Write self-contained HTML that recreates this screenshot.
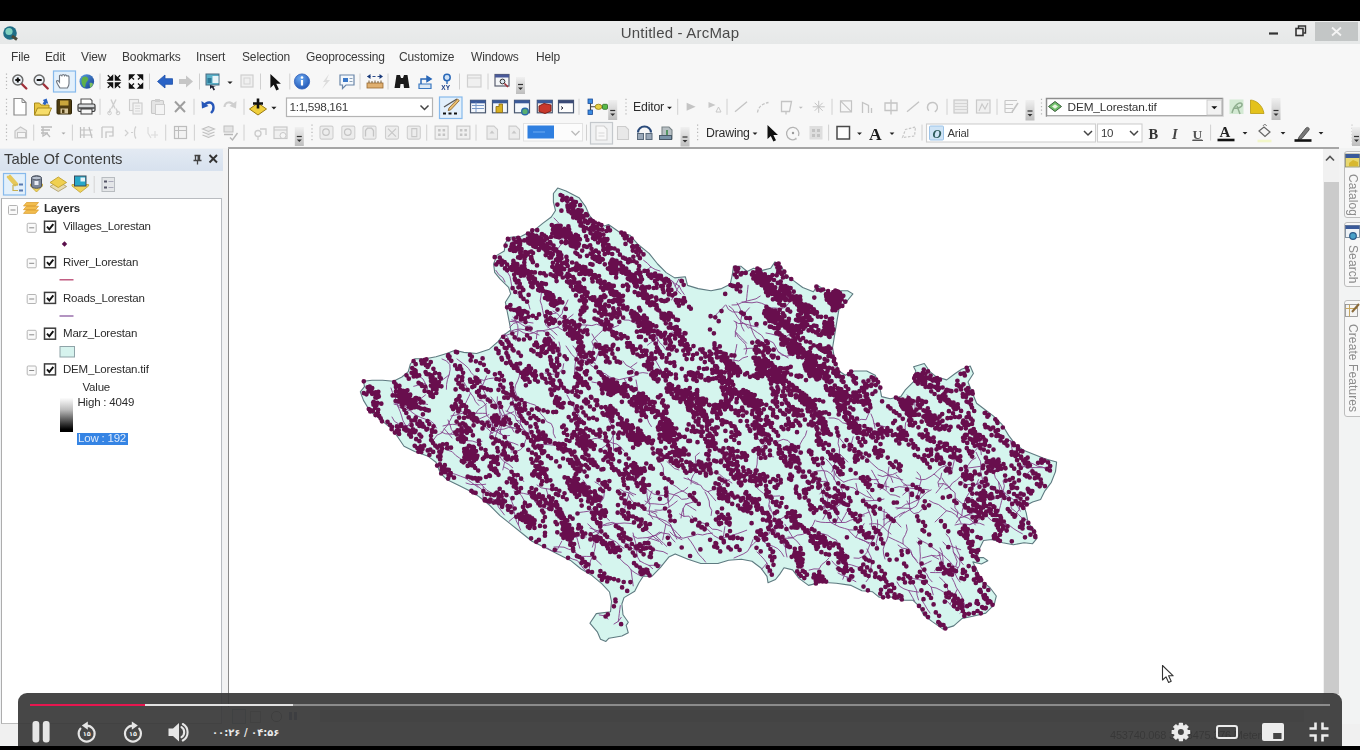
<!DOCTYPE html>
<html lang="en">
<head>
<meta charset="utf-8">
<title>Untitled - ArcMap</title>
<style>
html,body{margin:0;padding:0;}
body{width:1360px;height:750px;overflow:hidden;background:#000;position:relative;font-family:"Liberation Sans",sans-serif;color:#333;}
#frame{position:absolute;left:0;top:21px;width:1360px;height:725px;background:#f3f3f3;overflow:hidden;filter:blur(0.6px);}
.abs{position:absolute;}
#titlebar{left:0;top:0;width:1360px;height:23px;background:linear-gradient(#eceded,#e6e8e8);}
#title{left:0;width:1360px;top:3px;text-align:center;font-size:15px;color:#4a4a4a;letter-spacing:0.2px;}
#menubar{left:0;top:23px;width:1360px;height:25px;background:#f7f7f7;}
#menubar span{position:absolute;top:6px;font-size:12px;letter-spacing:-0.15px;color:#3a3a3a;white-space:nowrap;}
#toolbars{left:0;top:48px;width:1360px;height:79px;background:#f7f7f7;}
#toc{left:0;top:127px;width:223px;height:600px;background:#f0f2f4;}
#tochead{left:0;top:1px;width:223px;height:22px;background:linear-gradient(#e3eaf3,#d7e1ee);}
#toctitle{left:4px;top:3px;font-size:14.8px;color:#3c3c3c;}
#toctree{left:0.500px;top:50px;width:219px;height:524px;background:#fff;border:1px solid #b9bcc0;border-left:1.500px solid #adadad;border-bottom:1.500px solid #bdbdbd;}
.lyr{position:absolute;line-height:13px;font-size:11.5px;color:#2c2c2c;white-space:nowrap;letter-spacing:-0.2px;}
#map{left:228px;top:126px;width:1094px;height:558px;background:#fff;border-left:1px solid #8a8a8a;border-top:2px solid #a6a6a6;}
#maptop{left:228px;top:126px;width:1111px;height:2px;background:#a6a6a6;}
#vscroll{left:1323px;top:128px;width:16px;height:560px;background:#f1f1f1;}
#vthumb{left:0.500px;top:32.500px;width:15px;height:512px;background:#cbcbcb;}
#rdock{left:1341px;top:127px;width:19px;height:600px;background:#f2f3f3;}
.vtab{position:absolute;left:2.500px;width:18px;border:1px solid #bdbdbd;border-radius:3px;background:#f7f7f7;}
.vtab span{position:absolute;left:1.500px;top:18px;writing-mode:vertical-rl;font-size:12px;line-height:14px;color:#8c8c8c;letter-spacing:0.1px;white-space:nowrap;}
#ctrl{position:absolute;left:18px;top:693px;width:1324px;height:53px;background:rgba(56,56,56,0.925);border-radius:9px 9px 0 0;}
#time{position:absolute;left:194px;top:33.500px;font-family:"DejaVu Sans","Liberation Sans",sans-serif;font-weight:bold;font-size:10px;color:#e8e8e8;white-space:nowrap;direction:ltr;}
</style>
</head>
<body>
<div id="frame">
  <div id="titlebar" class="abs"></div>
  <div id="title" class="abs"><span id="titlespan">Untitled - ArcMap</span></div>
  <div id="menubar" class="abs">
    <span style="left:11px">File</span>
    <span style="left:45px">Edit</span>
    <span style="left:81px">View</span>
    <span style="left:122px">Bookmarks</span>
    <span style="left:196px">Insert</span>
    <span style="left:242px">Selection</span>
    <span style="left:306px">Geoprocessing</span>
    <span style="left:399px">Customize</span>
    <span style="left:471px">Windows</span>
    <span style="left:536px">Help</span>
  </div>
  <div id="toolbars" class="abs"></div>
  
  <div id="toc" class="abs">
    <div id="tochead" class="abs"></div>
    <div id="toctitle" class="abs">Table Of Contents</div>
    <div id="toctree" class="abs"></div>
    <div class="lyr" style="left:44px;top:53.8px;font-weight:bold" id="t_layers">Layers</div>
    <div class="lyr" style="left:63px;top:72.2px" id="t_vil">Villages_Lorestan</div>
    <div class="lyr" style="left:63px;top:107.8px" id="t_riv">River_Lorestan</div>
    <div class="lyr" style="left:63px;top:143.5px" id="t_road">Roads_Lorestan</div>
    <div class="lyr" style="left:63px;top:179.2px" id="t_marz">Marz_Lorestan</div>
    <div class="lyr" style="left:63px;top:214.9px" id="t_dem">DEM_Lorestan.tif</div>
    <div class="lyr" style="left:82.500px;top:233.2px" id="t_val">Value</div>
    <div class="lyr" style="left:77.500px;top:247.5px" id="t_high">High : 4049</div>
    <div class="abs" style="left:77px;top:284.500px;width:50.500px;height:12.500px;background:#3584e4"></div>
    <div class="lyr" style="left:78px;top:284.1px;color:#dce9fb" id="t_low">Low : 192</div>
    <div class="abs" style="left:59.500px;top:249.500px;width:13px;height:34.500px;background:linear-gradient(#fdfdfd,#bbb 35%,#000 92%)"></div>
  </div>
  <div id="map" class="abs"></div><div id="maptop" class="abs"></div>
<!--MAP-START-->
<svg id="mapsvg" class="abs" style="left:0;top:-21px" width="1360" height="750" viewBox="0 0 1360 750"><path d="M557.7 188.1 566 191 579 197.7 585.4 206.3 589.7 215.9 596 223 604.6 226 608.5 224.5 619.2 232 629.9 235.2 638.4 244.8 649.1 253.4 657.6 264 666.2 272.6 674.7 277.9 685.4 276.8 687.5 285.4 698.2 288.6 711 290.7 721.6 288.6 730.2 284.3 732.3 274.7 733.4 266.2 740.8 266.2 747.2 271.5 753.6 268.3 762.2 270.4 770.7 268.3 775 261.9 781.4 266.2 785.7 274.7 794.2 281.1 802.7 287.5 813.4 291.8 817.7 285.4 824.1 289.6 830.5 292.8 839 290.7 847.6 290.7 852.9 293.9 847.5 300.5 839 309 836.8 321.9 834.7 334.7 832.6 347.5 834.7 360.3 839 371 845.4 375.2 853.9 371 866.7 371 875.2 375.2 879.5 385.9 881.6 396.6 890.2 398.7 900.8 396.6 905.1 390.2 913.6 381.6 915.8 371 913.6 366.7 924.3 363.5 929.6 371.3 936 376.7 946.7 379.9 955.2 373.5 961.6 369.2 970.2 366 973.4 373.5 968 382 972.3 392.7 976.6 403.3 985.1 409.7 993.6 416.1 1002.2 424.7 1008.6 435.4 1015 443.9 1023.5 450.3 1034.2 454.6 1044.9 458.8 1056.6 462 1055.5 471.6 1051.3 482.3 1044.9 490.8 1040.6 499.4 1032.6 502.1 1024.1 506.4 1026.2 512.8 1028.3 523.5 1034.7 529.9 1036.9 538.4 1032.6 543.7 1024.1 542.7 1013.4 544.8 1002.7 542.7 992.1 539.5 983.5 540.5 979.3 549.1 977.1 557.6 983.5 557.6 987.8 560.8 981.4 564 972.9 561.9 977.1 570.4 981.4 581.1 989.9 587.5 996.3 596 994.2 604.6 985.7 613.1 972.9 616.3 962.2 618.4 953.7 625.9 943 629.1 932.3 621.6 923.8 615.2 919.5 606.7 913.1 600.3 902.4 600.3 891.8 597.1 879 597.1 872.6 591.8 861.9 590.7 851.2 585.4 836.3 583.2 821.3 582.2 808.5 585.4 799 578.4 792.6 569.9 784 567.7 779.8 574.1 775.5 579.5 768 582.7 767 576.3 760.6 567.7 752 561.3 741.4 559.2 728.6 560.3 717.9 563.5 700.8 563.5 688 559.2 675.2 553.9 668.8 557.1 660.3 567.7 651.8 576.3 643.2 576.3 639 582.7 634.7 591.2 624 597.6 621.9 604 623 614.7 628.3 622.2 626.2 625.4 628.3 632.8 621.9 636 609 638.2 605.9 641.4 600.5 639.2 597.3 631.8 589.9 623.2 596.3 613.6 610.5 611.8 611.5 601.5 609.5 592 602 583.9 591.8 575.4 581.1 569 570.5 560.4 557.7 554 544.9 547.6 532 541.2 521.4 532.7 510.7 524.1 500 515.6 489.4 505 478.7 496.4 468 490 459.5 485.8 446.7 479.4 440.3 473 436 462.3 427.5 455.9 414.7 451.6 404 446.3 397.6 436.7 391.2 428.2 380.5 419.6 369.9 411 363.5 400.4 360.3 391.9 364.5 386.6 363.5 381.2 372 380.2 382.7 380.2 393.4 381.2 401.9 377 408.3 371.6 410.4 364 414.7 358.8 425.4 358.8 436 356.7 446.7 353.5 455 350.3 463.8 352.4 476.6 353.5 489.4 349.2 498 341.7 502 336.4 510.7 330 509.6 323.6 507.5 313 505.4 302.3 510.7 293.8 508.6 287.4 500 278.8 494.7 272.4 493.6 263.9 496.8 255.4 504.3 251 505.4 242.6 510.7 237.2 521.4 236.2 527.8 233 536.3 228.7 542.7 223.4 551.3 217 555.5 210.5 553.4 202 553.4 193.5Z" fill="#d5f5ee" stroke="#5e7a80" stroke-width="1.1" stroke-linejoin="round"/><path d="M844 482 848.7 480.3 853.5 479.1 858.5 479 863.5 478.1 868.3 479.4 873.3 479.6 878.3 479.7M988 460 990.8 464.2 993.9 468 994.1 473 995.4 477.8 998.5 481.8 1000.8 486.2 1002.5 490.9 1005.1 495.2 1008.9 498.4M998.5 481.8 999.1 485.7 999.6 489.7M559 342 560.2 346.9 560.1 351.9 558.5 356.6 555.8 360.8 554.4 365.6 555.5 370.5M595 368 590.8 365.3 587.8 361.3 585.6 356.8 583.3 352.4M587.8 361.3 584 360.2 580.1 359.1 576.3 358M790 516 785 516.4 780.7 518.9 777.8 523 774.2 526.5 771.2 530.5 768.5 534.7 764.1 537.2 759.8 539.7 754.9 538.9M771.2 530.5 768.3 533.2 765.4 535.9 762.4 538.7M749 327 753.3 329.5 757.4 332.5 761.5 335.2 764.4 339.3 767.3 343.4M929 490 924.1 489.3 919.1 489.3 914.1 488.5 909.1 488.1 904.2 487.2 899.3 486.6 894.4 487.8 890.3 490.7M845 500 843.2 495.3 842.2 490.4 839.9 486 836.2 482.7 834 478.2 831.2 474 827.1 471.2 822.1 470.6 817.1 471 812.3 472.3M648 514 652.4 516.3 657.3 517.5 661.9 519.4 666.5 521.3 670.4 524.4 672.4 529 674.6 533.5 677.3 537.7 681.9 539.6M670.4 524.4 672 528.1 673.6 531.8 675.2 535.4 676.8 539.1M557 335 553.4 331.6 549.5 328.4 545.7 325.1 545.4 320.1 543.8 315.4 542.7 310.5 541.8 305.6 540.2 300.9 541 295.9 541.6 291M543.8 315.4 547.7 314.7 551.7 313.9 555.6 313.2M829 558 825.5 561.6 821.6 564.7 819 569 814 568.9 809.1 570.1M659 354 658.5 349 657.6 344.1 657.5 339.1 656.3 334.3 655.4 329.3 652.5 325.3 648.3 322.5 643.4 321.3 639.9 317.8 636.1 314.5M961 523 958.8 518.5 955.6 514.7 951.3 512 946.5 510.7 942.6 507.6 938.6 504.6 933.8 503 929.4 500.6M946.5 510.7 943.7 513.5 940.8 516.3 938 519.1 935.1 521.9M917 542 919.9 546.1 920 551.1 920.4 556.1 919.9 561.1 920.4 566 922.7 570.4 926.6 573.6 928.7 578.1 932.1 581.8M920.4 566 924 564.4 927.6 562.7 931.2 561M811 474 814.1 477.9 816.7 482.2 819.7 486.2 822.1 490.6 825.2 494.5 827.9 498.8 827 503.7 823.1 506.9M822.1 490.6 822.7 494.6 823.2 498.5M568 300 565.9 304.5 563.2 308.7 562.1 313.6 558.8 317.4 555.5 321.2 551.4 324 547.8 327.5M391 388 392.6 392.7 395.2 397 396.3 401.9 398 406.6 400 411.2 401.6 415.9 403 420.7 405.5 425.1M398 406.6 401.8 407.9 405.6 409.2 409.3 410.5M896 475 899.8 478.2 902.4 482.5 906.5 485.3 908.9 489.7 909.4 494.7 909.5 499.7 909.4 504.7M908.9 489.7 905.9 492.3 902.8 494.9M530 326 525 326.4 520.7 323.8 516.6 321.1 511.7 319.9M960 582 957.1 578 955 573.4 950.5 571.2 945.5 571.5 940.6 572.6 935.6 572.6 930.6 572.5M945.5 571.5 942.9 568.4 940.3 565.4M441 432 445.7 433.8 450.7 434.1 454.1 430.5M450.7 434.1 454.6 434.5 458.6 434.9 462.6 435.3M943 542 946.3 545.7 951.3 546.3 956 548 960.7 549.7M451 416 455.9 415 460.7 413.7 465.7 412.8 470.6 413.2 475.6 413.4 478.6 409.4 482.8 406.7 486.7 403.5M470.6 413.2 474.6 413.2 478.6 413.3 482.6 413.3 486.6 413.4M838 573 842.4 575.4 847.1 577 851.5 579.4 855.9 581.7M847.1 577 847.4 581M448 420 450 424.6 451.3 429.4 454.3 433.4 459 435.3 463.1 438.1 467.4 440.7 472.4 441 477.1 442.6 482 441.3M463.1 438.1 463.4 434.1 463.7 430.1 464 426.1 464.4 422.1M459 377 462.7 380.4 465.4 384.6 467.6 389 470.5 393.1 473.5 397.1 475.5 401.7 478.9 405.4M470.5 393.1 468.8 396.7 467 400.3 465.3 403.9M646 488 649.8 491.2 653.9 494.1 658.8 495.1 663.8 495.5 668.3 493.4 673.2 494.5 678 496.1 681.7 499.3 686.7 498.9 691.3 496.8M640 561 644.4 563.4 648.9 565.4 652.7 568.7M648.9 565.4 652.9 565.3 656.9 565.2 660.9 565.1M854 558 859 558.3 863.5 556.2 866.9 552.5 868.6 547.8 870.5 543.2 873.4 539.1 875.1 534.4 876.9 529.7 877.7 524.8 877.4 519.8M870.5 543.2 866.8 541.8 863.1 540.4 859.3 538.9M599 534 595.2 530.8 591.5 527.4 587.8 524M605 412 608 416 609.2 420.9 611.5 425.3 613.5 429.9 613.2 434.9 611.4 439.5 608.2 443.4 604.4 446.5 600.2 449.3M613.2 434.9 613.3 438.9 613.4 442.9 613.5 446.9 613.6 450.9M756 436 758.9 440.1 763.6 441.8 768.6 442 773.5 441 778.5 441.1 783.2 439.3 788 440.5 791.3 444.3 795 447.6M829 418 834 418 838.8 419.5 842.6 422.8 847.4 423.9 852.4 424.2 856.6 421.5 861.1 419.3 866.1 419.7 868 415.1 870.2 410.6M852.4 424.2 849.6 421.4 846.7 418.6M536 438 531.7 435.5 527.5 432.7 523.4 429.9 518.5 429 513.6 428 508.6 427.5 503.9 429.1 498.9 429.6 494.3 431.5 490.1 434.2M513.6 428 509.8 426.7 506 425.4M554 547 559 546.9 564 547.2 568.5 549.2 573.4 550.4 576.7 554.2 581.2 556.4 586.2 556.4 591.2 556.5M573.4 550.4 576.3 553.1 579.3 555.8M547 548 551.4 550.5 556.2 551.7 561.2 552.2M556.2 551.7 558.1 548.1 560 544.6 561.8 541.1M877 480 879.4 484.4 882.5 488.3 886.7 491.1 890.3 494.6 895.2 495.2 899.8 497.2M620 489 624.2 491.7 629.1 492.9 633.2 495.8M629.1 492.9 628 496.7 626.9 500.6 625.8 504.4 624.7 508.3M918 563 915 559 912 555 910.7 550.2 906.7 547.1 903 543.9 903 538.9 905.5 534.5 907.2 529.8 906.4 524.9M903 543.9 899.4 542.1 895.7 540.4 892.1 538.7 888.5 537M514 432 511.6 427.6 508.5 423.7 505.7 419.6 502.3 415.9 500.1 411.4 498.7 406.6 497.2 401.8 497.4 396.8M502.3 415.9 506.1 414.5 509.9 413.2 513.6 411.8M726 305 728.4 309.4 732.7 311.9 737.7 312.1 742.1 314.4 745.5 318 750.5 318.4M816 521 820.8 522.2 825.8 522.5 830.8 522.5 835.8 522.4 840.8 522.5 845.8 522.4 850.3 520.3 855.1 518.7 859.3 516.1 864.3 515.9M840.8 522.5 842.8 519 844.8 515.5 846.7 512M1051 472 1046.6 469.7 1042.4 466.9 1037.5 466.2 1033.1 463.8 1028.4 462 1023.8 460 1020.2 456.5 1017.1 452.6 1012.7 450.2M1028.4 462 1025.6 464.9 1022.8 467.7M940 548 942.2 552.5 942.8 557.4 943.1 562.4 944.4 567.2 944.2 572.2M943.1 562.4 940.2 565.2 937.3 568 934.5 570.8M917 472 920.2 475.8 921.1 480.7 919.7 485.5 919.1 490.5 917.2 495.1M919.7 485.5 915.7 485.4 911.7 485.3 907.7 485.2 903.7 485.1M610 331 605.5 328.8 601.4 325.9 596.7 324.2 591.9 325.6 586.9 325.1 581.9 324.9 577.1 323.6 572.2 322.5 567.3 323.2M586.9 325.1 584.7 328.4 582.4 331.7M510 497 511.8 501.7 513.7 506.3 514 511.3 515.3 516.1 516.3 521 518.7 525.4 520.6 530.1M515.3 516.1 512.2 518.7 509.1 521.3M634 524 629 523.3 624.1 523 619.1 523.4 614.1 523.4 609.3 524.9 604.3 525.6 599.7 523.8 595.6 520.9M756 487 759.7 490.4 763.6 493.5 767.7 496.4 769.5 501 768.7 506 770.3 510.7M767.7 496.4 771.7 496.2 775.7 496.1 779.7 495.9M590 528 594.7 529.7 599.3 531.6 602.8 535.2 607.2 537.4 611.7 539.8 616.2 541.9 619.7 545.5 623.9 548.2M675 542 671.6 538.3 669.1 534 664.1 533.3 659.2 532.2 655.2 535.2 650.8 537.4 647.4 541.2 644.6 545.3 642.2 549.7M655.2 535.2 658.1 538 661 540.8 663.8 543.6 666.7 546.4M491 397 494 401 497 405 499.2 409.5 500.1 414.4 501.3 419.3 500.7 424.2 498.5 428.7 496.5 433.3 495 438 496.1 442.9M501.3 419.3 504.7 421.4 508 423.6M466 483 470.8 484.5 475.8 484.5 480.7 484.8 485.7 484.2M475.8 484.5 478.8 487 481.9 489.6 484.9 492.2M715 355 720 355.4 724.1 358.2 728.9 359.7 733.9 360.2 738.8 361 742.8 358 747.6 356.5M733.9 360.2 734.6 356.3 735.3 352.4 736.1 348.4 736.8 344.5M744 331 741.7 326.6 740.5 321.7 741.5 316.8 741.3 311.8 739.5 307.1 737 302.8M741.5 316.8 744.1 313.8 746.7 310.8 749.4 307.8M419 376 423 379 425.3 383.4 427.6 387.9 426.9 392.8M425.3 383.4 421.5 384.4 417.6 385.3 413.7 386.3M759 534 762.2 537.9 764.3 542.4 768.6 544.8 773.4 546.4 777.8 548.7 781.3 552.3 783.9 556.5M567 537 571.9 538.2 576.6 536.7 581.5 535.5 586.2 537.1M576.6 536.7 577.7 540.6 578.7 544.5 579.8 548.3M950 594 947.8 589.5 946.4 584.7 943.3 580.8 939.6 577.4M843 494 842.7 499 841 503.7 836.9 506.6 832.5 508.9 827.8 510.5 825.3 514.9 822.9 519.3M832.5 508.9 834.8 512.1 837.1 515.4 839.4 518.7 841.8 521.9M473 476 475.8 480.1 480.1 482.8 483.3 486.6 486.8 490.1 491.1 492.7M483.3 486.6 483.2 490.6 483.1 494.6 483 498.6M1003 491 1006.7 494.3 1010.6 497.5 1014.6 500.5 1019 502.9 1023.8 504.1M1014.6 500.5 1016.5 504 1018.4 507.6 1020.3 511.1M891 534 887.1 530.9 883.7 527.2 879.5 524.5 874.6 523.6 869.6 524M922 558 926.8 556.7 931.7 555.4 936.6 556 941.5 554.9M931.7 555.4 935.2 557.3 938.7 559.1M595 482 599.3 484.6 602.3 488.5 604.3 493.1 603.6 498.1 600.7 502.2 597 505.5 593.1 508.6 588.8 511.2 583.8 511.9 578.9 512.5M600.7 502.2 598.9 498.6 597.1 495M651 512 655.7 513.8 657.7 518.3 661.9 521.1 665.9 524.1 670.4 526.2 674 529.7 677.4 533.3 680.9 536.9M665.9 524.1 665.1 528 664.3 531.9 663.5 535.8 662.7 539.8M633 533 634.2 537.9 635.6 542.7 637.1 547.4 636.6 552.4 637.7 557.3 640.2 561.6M637.1 547.4 641.1 547.4 645.1 547.3 649.1 547.3 653.1 547.2M568 557 572.6 559.1 577.3 560.5 580.5 564.4 583.3 568.5 586.9 572M889 467 888.2 471.9 888 476.9 885.7 481.4 883.5 485.9 880.2 489.6M885.7 481.4 886 485.4 886.3 489.4M636 380 636.9 384.9 637.6 389.9 638.9 394.7 642 398.6 644.3 403 645.3 407.9 645.5 412.9 647.1 417.7 648.7 422.4 651.4 426.6M689 495 684.8 492.3 680.4 490 676.5 486.8 672.2 484.2 668.1 481.3 664.7 477.7 663.4 472.8 663.3 467.8 661 463.4M538 444 543 444.6 548 444.6 552.9 445.1M885 559 883.6 554.2 883.2 549.2 884.6 544.4 886.9 540 888.2 535.2 888.5 530.2 890.1 525.4 892.1 520.9 895 516.8M530 309 528.6 304.2 525 300.7 521.7 297 517.5 294.3 514.6 290.2 511.7 286.1 510.9 281.2 509.9 276.3 507.4 272 504.3 268.1M826 459 829.5 462.6 832.5 466.6 834.2 471.3 836.1 475.9 839.8 479.3 843.8 482.2M834.2 471.3 834.1 475.3 834 479.3M505 334 508.1 337.9 509.7 342.6 510.1 347.6M930 613 927.1 608.9 924.7 604.6 921.9 600.4M864 456 867.7 459.4 871.3 462.8 875 466.2 878.8 469.4 883.4 471.3 887.7 474 891.1 477.7 892.8 482.4M538 331 543 330.6 547.9 329.7 552.8 328.6 557.5 327.1 561.2 323.7 565.1 320.5 569.1 317.6 573.1 314.5M557.5 327.1 561 329.1 564.4 331.1M945 489 949.6 487 952.5 482.9 956.6 480.2 960.1 476.6 963.7 473.1 965.5 468.4 968.6 464.5 971.5 460.4 975.8 457.9M518 445 513.4 443.1 508.6 441.7 504.9 438.3 501.7 434.4 498.8 430.4 494.9 427.3 491.1 424 488.6 419.7M884 499 879.2 500.3 874.2 500.4 869.2 500.8 864.2 500.6M874.2 500.4 871.8 497.2 869.4 494 867 490.8M392 417 394.5 421.4 398.7 423.9 403.4 425.7 408.4 425.7 413.2 424.4M403.4 425.7 405.7 429 407.9 432.3 410.2 435.6M483 500 488 499.9 492.9 499 496.8 502.1 498.3 506.9 501.4 510.9 504.4 514.9M702 527 706.8 528.5 710.3 532.1 713.8 535.6 718.2 538.1 723.1 538.4 727.6 536.2 732.5 535.1 737.3 533.7 742 532 746.7 530.2M723.1 538.4 723.7 534.5 724.3 530.5 724.9 526.6M583 480 586 484 589 488 592.6 491.5 596.9 494 599.5 498.3 600.2 503.2 601.8 508 604 512.5 605.9 517.1 609.4 520.6M907 501 909.4 505.4 910.2 510.3 914 513.6 918.8 512.4 922.5 509 926.3 505.8 931.1 504.5M442 359 446.6 361 449.9 364.7 450.1 369.7 449.2 374.7 447.5 379.4 446.6 384.3 446.4 389.3M449.2 374.7 446.1 377.2 442.9 379.6 439.8 382.1M691 484 691.4 479 693.6 474.5 697.1 470.9 696.3 466 695.6 461.1 695.4 456.1 699.3 452.9M545 373 549.8 374.5 554.7 374 559.4 372.4 562.8 368.6 563.7 363.7M684 478 688.7 479.6 693.4 481.3 698 483.5M787 557 785.9 552.1 785.4 547.1 786.3 542.2M514 491 518.7 492.7 523.6 493.4 528.5 494.5 532.4 497.6 535.1 501.8 539.4 504.5 543.2 507.7 548.1 508.8 553.1 508.6M535.1 501.8 538.1 504.5 541 507.2M457 359 461 362 465 365 468.6 368.5 471.2 372.7 474.7 376.3 478.9 379 483.7 380.4 488.5 378.7 493.4 378.1M474.7 376.3 476.6 379.8 478.5 383.3M591 356 592.7 351.3 593.6 346.4 591.9 341.7 594.9 337.7 598.5 334.3 602.1 330.8 606.9 329.3 611.3 331.6 616.3 331.3 620.6 334M871 498 866.3 496.3 862 493.7 857.7 491.2 853.9 488 849 486.9 844.2 485.4M857.7 491.2 856.8 487.3 856 483.4M956 523 959.2 519.1 961.9 514.9 962.4 510 964.1 505.2 964.9 500.3 967.2 495.9 970 491.7 973 487.8 976.5 484.2 978.5 479.6M964.9 500.3 968.7 499 972.4 497.8M972 433 976.2 435.7 978.9 439.9 980.2 444.7 980.8 449.7 981.3 454.7M980.2 444.7 977.6 447.8 975 450.8 972.4 453.9 969.8 456.9M916 478 920.6 479.8 925.6 479.3 930 476.9 934.1 474.1 937.7 470.6 941.5 467.3 946.2 465.5M934.1 474.1 937.2 476.7 940.2 479.3M692 516 694.7 520.2 699.3 522 704.1 523.4 708.6 525.6 712.2 529.1 717.2 529.5 721.8 531.3M666 350 663.1 345.9 659.6 342.4 657.2 338 653 335.3 648.7 332.7 643.7 332.1M657.2 338 654 340.4 650.7 342.7 647.5 345.1M863 456 858.3 454.2 854.1 451.6 850.3 448.3 845.9 446 842.8 442 839.6 438.2M850.3 448.3 851.3 444.4 852.2 440.6 853.2 436.7M621 527 616.9 524.1 612.2 522.3 607.4 523.4 602.7 525.3 600.1 529.5 597.9 534 594.1 537.3 593.9 542.3 592.4 547.1M600.1 529.5 596.4 531.2 592.8 532.8M1016 495 1017.4 499.8 1019.7 504.2 1019.5 509.2 1016.4 513.2M671 280 674.7 283.4 679.1 285.8 681.3 290.3 684.2 294.4M679.1 285.8 677.2 289.4 675.3 292.9 673.5 296.4 671.6 300M660 271 655.2 269.5 650.9 267 647.5 263.3 643.6 260.3M650.9 267 647.6 269.4 644.4 271.7 641.2 274.1M506 411 510.6 413 514.8 415.7 516.4 420.4 520.1 423.8 522.7 428.1M516.4 420.4 520.3 421.1 524.3 421.7 528.2 422.3M530 441 528.3 436.3 526.1 431.8 522.9 427.9 520.5 423.6 520.6 418.6 518.6 414 517.5 409.1 518.4 404.2 519.2 399.2M837 434 838.6 438.7 838.1 443.7 839.5 448.5 839.3 453.5 837.3 458.1 835.1 462.6 833.6 467.3 831.9 472M839.3 453.5 842.1 456.3 845 459.2 847.8 462M533 323 528 322.3 523 322.2 518.1 321.9 513.3 323.6 509.9 327.2M518.1 321.9 514.1 321.7 510.1 321.4M624 451 620.8 447.1 616.9 444.1 612 442.9 607.6 440.6 602.7 439.7 597.9 438.1 593 438.9 589 441.9 585.4 445.3 580.4 444.6M633 536 637.4 538.3 642.4 537.9 647.4 537.6 652.2 536.3 657.1 535 661.3 532.3M647.4 537.6 651.2 538.8 655 540 658.8 541.3M986 512 987.4 516.8 991.1 520.2 995.7 522 1000.7 521.6 1005.4 523.4 1009.8 525.7 1013.8 528.8 1018 531.4 1022.4 533.8M1005.4 523.4 1005.9 527.4 1006.4 531.4M451 473 455.8 474.4 460.5 476.2 465.2 477.9 470.2 477.9 475.1 477.5M465.2 477.9 468.4 480.3 471.6 482.6 474.9 485 478.1 487.3M959 518 963.9 516.8 968.4 514.8 971.7 511M968.4 514.8 972.4 515.3 976.4 515.7M983 481 981.7 476.2 980.7 471.3 980.9 466.3 980.5 461.3 978.2 456.8 976.1 452.3M980.9 466.3 976.9 466.8 973 467.4 969 467.9 965 468.5M764 340 769 340.5 773.4 342.8 775.8 347.1 778.1 351.6 781.8 355 786.6 356.2 791.5 355.2 795.5 352.2M778.1 351.6 781.5 353.7 784.8 355.8 788.2 358M583 357 587.8 358.5 592.4 360.4 595.6 364.3M907 395 911 398 914.7 401.4 915 406.4 915.1 411.4 912.7 415.8 909.1 419.3 905.6 422.8 905.1 427.8 906 432.7M499 387 503.3 389.5 507.4 392.5 511.2 395.7 513.1 400.3 513.2 405.3 515 409.9 516.1 414.8 519.6 418.4M513.1 400.3 511.2 403.8 509.3 407.3 507.4 410.8M554 218 557.5 221.6 560.6 225.5 561.2 230.4 563 235.1 561.8 240 560.7 244.8 557.8 248.9 553.6 251.6 548.7 252.5M519 330 523.2 332.7 528 334.2 532.8 333.1 537.3 330.8 542.3 330.8 547 332.6 551.2 335.2 554.5 338.9M537.3 330.8 536.8 334.7 536.4 338.7M921 492 919.3 496.7 918.6 501.7 916.3 506.1 911.9 508.5 907.6 511 903.2 513.5 899.5 516.8M911.9 508.5 907.9 508.3 903.9 508.2 899.9 508 895.9 507.8M492 428 495.7 431.3 500.1 433.8 504.5 436.1 509.5 435.5M500.1 433.8 500.7 429.9 501.4 425.9 502.1 422 502.8 418.1M908 578 911.3 581.8 914.4 585.7 916.5 590.2 917.1 595.2 918.6 600M553 311 557.3 313.5 560.5 317.4 564.9 319.8 568.3 323.4 571.7 327.1 574.6 331.2M564.9 319.8 563.8 323.6 562.6 327.5M567 395 569.4 399.4 572.3 403.4 574.2 408.1 577 412.2 579.4 416.6 583 420M574.2 408.1 574 412 573.7 416 573.5 420M394 404 398.8 405.4 403.5 403.9 408.4 402.9 413 405 417.7 403.2 422.7 403.3 427.6 404.5M413 405 416.1 402.4 419.2 399.9 422.4 397.4 425.5 394.9M871 414 872.9 418.6 874 423.5 875.1 428.4M874 423.5 877.8 424.7 881.6 425.8 885.4 427M705 492 707.3 496.4 709.2 501.1 709.5 506.1 711.8 510.5 711.1 515.5M710 318 714.7 316.3 718 312.6 721.7 309.1 725 305.4M641 552 636.2 550.5 631.8 548.1 628.6 544.3 623.7 543.2M681 294 677.3 290.6 675.2 286.1 672.7 281.8M675.2 286.1 677 282.6 678.8 279M956 546 957.4 550.8 959.6 555.3 960 560.3 959.6 565.3 957.1 569.6M878 548 876.1 543.4 877.3 538.5 878.4 533.6 880.5 529.1 884 525.5 887.7 522.1 892.3 520.2 896.1 517.1 900.1 514 904.7 511.9M884 525.5 884 521.5 884.1 517.5 884.1 513.5 884.2 509.5M744 349 749 348.3 753.9 348.2 758.9 348.2M732 305 737 304.8 741.6 302.7 746.3 301.2 751.2 300 756 298.8 760.2 296.1M746.3 301.2 746.8 297.3 747.2 293.3 747.7 289.3 748.1 285.3M600 319 604.5 321.1 607.8 324.8 611.4 328.4 614.7 332.1 618.6 335.3 622.1 338.8M611.4 328.4 615 326.8 618.7 325.2M515 488 517.9 492.1 521.4 495.6 523.9 500 524.8 504.9 524.3 509.9M523.9 500 526.6 503 529.2 505.9M832 561 835.2 564.8 839.5 567.5 844 569.7 844.6 574.6 842.8 579.3M844 569.7 840 569.1 836 568.4M670 532 673.6 535.5 678.3 537.2 683.2 538.2 688 536.9 692.9 535.9 697.6 534.2 702.6 535 707.4 533.7 712.4 533.1M455 412 452.3 416.2 450 420.6 447.6 425 444.3 428.8 441.7 433.1 437.1 435 434.1 439 431.7 443.4M444.3 428.8 446.9 431.8 449.5 434.9 452 438M901 527 897.6 523.4 894.1 519.8 890.5 516.3 886.9 512.8 882.3 511 877.8 508.7M890.5 516.3 886.8 517.8 883.1 519.4M594 537 595.1 541.9 595.3 546.9 594.2 551.7 592.6 556.5 590.4 561 589.8 565.9 588.8 570.8M592.6 556.5 595.5 559.2 598.4 562 601.3 564.7M749 500 744.5 502.2 741.9 506.5 741.8 511.5M951 490 948 486 943.6 483.6 938.7 483.9M943.6 483.6 941.1 486.7 938.6 489.8 936.1 492.9M1006 439 1010.6 440.9 1015.3 442.6M1010.6 440.9 1011.3 444.9 1012 448.8 1012.8 452.8 1013.5 456.7M897 509 901.7 507.3 905.7 504.3 910.6 503.3 915.1 501.1 919.8 499.3 923 495.5 926.8 492.3 931.2 489.9M624 320 629 320.1 633.5 322.4 638.2 324 642.3 326.9 646.2 330 649.8 333.5 652 338 654.1 342.5 657.8 345.8 660.8 349.8M646.2 330 650.1 330.9 654 331.9 657.9 332.8 661.8 333.8M505 282 502.7 277.6 498.7 274.5 495.9 270.4M889 487 884.1 485.9 879.4 484.2 874.5 483.5M879.4 484.2 877.5 480.7 875.5 477.2 873.6 473.7 871.6 470.2M657 512 652.1 511.1 647.1 511 642.5 508.9 638.5 505.9 634.4 503.1 630.8 499.6 628.6 495.1M952 452 954.5 456.3 954.1 461.3 953 466.2 951.8 471 948.6 474.9M824 504 824.9 508.9 827.1 513.4 828.2 518.3 830.8 522.6 835.2 524.8 839.7 527 844.5 528.4 849.3 529.8 854.3 530.1 859.3 529.4M835.2 524.8 836.7 521.1 838.1 517.4M614 624 618.3 621.4 621.2 617.4M618.3 621.4 618.8 617.5 619.3 613.5 619.8 609.5 620.3 605.6M456 408 460.3 410.6 464.5 413.3 468.9 415.7 473.1 418.3 478 419.5 481.4 423.2 485 426.6 488.9 429.8 492.4 433.4M478 419.5 481.6 417.9 485.3 416.3 488.9 414.6M869 544 865 541.1 860.3 539.1 855.7 537.3 852 533.9 848.7 530.2M855.7 537.3 857.8 533.9 859.9 530.5 862 527.1 864.1 523.7M443 426 447.9 424.8 452.8 424.3 457.8 424.9 462.5 426.5 467.5 427 471.1 430.5 474.3 434.3M462.5 426.5 460.3 429.9 458 433.2M504 467 508.5 469.3 512 472.8 516.6 474.9 520.7 477.6 523.8 481.6M516.6 474.9 516.1 478.8 515.6 482.8 515.1 486.8M566 346 568.8 350.1 571.6 354.3 575.2 357.7 579.6 360M592 382 596.9 382.9 601.8 383.9 606.5 385.6 611.5 385.5 616.5 384.8 621.2 386.4 625.6 388.7 628.1 393.1 629.5 397.9M616.5 384.8 613.4 387.4 610.4 390 607.4 392.6M617 556 620.7 559.4 624.1 563 628.2 565.9 631.1 570 635.2 572.9 639.6 575.3 644.6 575.2M631.1 570 631.6 574 632.1 577.9 632.7 581.9 633.2 585.9M623 361 626 365 630.4 367.4 634.6 370.1M630.4 367.4 633.6 365 636.9 362.7M688 478 691.4 481.7 695.9 483.9 700.7 485.2 703.5 489.4 707.9 491.7 712.5 489.9 717 487.6 721.5 485.5 724.7 481.7 729.3 479.7M707.9 491.7 710.5 494.7 713.1 497.7 715.7 500.8M692 520 688.9 516.1 683.9 516.4 679.6 513.9M683.9 516.4 683.5 512.4 683.2 508.4M528 422 529.1 426.9 529.3 431.9 527.3 436.5 525.3 441.1 523.9 445.9 520.6 449.6 516 451.6 511.1 452M788 537 793 537.6 797.3 535.1 802.2 534.5 806.8 532.4 810.3 528.8 813.1 524.7 815 520.1M806.8 532.4 803.7 529.7 800.7 527.1 797.7 524.5M592 334 594.5 338.4 597.6 342.3 601 345.9 604 349.9 607.6 353.3M601 345.9 599.6 349.6 598.1 353.4 596.7 357.1 595.3 360.8M526 402 530.7 403.7 535.5 405.2 538.4 409.3 540.7 413.7 544.1 417.4 546.7 421.6 551.3 423.7 553.3 428.3 553.3 433.3 555.4 437.8M865 571 860.9 568.1 856.2 566.5 851.4 564.9 846.5 564.1M909 577 913.7 578.7 918.6 579.6 923.5 580.8 927.6 583.6 931.2 587.1 936.1 588 940.6 590.2 944.8 592.8 949.1 595.5M931.2 587.1 932.2 591 933.2 594.8M756 469 757.1 464.1 757.3 459.1 757.9 454.2 759.8 449.5 762.9 445.6 766.7 442.4M757.9 454.2 761.9 454.8 765.8 455.5 769.8 456.2 773.7 456.9M643 529 647.6 531 651.4 534.3 654.8 537.9 659 540.5 662.1 544.4M729 306 732.8 309.2 735.3 313.6 737.9 317.8 741 321.7 745.4 324.3 748.4 328.2M1048 467 1043 467.7 1038 467.6 1033 467.6 1028.1 467.7 1023.2 466.3 1018.6 464.6M1033 467.6 1030.3 470.5 1027.5 473.4M537 485 541.2 487.8 546.1 488.7 551 489.4 556 490M546.1 488.7 547.3 492.5 548.5 496.3 549.7 500.1 550.9 504M573 346 576.1 350 577.6 354.7 575.9 359.4 575.2 364.3 574.7 369.3 574.8 374.3M962 482 966.2 484.7 971.2 484.3 976.2 484.4 981.2 484 986 485.3M976.2 484.4 979.7 482.4 983.1 480.4 986.6 478.5M499 454 501 458.6 504.6 462.1 508.9 464.5 512.7 467.8M504.6 462.1 503.7 466 502.8 469.9M734 558 738.6 556 743.2 554 747.5 551.4 750.1 547.2 753.6 543.6 757.3 540.3 760.6 536.5 765.4 535.3M750.1 547.2 751.5 543.4 752.9 539.7M679 470 674.3 468.4 670.7 464.9 667 461.6M918 538 922 541 926.5 543.3 930.5 546.2 934.6 549.1 938.7 551.9 942.9 554.6 946.3 558.3 950 561.6 952.9 565.7 957.6 567.5M938.7 551.9 939.8 555.7 940.8 559.6 941.9 563.5M952 578 954.3 582.4 956.1 587.1 958.8 591.3 961.3 595.6 963.2 600.3 964.7 605 963.7 609.9 959.9 613.2M958 610 953.4 607.9 950.1 604.2 946.5 600.8M950.1 604.2 951.9 600.6 953.6 596.9 955.3 593.3 957 589.7M478 400 482.9 401.2 485.9 405.2 486.1 410.2 486.5 415.2 490 418.7 492.4 423.1 492.6 428.1 490.5 432.6 489.5 437.5M672 332 676.9 332.8 681.9 333 686.5 334.9M681.9 333 683.1 336.8 684.4 340.6M519 366 519.3 371 519.4 376 517.7 380.7 515.5 385.2 514.7 390.1 516.5 394.8 518.5 399.3M479 473 476.6 468.6 472.8 465.3 468.2 463.5 463.8 461.2 459.7 458.2 455.6 455.3 452.2 451.7 447.5 450.1 443.1 447.7 438.1 447.5M734 321 738.3 323.5 743.3 323.5 748.2 324.8 753 326.1 757.9 326.9M736 322 736.8 326.9 735.4 331.7 735.3 336.7M735.4 331.7 738.2 334.6 741 337.5 743.8 340.3 746.6 343.2M395 404 400 403.4 404.4 405.8 408.3 408.9 412 412.3 416 415.2 420.5 417.4 425.2 419.1 430 420.6 433.9 423.7 436.5 428M416 415.2 413.5 418.3 411 421.4 408.5 424.5 406 427.6M898 545 902 548.1 906.9 548.9 910.8 552 913 556.5 916.5 560.1M799 454 799.2 449 800.1 444.1 802.5 439.7 805.4 435.6 806.8 430.8M608 619 604.2 615.8 599.2 614.9M502 409 504.1 413.5 505.2 418.4 505.2 423.4M505.2 418.4 501.8 420.5 498.4 422.5 494.9 424.6M518 515 518.6 520 518.5 525M653 353 653.9 357.9 656.6 362.2 659.1 366.5 661.5 370.8 662.5 375.7 664.5 380.3M601 372 605.6 374 609.6 377 614.3 378.6 619.2 379.7 624 378.5 628.9 377.4 633.8 376.3 637.9 373.4 642.8 372.6 647.8 373.3M624 378.5 626 381.9 628.1 385.4 630.1 388.9M641 509 644.4 505.3 647.9 501.7 651 497.8M647.9 501.7 647.4 497.8 646.9 493.8 646.5 489.8M513 317 515.9 321.1 517.8 325.7 518.1 330.7 517.4 335.7 515.6 340.3M518.1 330.7 514.3 332.2 510.6 333.6 506.9 335.1 503.2 336.5M1003 481 1004.4 485.8 1003.3 490.7 1002.7 495.6 1001.7 500.5 1000.5 505.4 999.2 510.2M1002.7 495.6 999 497.1 995.3 498.5 991.5 500M757 552 760.6 555.5 764 559.2 767 563.2 768 568.1 768.1 573.1M767 563.2 764.3 566.2 761.7 569.2M749 320 750.5 324.8 751.7 329.6 753.6 334.3 756 338.6 760.5 340.9 764.8 343.5M625 485 627.4 489.4 631 492.8 635.7 494.6M645 501 649.2 503.7 654.2 503.8 659.2 504.3 664.2 504.5 668.6 502.1 671.8 498.3 674.7 494.2 679.2 492.1 684 490.6 687.8 487.4M668.6 502.1 668.3 498.1 668 494.1 667.8 490.2 667.5 486.2M539 335 534.4 333.1 529.7 331.4 524.9 329.8 520 329 515 329.7 510.3 331.4M942 478 944.5 482.3 948.2 485.7 951.4 489.6 955.1 492.9 955.2 497.9 954.9 502.9 954.9 507.9 958 511.9 956.9 516.7M955.2 497.9 958.3 500.4 961.4 502.9 964.6 505.4M649 547 653.3 549.6 658.1 550.8 663.1 551.6 667.5 553.9M681 518 681.8 513.1 683.3 508.3 685.8 504 690.7 502.8 695.4 501.3M685.8 504 689.2 506.1 692.5 508.3 695.9 510.4M742 302 747 302.5 752 302.8 756.9 302 761.7 303.3 766.3 305.4 770.6 307.9 775.6 308 780.6 308.7 785.4 307.3 788.5 303.4M655 510 660 510.3 664.9 509.5 669.2 506.9 673.3 504.1 677.2 501M669.2 506.9 668.3 503 667.4 499.1 666.5 495.2 665.6 491.3M951 508 955 511 959.3 513.5 963.4 516.5 968.1 518.1 972.1 521 975.3 524.9M963.4 516.5 967.1 515 970.8 513.6 974.6 512.2 978.3 510.7M897 582 899.6 586.2 903.9 588.8 908.6 590.5 913.6 591.4 918.5 592.1M908.6 590.5 910.6 594 912.6 597.5 914.5 601M820 463 821.8 467.7 824.4 471.9 825.5 476.8 827.5 481.4 825.5 485.9 823.1 490.3 819.8 494M827.5 481.4 823.5 481.4 819.5 481.5 815.5 481.5 811.5 481.6M688 538 691.1 541.9 693.8 546.1 696.3 550.5 698.9 554.7 702.5 558.2 705.6 562.1M652 491 650.1 495.6 648.6 500.4 650.1 505.2 649 510 650 514.9 652.9 519M939 487 937.9 482.1 940.7 477.9 941.7 473.1M710 473 715 472.8 719.7 474.4 723.5 477.7 727.8 480.2 731.9 483M818 533 822.9 533.8 827.7 535.3 831.9 538.1 836.4 540.1 838.3 544.7 841.3 548.8 844.4 552.7M766 333 770.9 333.9 775.7 335.2 780.7 336 785.5 337.4 789.4 334.2 792.1 330 795.9 326.8M864 498 866.3 502.4 867.2 507.3 869.1 512 870.9 516.6 871.8 521.6 871.4 526.6M869.1 512 865.4 513.5 861.7 515M946 534 949.3 537.7 950.9 542.5 952.7 547.1 953.4 552.1 955.4 556.7 957.1 561.4 955.9 566.2M953.4 552.1 955.9 555.2 958.4 558.4 960.8 561.5 963.3 564.6M1027 520 1022.3 518.2 1018.7 514.8 1015.2 511.2 1011.2 508.2 1011.1 503.2 1010.1 498.3M488 399 485.6 394.6 483.4 390.1 482.7 385.2 484.6 380.5 486.6 375.9M482.7 385.2 480.1 382.1 477.6 379M736 333 738.4 337.4 742.1 340.7 745.5 344.4 746.8 349.2 745.7 354.1M789 549 784.6 546.6 783 541.8 779.4 538.4 776.5 534.3 775.1 529.5 776 524.6 774.4 519.9 773.3 515 771.3 510.4 769.7 505.7M775.1 529.5 776.9 526 778.8 522.4 780.7 518.9M955 525 959.9 523.9 964.9 524 969.8 524.6 974.5 522.9 979.5 523.2 984.1 525M969.8 524.6 973.3 522.7 976.8 520.8 980.3 518.8M867 549 869.2 553.5 871.4 558 871.6 563 870.9 567.9 870.4 572.9 869.2 577.7 866.1 581.7M870.9 567.9 872.6 571.5 874.3 575.2M800 545 796.9 541.1 793 537.9 788 538.3 783 538M793 537.9 790.9 534.5 788.9 531.1 786.9 527.6 784.8 524.2M878 475 882.8 476.6 887.5 475.1 892.5 474.6 897 472.5M887.5 475.1 891.4 476.4 895.2 477.6 899 478.8 902.8 480" fill="none" stroke="#84408a" stroke-width="0.9" stroke-linecap="round" stroke-linejoin="round"/><path d="M560.6 195h0M562.4 196h0M564.2 198.6h0M566.8 197.8h0M571.3 198.9h0M557.4 204.6h0M562.2 200.1h0M566.5 200.2h0M567.4 201h0M567.5 205.3h0M567.6 206.8h0M567.7 207.2h0M570.1 206.9h0M571 205.8h0M571.1 204.4h0M573.2 203.1h0M573.4 201.6h0M574.6 205.6h0M575.9 202.1h0M580.1 205.2h0M561.4 210.7h0M568.3 210.1h0M568.6 211.2h0M569.9 211.7h0M571.6 213.3h0M572.3 212.9h0M573.1 208.5h0M573.3 209.8h0M573.5 213.4h0M573.5 210.1h0M574.3 213.4h0M574.5 213.8h0M574.6 214.4h0M575.7 213.2h0M575.8 212.7h0M576.1 211.6h0M576.7 215h0M576.7 212.3h0M576.8 215.8h0M577.5 213.9h0M577.5 213.6h0M578.2 210.1h0M578.7 212.6h0M579.4 215.1h0M579.6 212.7h0M579.8 210.7h0M580 215.9h0M580.5 214.6h0M580.7 211.7h0M581.6 210.7h0M586 214.1h0M587.1 215.3h0M573.3 217.5h0M573.4 216.6h0M576.9 218.2h0M578 216.7h0M578.5 217.8h0M579.3 221.5h0M579.5 216.1h0M580.2 217.1h0M580.2 219.5h0M581.1 223.3h0M583.4 217.2h0M583.4 216.1h0M584.6 221.7h0M585.1 220.5h0M586.5 221.5h0M587.7 223.2h0M588.6 222h0M588.8 221.8h0M590.2 219.6h0M591.2 221h0M592.8 221.2h0M593 221.7h0M594.9 222.7h0M598.6 223.8h0M532.3 230.3h0M537.2 230.2h0M551.8 225h0M553 229.7h0M553.2 226.7h0M555.5 226.3h0M556.1 230.6h0M556.1 231.1h0M556.4 230.6h0M556.7 226.7h0M556.9 230.2h0M557 228.4h0M557.1 229h0M557.5 225.8h0M559.5 227.8h0M559.7 227.4h0M560.3 230.6h0M560.6 225.8h0M563.3 229.9h0M564.4 228.9h0M567.6 230.1h0M568.1 230.3h0M568.4 226.4h0M568.9 230.8h0M569.1 229.3h0M580.5 225.5h0M583.2 226.5h0M583.9 229.9h0M584.2 230.9h0M586.1 228.1h0M589.3 229.4h0M590.9 228.1h0M592.7 225.5h0M593.2 229.4h0M593.4 229.7h0M595.6 227.1h0M597.3 228.1h0M598.9 229.5h0M601.4 225.1h0M602.3 229.7h0M606.6 231h0M608.1 227.6h0M610 230.3h0M507.9 238.9h0M508.5 239.4h0M513.7 238.8h0M518.2 237.9h0M519.2 239.3h0M527.8 238.7h0M528 233.7h0M529 239.1h0M529.8 236.3h0M530.7 236.4h0M531.7 234h0M532.6 234.5h0M532.7 234.9h0M532.8 238.1h0M534.9 238.6h0M536 238.9h0M536.3 235.8h0M536.8 239.1h0M537 237.8h0M537.5 238.5h0M539.2 237.7h0M540.3 238.6h0M541.5 238.6h0M541.9 234h0M544.3 235.5h0M546.1 237h0M547.2 238.3h0M551 237h0M552.3 233.7h0M554 233.3h0M554.7 232.9h0M555 234.1h0M555.4 236.5h0M556 232.3h0M556.2 236.6h0M556.6 232.9h0M557 235.7h0M557.8 237h0M557.9 234.1h0M559.2 237.5h0M559.5 237.2h0M559.6 232.4h0M560.8 234.1h0M561.2 235.9h0M561.4 232.7h0M562.6 234.1h0M562.7 235.5h0M564 233.8h0M564.1 232.6h0M564.5 234.4h0M565.3 237h0M565.5 237.3h0M565.9 233.6h0M566 232.9h0M567.3 234.5h0M568.2 234.6h0M568.4 236.9h0M569.8 238.3h0M569.8 236.9h0M570.1 238.7h0M570.5 233.3h0M570.9 235.7h0M571 235.3h0M571.1 237.6h0M572.7 237.5h0M572.8 239.4h0M573.3 236.9h0M574.5 237.6h0M575.8 234.8h0M576.4 236.8h0M576.8 238.3h0M576.9 238h0M577.6 239.6h0M577.8 237.4h0M577.9 239.1h0M577.9 237.5h0M578 236h0M579.1 238.8h0M579.9 239.4h0M586 236.4h0M587.4 239.9h0M590.5 233.1h0M593 238h0M593.4 235.3h0M594 234.7h0M594.9 239.2h0M595.9 237.7h0M596.1 234.9h0M596.5 232.7h0M598.6 236.1h0M599 236.2h0M599.2 237.3h0M599.6 238.6h0M599.6 233.8h0M600.2 235.4h0M602.9 239.7h0M603.4 234.5h0M604.2 238.9h0M605.1 239.8h0M605.2 239h0M607.4 239.2h0M621.3 232.7h0M623.2 235.2h0M624 235.1h0M624.5 233.6h0M624.8 238.3h0M625.8 236.1h0M626.7 236.4h0M631.6 238.7h0M505.6 245.7h0M511.4 246.8h0M512 244.3h0M513.3 243.5h0M513.4 245.9h0M513.4 244.4h0M515.7 247.9h0M516 242.1h0M517.2 242h0M517.6 241.6h0M519.1 246.2h0M520 245.1h0M520.1 243h0M520.4 241h0M524.4 240.4h0M526.8 240.2h0M528.4 242.7h0M530.1 243.7h0M530.8 242.9h0M531.2 241.8h0M531.4 243h0M532.3 240.9h0M533.3 246.1h0M533.7 243h0M534.2 246.5h0M534.2 244.5h0M535 240.3h0M535.4 246.9h0M536 245.9h0M537.3 241.1h0M537.7 243.9h0M538.8 241.5h0M539.4 244.2h0M540.8 245.6h0M541.3 242h0M541.7 245.4h0M542.9 242.2h0M543.2 245.2h0M544.4 240.4h0M544.4 245.9h0M546.8 247.2h0M547.1 244.6h0M547.8 243.9h0M550.1 242.1h0M550.6 243.4h0M553.5 245.6h0M561.4 242.1h0M565.6 243.1h0M566.1 241.3h0M568.9 242.3h0M570.8 245.5h0M571.4 245.8h0M572.4 240.8h0M572.5 242.4h0M573.2 246.3h0M573.2 243.4h0M574.1 244.5h0M575 242.2h0M576.3 247.9h0M576.9 241h0M577 241.7h0M578 244.6h0M578.3 245.7h0M578.9 244h0M584.1 246.2h0M586.9 246.9h0M590.2 245.4h0M598.1 242.5h0M600.8 240.5h0M602.6 240.9h0M602.8 241.8h0M603.1 245.2h0M603.6 246.9h0M603.8 244.1h0M603.8 242h0M604.4 241.5h0M605.5 243.5h0M607 240.1h0M608.1 247.2h0M608.5 245h0M611 248h0M625.5 243.9h0M628.9 240.2h0M631.1 241.7h0M632.2 246.8h0M632.9 246h0M633.5 246.9h0M636.9 246.1h0M510.1 249.8h0M513.5 248.1h0M513.6 251h0M514.1 248.4h0M515.5 248.5h0M515.5 250.8h0M516.9 248.6h0M519.3 249.6h0M520.3 252.2h0M520.4 253.5h0M520.9 251.7h0M521.5 249h0M523.5 255.4h0M525.3 252.2h0M527.5 254.5h0M528.5 252.7h0M531.4 251.5h0M533 253h0M538.8 250h0M538.9 249.2h0M543.3 248.4h0M544.1 248h0M545.6 250.6h0M545.7 255.1h0M545.9 250.6h0M546.3 251.2h0M547.4 250.4h0M549.2 248.2h0M549.5 253.2h0M550.6 253h0M551.4 255.2h0M552.1 254.9h0M552.4 248.7h0M552.8 254.3h0M554.8 249.8h0M554.8 250.4h0M556 249.4h0M557.6 251.9h0M558.3 255.2h0M558.9 255.8h0M560 252.6h0M561.3 255h0M575.4 252.6h0M577.3 254h0M582.2 250.6h0M587 255.8h0M590.6 253.7h0M591.5 248.8h0M593.2 252.1h0M595.9 250.7h0M598.7 252.6h0M603.3 250.1h0M604.7 254.2h0M605.2 248.7h0M607.8 250.7h0M608.4 252.8h0M610.6 248.5h0M612.2 254h0M614.4 248.5h0M617.8 250.7h0M619.9 254.7h0M632.8 250.6h0M636.3 251.9h0M637.4 249.6h0M638.2 249.3h0M638.3 255.3h0M638.8 248.9h0M640.5 251.5h0M643.5 254.4h0M494.7 257.2h0M498.3 262.1h0M499.7 257.6h0M501.8 260.5h0M504.6 262h0M513.4 260.9h0M515 263.7h0M518.1 257.4h0M520 257.9h0M524 256h0M524.3 262.5h0M524.5 259h0M525.5 256.1h0M531 258.7h0M531.3 257.9h0M531.3 257.1h0M532 260h0M532.9 262.2h0M549.5 257.6h0M551.2 257.5h0M552.9 262.8h0M556.1 259.8h0M557.5 258.6h0M557.7 258.5h0M558 261.1h0M560.1 260.1h0M561.4 258.2h0M562.1 263.8h0M563.4 263.1h0M564.2 262.9h0M566.4 256.9h0M567.1 260.5h0M572.1 262.5h0M576.5 263.7h0M580 256.5h0M592.6 257.7h0M594.2 256.4h0M594.7 259.1h0M595.7 257.2h0M597.5 258h0M597.5 261h0M597.9 259.6h0M599.1 256.7h0M599.7 261.9h0M602.1 259h0M602.8 259.6h0M610.1 263.3h0M611.4 261.1h0M611.7 263.6h0M612.1 263h0M612.3 259.6h0M612.9 263.8h0M614 261.9h0M614.3 260.6h0M615.1 260.8h0M616.5 260.8h0M617.7 263.4h0M620.3 262.8h0M623 257.7h0M625.3 258.7h0M628.1 262.3h0M629.5 259.4h0M630.6 261.2h0M633.4 256.8h0M633.7 261h0M636.6 262.6h0M639.9 258.2h0M778.6 263.6h0M496.2 264.4h0M501.7 264.7h0M505 268.4h0M507.1 264.5h0M507.2 270.3h0M509.6 268.4h0M511.2 267.2h0M512 269.9h0M512.6 268.4h0M513.2 264.1h0M513.3 268.2h0M514.5 264.7h0M515.6 265.5h0M516 271.2h0M516.8 265.8h0M516.8 269.6h0M517.3 264.2h0M518.8 270.8h0M520 268.8h0M520.9 271.5h0M521.2 268.6h0M521.5 266.6h0M522.1 270.1h0M523.2 270.4h0M523.5 270h0M524.3 265.8h0M524.9 269.2h0M527.1 271.9h0M527.8 271h0M537 265.4h0M552.3 266.8h0M554.8 270.2h0M555.1 267.7h0M557.3 264.7h0M557.4 270.3h0M557.5 270.6h0M557.6 268.9h0M557.8 267h0M559.3 266.2h0M559.6 267.5h0M560.2 270.8h0M562.7 268.4h0M564.2 269.2h0M566.7 264.1h0M567.7 266h0M569.8 270h0M572.6 269.3h0M575.8 267.4h0M576.1 270.2h0M578.5 268.8h0M579 265.9h0M579.2 267.2h0M581 267.8h0M582.6 268.9h0M583.1 266.8h0M585.4 267.4h0M586.2 270.8h0M587.3 270.7h0M590.4 264h0M590.4 270.8h0M591.1 271.4h0M592.5 264.7h0M604.8 264.3h0M607.9 268.6h0M610.2 269.8h0M610.4 266.9h0M610.5 266.3h0M610.5 265.9h0M611 266.6h0M612.1 271.2h0M612.4 267.9h0M613.4 269.9h0M613.7 265.2h0M613.9 264.9h0M614.1 267.9h0M614.8 266.5h0M614.8 264.7h0M615.1 268.4h0M615.7 266.2h0M616.1 268.2h0M616.4 265.1h0M616.8 270.3h0M620 269.5h0M621.4 271.9h0M621.5 265.5h0M622.2 267.4h0M622.8 268.5h0M623.1 266.7h0M623.6 270.2h0M624.8 270.5h0M626.1 271.6h0M626.2 268.5h0M628.9 271.9h0M638.6 269.6h0M639.2 266.1h0M644.5 270.9h0M647.7 271h0M735.3 267.5h0M735.6 269.7h0M737 271.1h0M737.6 271.4h0M737.7 268.8h0M738.2 268.3h0M757.4 268.5h0M759.7 269.8h0M776.3 264.4h0M777.4 267.5h0M778.4 270.5h0M779.5 268.1h0M779.7 271.3h0M780.2 267.5h0M784.3 271.7h0M784.3 271.8h0M514.2 274.6h0M514.8 278.5h0M517.7 272.8h0M520.8 275.8h0M521.2 272.6h0M522.4 272.4h0M523.9 275.4h0M523.9 272.1h0M524 272.6h0M526.9 273h0M527.2 273.3h0M528.5 277.6h0M529.1 279.1h0M529.1 275h0M529.5 277.3h0M531.4 272.1h0M532.3 276.6h0M532.5 277.9h0M534.9 272.4h0M534.9 278.9h0M540.2 273.2h0M543.9 273.4h0M545.9 275.5h0M550.6 274.3h0M553.3 275.7h0M555.9 277.5h0M556 276.7h0M556.4 272.3h0M558.8 273.7h0M559.3 272.3h0M560.2 274.3h0M561.3 273.4h0M562.8 277.5h0M566.5 276.2h0M567.7 277.3h0M567.7 273.8h0M569.3 275.3h0M569.9 276h0M573.1 277.1h0M574.3 279h0M579.4 273.9h0M581.5 273.6h0M581.8 272.1h0M583.8 279.3h0M584.7 272h0M585.2 273.9h0M589.2 274.3h0M592.1 278.7h0M593 275.1h0M594.9 275h0M596 277.6h0M599 276h0M611.2 273h0M613.7 272.7h0M616.1 273.7h0M616.1 277.4h0M616.5 272.6h0M622.8 272.7h0M625.9 273.8h0M627.6 272.5h0M627.8 278.5h0M627.8 274.4h0M628.6 279.1h0M630.1 274.1h0M631.1 276.6h0M632 276.4h0M632.3 274.8h0M633.2 276h0M633.7 279.7h0M633.7 276.9h0M634.3 279.6h0M634.9 277.3h0M636.3 273.3h0M639.8 274.4h0M640.2 272.5h0M640.9 276.5h0M642 279.3h0M648 274.2h0M649.3 276.1h0M651.2 274.6h0M651.4 277.8h0M654.6 276.1h0M655.1 273.6h0M657.5 279.3h0M658.4 276.4h0M659 275.5h0M660.9 275.9h0M661.5 278.5h0M662.1 279.3h0M665.6 279.6h0M666 278.8h0M734.8 274.6h0M736.7 277.1h0M740.8 274.5h0M742 273h0M745.7 272.9h0M751.9 274.6h0M753.1 272.4h0M753.4 278.4h0M754.5 276.2h0M754.8 276h0M755.5 278.3h0M755.6 276.4h0M756 279.5h0M756.8 272h0M756.9 278.9h0M757.6 277.1h0M757.6 275.1h0M759.2 273.1h0M759.7 275.3h0M759.9 276.6h0M760.3 279.6h0M760.8 273h0M761.1 275.7h0M761.3 276.3h0M762.6 277.1h0M764 279h0M764.8 274.3h0M765.2 279.4h0M765.2 276.6h0M765.7 277.7h0M766.5 280h0M768.6 278.8h0M768.7 277.2h0M769.2 277.9h0M769.5 279.8h0M769.6 278.8h0M770.9 278h0M772.5 275.1h0M776.7 275.3h0M778.1 272.7h0M781.7 273.9h0M782.5 273.4h0M783 277.4h0M786.5 276.7h0M791.2 279h0M515.2 280h0M516.7 282.4h0M518.4 287.3h0M518.5 280.8h0M519.8 283.9h0M521.5 287.5h0M530.4 282.3h0M531.2 286.3h0M532.6 287.2h0M532.8 284.1h0M533.9 281.8h0M534 280.1h0M535.2 282.3h0M537 282.9h0M538 285.1h0M539.3 285.3h0M539.7 286.3h0M541.5 285.1h0M541.6 283.2h0M543.2 283.6h0M545.9 284.1h0M556.6 281.1h0M567 281.6h0M569.1 282.7h0M570.3 281.3h0M570.9 286.3h0M571.9 282.5h0M573.6 282.6h0M574.2 280.7h0M574.3 281.2h0M574.6 282.1h0M576 286.5h0M577.4 285.9h0M577.4 283h0M577.8 285.1h0M578.2 286.1h0M579.3 282.5h0M579.8 286.2h0M580.9 286.9h0M592.6 281.5h0M597.9 281.4h0M600.3 280.4h0M600.7 283.3h0M600.9 287.5h0M602.3 283h0M604.1 282.7h0M604.3 287.7h0M604.7 281.8h0M605.1 285h0M606.7 287.1h0M608.8 284.1h0M610.8 285.3h0M612.1 286.6h0M613.8 285.9h0M622.9 285.9h0M626.8 284.6h0M628.3 286.7h0M630.9 280.4h0M632.2 280.5h0M634 282.5h0M634.6 283.2h0M635.1 285.8h0M635.7 283.8h0M636.1 280.1h0M636.5 286.6h0M636.7 282.3h0M637.1 286h0M638.9 280.6h0M640.5 281.9h0M642.2 287h0M642.2 286.5h0M642.5 286.5h0M646.4 287.4h0M649 287.6h0M649.1 286.9h0M653.7 288h0M655 281.2h0M656.5 287.7h0M656.8 284.2h0M661.1 286.2h0M662.9 286.2h0M664 280.4h0M664.5 282.7h0M668.1 280.1h0M668.3 286.1h0M668.5 286h0M668.9 281.5h0M669.6 285.1h0M669.8 283.4h0M681.4 280.8h0M681.9 281.2h0M683.7 284.8h0M730.5 285h0M732.5 285.9h0M733.9 286h0M736.9 287h0M738 284.3h0M740.4 286.4h0M756.2 281.1h0M757.4 282.7h0M759.1 281.3h0M759.4 280.7h0M759.5 282.2h0M761.6 285.1h0M762.3 284.9h0M762.4 282h0M763.5 285.6h0M765.4 281.5h0M765.6 281.8h0M765.8 286h0M766.5 285.4h0M766.7 285.5h0M767.7 282.6h0M770.1 285.4h0M771.5 284.9h0M772 287.9h0M772 285.2h0M774 280h0M775.2 287.4h0M777.8 282.9h0M779.2 282.8h0M779.4 282.7h0M780.7 281.5h0M780.8 287.6h0M781.6 285.7h0M781.7 285.6h0M785.6 286.2h0M787.5 287.3h0M816.4 286.7h0M512.6 288.2h0M515.3 292h0M520.2 292.8h0M523.3 289.9h0M528.6 294.9h0M538.2 289.9h0M539.1 288.6h0M539.7 290.6h0M539.8 289.5h0M542 288.4h0M542.8 290.8h0M545.7 291.9h0M546.4 294.4h0M547.1 295.3h0M547.8 292.4h0M549 295.5h0M549.9 293h0M552.6 295.1h0M573.3 289.8h0M576 295.4h0M577.1 289.8h0M578.6 289.4h0M579.3 291.5h0M579.6 288.7h0M580.4 291.3h0M582 290.3h0M582.7 290.2h0M584.2 291.4h0M584.4 288h0M584.9 293.7h0M585.2 291.3h0M586.8 293h0M587.6 292.7h0M603.3 290.1h0M604.2 295.3h0M607.4 288.5h0M610.3 292.1h0M610.7 289.1h0M611.2 293.9h0M611.9 289.8h0M613.7 294.9h0M613.9 291.6h0M615.6 293.5h0M616.5 292h0M617.1 295.3h0M618.9 294.4h0M623 295.8h0M627.8 290.1h0M634.7 292.1h0M638.2 295.1h0M638.3 293.4h0M641 288.5h0M641.7 295.1h0M642.6 293.9h0M642.6 292.5h0M643.5 294.8h0M643.9 291.4h0M644.2 289.5h0M644.8 291h0M645.8 294h0M645.9 294.9h0M646.4 294.9h0M646.7 294.6h0M662.8 289.3h0M663.6 292.2h0M668 290.3h0M668.6 288.6h0M669 293.3h0M669 294.5h0M671.4 289.9h0M672.4 295.4h0M675.2 293.6h0M725.2 293.9h0M736.7 289.2h0M740.1 291.5h0M765.3 288.7h0M766.1 292.3h0M766.3 290.1h0M766.7 288.9h0M768 295.5h0M768.2 293.6h0M768.2 295.2h0M769.5 289h0M769.8 289.4h0M771.2 289.1h0M771.9 293.8h0M772.2 291.9h0M774.2 289.4h0M774.8 290.8h0M775.4 295.7h0M775.5 291.9h0M775.6 291.5h0M777.4 294.9h0M777.7 293.4h0M778.2 294.4h0M778.9 292.1h0M779.3 295h0M779.4 295.5h0M780.2 290.2h0M781.4 289.4h0M781.7 289.1h0M782.3 294.5h0M782.4 295.1h0M783.3 295.3h0M783.8 293.2h0M784.4 288h0M784.8 288.9h0M784.9 289.7h0M785.1 289.9h0M785.8 292.6h0M786.3 293.5h0M786.6 290.5h0M786.9 288.7h0M787 290.3h0M787.2 293.2h0M787.8 291.2h0M788.7 291.4h0M789.1 295.3h0M789.5 293.6h0M790.6 288.1h0M793.7 291.7h0M817.7 289.7h0M820.9 290.3h0M823.1 289.5h0M826 294.4h0M826.1 294h0M828 293.6h0M828.1 296h0M828.1 291.1h0M828.1 292.4h0M829.8 295.3h0M830.5 295.4h0M830.6 294.9h0M830.9 295.7h0M831.4 295.4h0M833.3 292.1h0M834.7 294.8h0M835.3 290.5h0M835.4 293.1h0M836.4 292.3h0M837 294.7h0M837.2 291.4h0M838 291.5h0M838.8 295.8h0M839.9 293h0M840.6 294.9h0M843.3 295.8h0M520.8 296.2h0M523.5 298.9h0M527 301.7h0M545 298h0M546.3 297.6h0M547.8 299.5h0M548 297.4h0M549.9 299h0M550.3 297.6h0M550.8 296.9h0M550.9 297.3h0M551 299.8h0M551.2 297.2h0M551.5 301.1h0M551.7 299h0M552.5 301.7h0M552.8 298.2h0M553.5 297.2h0M555.4 301.7h0M555.4 301.1h0M556.9 303.6h0M559.4 302.5h0M559.6 299.2h0M560.1 301.7h0M562.3 302.4h0M579.7 300.5h0M582 296.6h0M582.1 299.9h0M584 302.2h0M584.2 298.9h0M584.6 304h0M585.9 300.9h0M586.8 296.1h0M590.3 298.4h0M592.6 297.3h0M592.8 299.9h0M594.3 297.3h0M596.1 301.1h0M596.4 302.4h0M596.5 301.1h0M597 300.7h0M597.9 301.9h0M599.4 299.4h0M600 303.9h0M600.7 297h0M601.3 300.6h0M602.3 296.9h0M604.2 297.2h0M605.4 296.6h0M609.1 301.2h0M612.2 301.2h0M612.9 302.1h0M614.6 299.7h0M616 300.4h0M617.1 301.2h0M618.6 298.2h0M618.7 301h0M619.8 297.4h0M619.9 302.1h0M622.6 300.6h0M643.3 297.8h0M644.8 297.2h0M645.3 298.1h0M647.3 302.6h0M647.9 300.6h0M648.3 296.9h0M649.6 297.4h0M650.9 303.9h0M651.6 296.4h0M652 302.3h0M654.2 302.8h0M656.1 297.7h0M656.6 299.6h0M661.1 300.1h0M661.8 300.7h0M664.3 301.2h0M666.7 300.6h0M667.9 299.5h0M675.8 300.2h0M676.8 300.2h0M676.9 302.6h0M677.8 302.9h0M679.2 300.4h0M681.8 300.7h0M682.9 303.4h0M684 298.2h0M685 301.4h0M772.9 299.3h0M776.7 299.3h0M777.7 297.8h0M777.9 300h0M778.8 298.8h0M779 296.6h0M779.3 303.3h0M779.8 296.7h0M780.1 300.6h0M781.6 298.3h0M782.4 298.2h0M784.5 296.4h0M785.3 300.1h0M785.8 298.6h0M789.3 300.3h0M790 296.3h0M791.3 299.5h0M792.8 296.3h0M792.9 298h0M794 299.8h0M794.8 302.5h0M796 299.2h0M796.5 296.4h0M796.9 300.1h0M798 301.6h0M798.8 302.8h0M800.1 296.6h0M800.3 303h0M800.4 299.9h0M801.6 303.9h0M814.3 297.6h0M826.3 296.7h0M826.8 299.7h0M828.3 298.8h0M828.5 296.2h0M829.4 302.6h0M829.7 298.6h0M830.2 299.8h0M830.5 296.1h0M830.7 302.3h0M831 296.4h0M831 299.9h0M831.5 300.7h0M831.9 296.8h0M832.4 296.8h0M833.2 298.3h0M833.4 299.7h0M833.4 297.9h0M833.6 298.5h0M833.7 296.8h0M834 303h0M834.4 297.6h0M834.7 299.9h0M835 296.1h0M836 298.8h0M836.5 297h0M836.5 300.2h0M836.8 296.9h0M836.8 302.5h0M836.8 303.5h0M836.9 300.7h0M837 300h0M837 300.7h0M837.3 299.9h0M838.3 297.3h0M838.9 296.4h0M839.2 302.6h0M839.7 301.8h0M841.5 299.3h0M841.6 299.1h0M845.3 301.7h0M507.1 307.3h0M510.4 305h0M510.9 309.3h0M514.1 310h0M517.3 309.5h0M517.4 311.2h0M519.4 308.3h0M521.4 311.1h0M523.5 311.6h0M524.2 311.2h0M525.1 311.5h0M547.1 311.8h0M550.9 304.1h0M551.9 304.9h0M554.1 305.8h0M557.5 309.6h0M565.8 308.9h0M580.9 310.6h0M582.6 307.5h0M582.6 311.8h0M584.3 310.5h0M586.5 307.7h0M594.8 310.7h0M596.2 305.1h0M599.2 305.7h0M599.8 306.7h0M600.5 306.7h0M600.6 309.2h0M602.3 308.5h0M603.3 307.1h0M604.1 311h0M604.6 308.6h0M605.3 304.7h0M605.4 311h0M608.9 306.1h0M613.2 308.3h0M613.8 310.8h0M618.5 309.1h0M619.3 304.5h0M619.8 304.4h0M623.1 305.5h0M623.1 308.3h0M624.5 308.2h0M626.9 309.4h0M627.4 307.4h0M631.6 311.1h0M639.1 307.9h0M640.3 310.4h0M650.2 305.2h0M652.6 304.4h0M653.9 304.7h0M654 304.3h0M656.4 308.7h0M656.5 305.1h0M656.8 307.1h0M656.8 307.9h0M657.6 309.7h0M659.1 310.5h0M678.9 305.7h0M689.1 306.9h0M690.8 308.7h0M721.5 311.1h0M764.8 311.1h0M766.4 306.9h0M766.6 309.6h0M767.9 310.7h0M769.1 309.3h0M771.9 310.4h0M773.5 311.6h0M775.2 310.6h0M779.7 309.8h0M782.1 305.3h0M784.3 305.1h0M787.5 310h0M787.9 309.3h0M790.2 311.6h0M797 304.5h0M798.3 305.2h0M798.8 306.2h0M798.9 310h0M800.5 306.2h0M802 305h0M802.1 308.5h0M802.6 311.6h0M803.8 311h0M805.4 307.5h0M805.4 309.7h0M805.5 304.7h0M805.6 307.4h0M805.7 307.5h0M807.1 306.7h0M807.2 308.8h0M808 309.6h0M808.6 305.6h0M810.4 311.3h0M810.9 306.8h0M812.1 311.2h0M813.8 309.4h0M831.5 304.1h0M832.5 310.2h0M832.8 306.7h0M835.1 307.8h0M835.4 310h0M835.5 310.2h0M835.8 305.8h0M836 304.9h0M837 308.2h0M839.5 306.4h0M839.8 304.8h0M842.3 305.9h0M516.3 317.5h0M518.3 313.9h0M520.9 315.1h0M521 319.5h0M521.1 316.5h0M522 314.1h0M524.6 319h0M525.2 318.3h0M527.5 312.5h0M528.5 316.6h0M532.8 315.8h0M536.5 318h0M539 314.4h0M545.8 316.1h0M547.7 319.4h0M550.3 318.1h0M550.3 313.3h0M551.2 318.8h0M554.4 319.8h0M564.7 317.1h0M580.3 314.6h0M580.6 319.4h0M594.5 318.5h0M596.3 319.5h0M597.7 319.5h0M598.2 319.9h0M598.8 312.6h0M601.6 315.7h0M603 313.8h0M606 314.3h0M606.3 319.6h0M609.6 314.6h0M611.3 318.4h0M613.3 313.2h0M613.6 316.3h0M616.1 313h0M617.2 317.3h0M619.5 312.1h0M619.9 314.4h0M623.2 317.7h0M631 313.3h0M631.1 313.6h0M632.5 316.8h0M632.8 316.3h0M634.4 312.7h0M636.1 319.2h0M636.5 317.7h0M636.9 314.4h0M637.3 318.7h0M638 315.8h0M639 318h0M639 319.8h0M639.2 318.7h0M640.5 317.8h0M643.6 319.2h0M644.1 315.6h0M646.8 318.4h0M661.5 313.7h0M661.6 317.8h0M661.6 315.8h0M662.3 313.9h0M663.8 316h0M664.2 317.4h0M664.4 319.7h0M664.5 313.9h0M665.2 315.1h0M667.6 316.7h0M668.2 316.1h0M668.6 319.6h0M668.8 318h0M669 313.1h0M670.6 313.7h0M672.8 316.6h0M675.9 319.7h0M710.6 316.2h0M715.3 317.3h0M741.3 312.6h0M743.8 313.9h0M746.3 318h0M749.9 318.2h0M764.2 313.3h0M766.1 316.3h0M767.1 313.1h0M767.9 317.5h0M768.3 318h0M768.5 318.2h0M768.6 316h0M769 318.9h0M769.4 314.2h0M770.2 315.7h0M770.4 315.9h0M770.4 317.5h0M770.6 317.4h0M771.2 317.4h0M771.3 313.1h0M771.3 316h0M772.6 316.5h0M773 313.7h0M773.5 314.4h0M773.9 319.3h0M774.4 318.6h0M774.5 316.6h0M774.8 313.3h0M774.9 319.5h0M774.9 312.8h0M775 317.2h0M775.3 315.2h0M775.4 313.8h0M776.1 313.9h0M776.1 312.9h0M776.1 314.6h0M776.4 317.8h0M776.9 314.4h0M777.4 317.6h0M777.7 314.3h0M777.9 319.6h0M778.2 313.5h0M779.1 316.8h0M780 319.4h0M781.4 317.5h0M782 319.3h0M782.9 313.3h0M783.9 315.3h0M784.5 316.2h0M788.9 318.9h0M796 319.8h0M797.9 315.2h0M798.5 317h0M800.5 313.7h0M801.1 318.4h0M801.2 313.6h0M803.9 318.5h0M803.9 318.1h0M805.4 317h0M806.1 314.1h0M806.9 315.6h0M808 312.9h0M808.5 312.2h0M809 319.3h0M809.1 320h0M809.5 317.4h0M811.5 319.8h0M811.9 312.1h0M814.5 313.6h0M816.5 312.2h0M816.9 312.4h0M817.9 316.6h0M821.1 316.8h0M825.9 316.8h0M829.9 319.2h0M832 318.6h0M525.5 322.1h0M546.3 321.3h0M549.2 324h0M552.1 321h0M553.1 322.9h0M555 321.1h0M559.6 322.9h0M564.3 321.7h0M564.6 325.3h0M565.9 322.9h0M566 323.1h0M566.9 321.1h0M567.7 327.1h0M568.7 322h0M569.1 322.2h0M569.9 322.8h0M570.4 327.3h0M572 321h0M573.9 322.4h0M574.1 324.4h0M577.7 325.6h0M578.3 326.5h0M578.6 326.5h0M579.5 324.8h0M584 321.3h0M600.4 322.5h0M601.4 321.9h0M601.7 323.8h0M604.9 325.9h0M605.8 323.6h0M606.5 320.9h0M607.1 324.2h0M608.1 322.2h0M609.5 325.1h0M611.5 325.6h0M619.3 321.8h0M633.5 320.4h0M637.7 322.7h0M638.3 321.1h0M638.8 325.9h0M639.8 324h0M641 324.1h0M641.3 324.6h0M642.3 322.4h0M642.4 322.4h0M643.2 323.9h0M643.3 322.2h0M643.3 323.6h0M643.5 322.6h0M643.5 325.8h0M643.6 323h0M645.2 324.3h0M645.6 321.2h0M645.7 323.2h0M645.9 325.4h0M646.1 325.2h0M646.7 326.5h0M646.8 326h0M647.1 325.4h0M647.1 327.9h0M647.8 322.3h0M648 328h0M650 323.3h0M651.5 326h0M652.7 325.1h0M656.3 326.3h0M665.8 323.3h0M668.8 327.6h0M670.4 324h0M671.4 327.8h0M675.2 327.4h0M675.4 327.9h0M676 327.1h0M676.8 327.1h0M678 320.1h0M718.7 321.2h0M756.5 324.2h0M765.2 323.3h0M769.4 320.9h0M769.8 326.7h0M771.2 326.8h0M771.5 321h0M772.6 321.4h0M774 320.5h0M775.2 322.8h0M777.7 327.6h0M778.1 324.3h0M781 321.8h0M781.5 325.5h0M784.3 325.6h0M784.6 323.5h0M785.2 321.6h0M785.3 327.5h0M786.8 325.9h0M787.7 327h0M788.3 324.5h0M788.5 321.1h0M792 325.4h0M795.5 326.5h0M796.3 326.2h0M798.1 320.7h0M799.4 327.5h0M800.2 325.5h0M800.7 320.2h0M801.6 321h0M802.5 323.9h0M803.9 325.7h0M804.7 321.5h0M805.3 326.6h0M805.6 323.2h0M807.3 324.9h0M808.3 320.2h0M811.3 327h0M814 325.6h0M816.5 326.1h0M824.3 323.5h0M824.4 327.3h0M824.7 322.1h0M825.7 327.2h0M825.8 325.2h0M825.8 323.9h0M826 323.2h0M827.4 326h0M827.4 327.6h0M827.5 326.4h0M828.1 324h0M828.3 323.5h0M828.7 327.4h0M829.1 327.5h0M829.2 322.2h0M829.7 325.8h0M830.6 326.3h0M830.8 324.3h0M831.9 324h0M832 322.7h0M832 325.2h0M832.3 325.7h0M512.3 333.5h0M527.1 335.4h0M527.2 328.7h0M530.6 328.6h0M547.3 333.9h0M565 329.3h0M567.8 333.8h0M570 335.4h0M570 330.4h0M570.3 334.4h0M570.9 328.8h0M571 329h0M572.1 332.8h0M572.2 334.9h0M572.4 333.6h0M572.5 330h0M572.6 335.3h0M573.5 332.6h0M573.9 334.6h0M574.1 331.1h0M574.3 331.5h0M574.5 333h0M575.2 333.6h0M575.5 328.1h0M576.5 334.1h0M577.5 334.2h0M577.7 333.4h0M578.4 333.9h0M580 330.5h0M583.2 332.1h0M584.4 330.5h0M587.1 330.3h0M587.5 334.2h0M604.9 329.3h0M605.1 328.3h0M609.1 329.2h0M609.9 328.5h0M612.2 332.3h0M612.6 335h0M613 332.1h0M616.3 333h0M620.8 334.3h0M636.9 331.7h0M640.9 331h0M643.8 328.5h0M644.2 331.3h0M647.4 329.7h0M647.9 333.5h0M650.5 329h0M650.9 331.1h0M653.7 335.8h0M653.7 330.9h0M657.6 331.4h0M657.9 333.1h0M658.7 334.1h0M659.4 332.5h0M660.2 332.9h0M664.2 335.1h0M664.4 334.8h0M665.2 332.9h0M670.8 334.8h0M674.8 329h0M674.9 335.3h0M676.1 332.3h0M676.3 331.4h0M677.5 330.8h0M678.8 333.1h0M679.4 330.3h0M679.4 335.8h0M679.4 334.1h0M684.7 333.1h0M685.5 333.3h0M710 329.5h0M713.9 333.3h0M774.1 328.1h0M776.3 333.2h0M776.7 328.5h0M777.4 332.7h0M778.6 328.4h0M779.5 334.4h0M779.6 333.4h0M781.7 335.3h0M787.3 328.6h0M788 328.2h0M788.6 330.8h0M788.9 330.1h0M790.5 328.1h0M791.5 334.7h0M791.6 334.2h0M791.7 332.2h0M791.9 332.7h0M792.8 335.5h0M793 335.9h0M793.5 328.1h0M793.9 333.6h0M794.8 330.2h0M797.9 334.3h0M798.6 330.7h0M798.6 329.9h0M801 332.2h0M803.5 328.7h0M808.6 330.4h0M811.6 329.5h0M812.8 331.2h0M815.9 332.4h0M818.5 330h0M818.6 334.7h0M818.9 334.7h0M820.8 335.1h0M821.8 333.4h0M823.2 331.2h0M824.7 330h0M825.3 333.7h0M826.6 331.1h0M826.9 333.2h0M828.5 334.1h0M829.2 331.6h0M829.3 329.6h0M829.9 330.6h0M831.4 331.9h0M832 331.2h0M832.2 333.3h0M832.3 329.1h0M833.1 329.2h0M833.2 329.9h0M833.3 329.1h0M500.6 342h0M501.8 343.6h0M502.4 343.9h0M503.2 336.8h0M506.6 340.3h0M508.4 342.4h0M508.9 343.8h0M514.7 337.4h0M518.8 339.5h0M523.9 339.5h0M529.9 338.3h0M536.1 342.6h0M544.5 341.2h0M545.3 339.4h0M548 339.6h0M548.5 341.9h0M548.9 338.7h0M550.3 340.5h0M552.9 343.5h0M572.8 338.7h0M574.9 337.3h0M576.2 337.7h0M577.1 337.5h0M578.3 342.3h0M578.4 338.6h0M579.9 338h0M580 338.8h0M580.9 336.6h0M581.3 342.4h0M581.7 337h0M615.2 336.3h0M617.1 338.4h0M621.3 338.3h0M622.8 336.7h0M624.4 336.1h0M627.1 343h0M627.6 337.9h0M629.8 343.1h0M638.9 336.9h0M641 336.9h0M645.8 340.2h0M650.7 336.9h0M653.4 339.2h0M655.6 343.5h0M661.3 336.7h0M665.2 339.4h0M665.5 343.2h0M669 337.1h0M669.7 340h0M670.8 342.4h0M675.1 338.5h0M680 341.8h0M682.1 343.4h0M682.3 338.7h0M682.6 337h0M684.7 340h0M714.5 343.3h0M752.3 342.6h0M757.3 342.1h0M757.8 341.7h0M760.6 343.7h0M766.3 341.3h0M767.8 343.1h0M781.2 338.9h0M781.5 343.7h0M783.2 341h0M783.9 340.3h0M784.2 342h0M784.4 337h0M785.5 341.2h0M785.6 342.5h0M785.9 341.5h0M787.9 339.7h0M788.1 343.8h0M791.6 340.5h0M792.6 342.5h0M793.7 340.1h0M795 339.4h0M795.2 340.3h0M797.4 337h0M798.1 337.5h0M800.3 339.8h0M803.1 338.1h0M806.1 341.5h0M810.2 342.3h0M828.8 336h0M829.6 337h0M455.9 351.9h0M496.1 348.7h0M498.6 351.2h0M504.7 347.8h0M506.5 348.4h0M509.2 345.5h0M511.1 345.6h0M512.6 349.2h0M513.6 350.5h0M531.3 349.9h0M533.6 351.4h0M534.4 345.1h0M537.1 344.6h0M537.6 347h0M541.8 349.6h0M541.9 346.8h0M542.8 349h0M543.6 346.1h0M545.4 344.7h0M546.7 351.9h0M548.3 344.3h0M549.4 348.8h0M550.6 347.7h0M551.5 349.6h0M552.8 346.2h0M553.3 352h0M554.2 347.6h0M554.8 345.5h0M557.6 348.8h0M557.8 350.5h0M577.6 349.1h0M578.1 350.1h0M579 347.1h0M580.8 349h0M581 351.5h0M581 349h0M581.1 344h0M582.2 349.3h0M583.1 346.4h0M595.6 344.5h0M596.4 346.6h0M599.3 345h0M599.9 347.9h0M602.7 348h0M603.5 350.1h0M604.6 350.4h0M604.7 348.2h0M605.3 350.8h0M605.4 346.6h0M606.3 351.3h0M606.5 346.5h0M609.5 349.4h0M611.6 349.6h0M612.7 345.9h0M613.4 344.8h0M617.9 349.2h0M627.5 346.7h0M630.6 346.8h0M630.9 345.6h0M631 346h0M631.7 347.7h0M632.5 350.4h0M632.8 346.2h0M635.9 349.3h0M640.1 347.8h0M640.4 346.7h0M642.1 351.3h0M644.3 350.5h0M646.6 350.9h0M656 351.9h0M657 347.7h0M657.7 349.1h0M659.9 351.8h0M668.1 348.5h0M669.8 345.4h0M670.3 345.3h0M671.7 349.5h0M673.8 346.8h0M676.7 350.6h0M680.4 344.3h0M682.9 344.5h0M683.3 350.6h0M685 345.5h0M685.9 348.1h0M687 344.1h0M687.7 345.5h0M688.1 350.3h0M688.2 351.2h0M689.9 349.3h0M693.5 346.1h0M700.3 349.5h0M702.5 351.8h0M702.6 349.3h0M709.6 351.5h0M714.5 344.9h0M714.6 348.2h0M716.3 349.2h0M718.1 351.8h0M719.8 346.4h0M754.7 349.8h0M755.8 346.9h0M758.3 350.3h0M759.1 351.2h0M759.2 351.6h0M759.6 344.7h0M762.2 344.1h0M764.6 346.2h0M764.8 349.7h0M765.3 349.4h0M765.5 348.4h0M766 348.8h0M767.9 347.8h0M769.3 350.2h0M773.7 349.7h0M781.5 344.4h0M783.7 344.7h0M788.1 346.8h0M788.4 347h0M788.6 345.2h0M789.1 348.3h0M789.2 349.8h0M789.3 345.3h0M789.8 345.8h0M790.2 344.7h0M790.3 345.8h0M790.6 346.3h0M790.6 346.5h0M792 346.8h0M792.7 349.9h0M793 349.9h0M793 349.4h0M793 347.1h0M793.1 345.5h0M794.9 347.9h0M794.9 349.4h0M795 347.8h0M795.1 350.2h0M795.4 345.8h0M796 350.5h0M796.6 344.2h0M797.6 347.4h0M797.7 351.6h0M798 351.7h0M798.2 349.6h0M798.7 349.5h0M798.7 345.6h0M798.8 350.9h0M798.8 350.9h0M799 347.9h0M799 345.5h0M799.1 345h0M799.6 346.9h0M799.6 344.9h0M799.6 349.7h0M800.4 348.3h0M800.6 348.9h0M801.3 348.2h0M802.3 349h0M803.1 349.5h0M803.6 351h0M803.8 351.4h0M810.6 348.1h0M813.6 345.3h0M817.6 346.4h0M819.3 348.1h0M819.7 348.7h0M820 345.2h0M821.6 350h0M822.8 349.4h0M822.8 350.4h0M822.9 348.7h0M822.9 349.6h0M823.3 350.9h0M824.9 351.8h0M825.8 348.4h0M827 351.9h0M828 351.5h0M828.4 350.2h0M828.6 346.5h0M830.6 348.5h0M424.9 359.9h0M426.4 359.4h0M448 356.1h0M448.3 355.1h0M449.2 358.3h0M449.5 356.6h0M457.1 352.3h0M470 354.9h0M471.8 356.7h0M482.6 358.4h0M498.5 353.2h0M501.5 357.9h0M502 359.6h0M506.4 353.1h0M507.7 355.7h0M508.3 357.4h0M518.4 352.7h0M520.9 355.8h0M537.6 354.2h0M540.5 356h0M541.5 352.2h0M545.2 353h0M550.1 357h0M551.2 360h0M557 358.6h0M559.4 354.7h0M564.6 356.3h0M566.8 359.1h0M576.5 359.3h0M579.7 353.9h0M581.2 356.6h0M583.4 352.2h0M584.4 356.9h0M586.3 356.2h0M586.4 354.9h0M589.6 352.9h0M591.2 355.9h0M593.1 353h0M593.3 359h0M600.3 354h0M600.5 353.2h0M601.5 352.6h0M602.2 352.6h0M603.5 353.7h0M605.8 356.3h0M607.4 358h0M612.4 353.7h0M614.5 357.9h0M633.2 352.8h0M637.4 354.5h0M640.3 356.3h0M642.8 355.8h0M646 354.7h0M648.9 358.2h0M649.5 359.5h0M651.2 356.8h0M651.5 353.6h0M652.4 359.5h0M655.3 358.3h0M660.3 353.8h0M662 357.3h0M662.4 355.1h0M666.6 358.2h0M669.1 354.4h0M684.7 355h0M686.6 359.1h0M688.4 353.6h0M692.2 358.9h0M693.1 355.2h0M696.9 353.7h0M701 358.6h0M705 353.8h0M705.4 356.6h0M708.8 356.3h0M709.8 355.5h0M710 359.9h0M711.5 353.8h0M711.6 359h0M716.2 353.4h0M716.4 353.7h0M717.1 357.4h0M720.6 352.1h0M721.1 357.4h0M721.9 358.3h0M723.5 353.7h0M724.8 356.9h0M725.3 357.5h0M725.7 354.1h0M726 359.3h0M727.4 357.5h0M731.5 355.3h0M734.4 355.6h0M753.5 357.8h0M755.4 357.6h0M756.3 352.8h0M758.9 358.3h0M762.5 352.6h0M763.6 355.7h0M765 358.8h0M765.3 359h0M766.1 359.9h0M767.9 352.3h0M771.6 355.7h0M772.9 357.3h0M773.7 355.9h0M778 357.9h0M789.8 352.7h0M791.4 353.4h0M792.7 353.8h0M795.6 352.2h0M797.9 353.9h0M798.2 356.9h0M798.3 354.4h0M800.3 352.4h0M800.7 352.3h0M801.5 352h0M802.1 357.3h0M803.2 353.7h0M803.3 355.9h0M805.6 353.2h0M805.9 355.6h0M806.5 359.6h0M806.7 354.4h0M807.5 355.2h0M808.1 352.5h0M808.1 354.7h0M809.2 355.9h0M809.9 352h0M809.9 357.3h0M810.6 356.8h0M810.8 359.9h0M811.1 357.4h0M812.5 355.6h0M813 359.9h0M815.4 359.1h0M815.9 356.9h0M816.4 356.1h0M819.7 357.6h0M824.6 359.1h0M828.5 356h0M829.3 354.8h0M830.1 353.2h0M831.2 356.3h0M832.6 356.7h0M834.2 358.8h0M412.2 368h0M413.6 361.2h0M415.7 364.2h0M421.2 360.7h0M421.9 363.4h0M424.4 362.5h0M424.6 362.2h0M425.9 365.2h0M427.6 366.9h0M428.9 364.8h0M430.8 362.1h0M451.3 360.8h0M455.1 365.4h0M460 366.2h0M470.7 360.4h0M475.9 361.3h0M480.2 363.1h0M483.8 364.8h0M506.1 363.1h0M509.9 361.7h0M510.6 363.2h0M512 365.3h0M513.6 365.9h0M513.9 367.9h0M516.6 364.1h0M520.1 363.5h0M528.9 366.1h0M550.6 360.1h0M551.2 363.3h0M551.2 364h0M552 366.1h0M553.7 365.2h0M557.2 361.7h0M557.2 367.3h0M559.2 364.9h0M579.4 362.5h0M581.5 364.4h0M581.9 361.7h0M586.8 363.1h0M589 360.9h0M591.5 361.6h0M596 367.3h0M606 361.6h0M606.6 361h0M608.1 361.3h0M609.6 362.4h0M616.7 361.7h0M617.9 361.5h0M620.1 362.6h0M644 365.1h0M646.7 366.4h0M646.8 364.6h0M647.6 366h0M647.8 361.3h0M650.3 364h0M650.4 367.3h0M651.3 367.8h0M652 363.8h0M666.5 361.7h0M670.3 362.9h0M674.1 362.3h0M674.5 365.6h0M674.5 366h0M704.8 362.1h0M712.6 362.2h0M715.1 366.2h0M716.4 366.3h0M717.2 367.8h0M721.6 360.3h0M724.9 361.6h0M725.7 360.6h0M726.1 361.4h0M726.2 363.5h0M727 364.9h0M728.5 366.6h0M728.9 363.4h0M729.2 365.1h0M729.3 361.6h0M729.6 367.4h0M730.1 361.4h0M731.1 364.4h0M731.2 365.9h0M733 365.8h0M733.2 363.5h0M733.8 366.3h0M734.1 365.1h0M734.6 367h0M734.9 367.4h0M735 367.5h0M735.1 367.5h0M735.6 366.9h0M736.9 367.2h0M737.4 367h0M755.6 361.2h0M755.9 360.3h0M756.4 364.2h0M758.5 366h0M758.8 362.8h0M758.8 362.9h0M759.1 366h0M759.4 364.2h0M759.5 360.6h0M760.4 366.6h0M761.1 366.2h0M761.4 367.8h0M761.4 367.4h0M762 364.1h0M762.1 363.8h0M762.5 364.7h0M762.8 360.7h0M763.1 361.1h0M763.4 360.9h0M763.7 364.2h0M763.7 367.9h0M764.8 365.5h0M765.4 367.4h0M766.9 361.9h0M768 361.1h0M768.3 362.4h0M768.6 366.1h0M768.6 363.3h0M768.9 364.4h0M769.9 363.1h0M771.2 363.8h0M771.4 363.2h0M772.5 365.1h0M772.6 365.9h0M772.7 366.2h0M775 367.1h0M790.7 366.8h0M804.4 364.6h0M804.9 366.4h0M805.8 362.8h0M807.5 366.2h0M807.8 360.8h0M808.2 366h0M808.4 361.8h0M808.6 360.3h0M809.6 360.7h0M809.8 367.2h0M810.7 365.6h0M810.8 362.9h0M811.1 363.6h0M811.3 365.9h0M812.7 367.9h0M813.1 362h0M813.3 360.4h0M813.4 367.5h0M813.5 364.3h0M815.3 365.2h0M815.8 362.7h0M818.6 366.2h0M821.6 365.9h0M824.2 363.8h0M825 367.1h0M827.3 360.6h0M829 367.8h0M833.9 361.2h0M835.6 364.1h0M966.7 367.8h0M406.5 375.3h0M411.6 372.8h0M414.7 370.2h0M415.6 370.9h0M415.8 373.3h0M419.2 375.4h0M425.6 372.1h0M426.5 374h0M427 374.1h0M429 374.4h0M431.7 375.4h0M433.4 368.8h0M435.2 372.8h0M439.2 374.1h0M457.2 368.9h0M457.3 369h0M461.2 369.3h0M463.1 372.8h0M477.5 370h0M486.1 370.1h0M488.2 371.8h0M494.9 374.3h0M499.7 373.1h0M502 375.8h0M517 368h0M517.6 370.6h0M518.3 370.7h0M521.3 372.9h0M522.7 373.1h0M524.6 370.8h0M526.4 369h0M526.7 374.4h0M527.1 372.1h0M528.2 370.9h0M528.7 372.7h0M529.5 368h0M529.8 371h0M531 368.7h0M532.1 373.9h0M533.1 375.4h0M535.2 371.4h0M536 375.5h0M541.5 374.9h0M547.2 370.6h0M549.3 374.5h0M554.6 368.5h0M554.9 370.6h0M556.9 375.8h0M557.4 373.8h0M563.4 372.1h0M576.4 373.5h0M577.4 368.6h0M578.2 375.8h0M578.8 375.6h0M580 369.2h0M580.9 368.4h0M584.8 372.4h0M586.1 374.4h0M586.9 371.2h0M598.5 372.1h0M600.3 372.6h0M601.3 374.3h0M601.8 374.9h0M629.1 372.6h0M631.4 372.1h0M636.6 373.4h0M648.9 369.2h0M651.2 374.7h0M652.4 372.8h0M653.4 371.8h0M654.8 372.2h0M655.1 374.5h0M655.9 374.9h0M657.1 372.2h0M657.1 370.5h0M659.8 371.6h0M659.8 372.6h0M663.1 375.8h0M663.9 373.1h0M666.3 369.8h0M667.2 375.1h0M668.9 372.7h0M670.9 374.1h0M675.8 374.6h0M681.8 368.8h0M688.9 372.9h0M689.5 374.3h0M690.7 372.3h0M690.8 375h0M691.9 374.3h0M692.7 373.2h0M692.8 375.5h0M693.9 373.5h0M693.9 374.8h0M697.4 373.4h0M697.7 372.7h0M699.1 368.1h0M699.9 375.2h0M701.3 375.3h0M703.9 369h0M706.9 368.6h0M712.1 369.8h0M712.5 373h0M713.8 370.5h0M716.5 372.2h0M716.6 371.6h0M716.8 372h0M717 370.1h0M718.4 371.6h0M719.5 375.4h0M719.7 372.8h0M720.9 373.3h0M721 375.3h0M721.2 371.7h0M724.7 372.3h0M726.9 368.2h0M728.8 371h0M729.2 368.2h0M729.3 373.3h0M730 369.7h0M730.7 369.6h0M731.1 375.4h0M732.3 369.7h0M733.4 368.6h0M733.8 371.9h0M734.2 372.8h0M735.2 368.3h0M735.4 368.4h0M736.6 371.7h0M737 371.1h0M737.3 370.4h0M738 375.5h0M738.9 369.3h0M738.9 371.3h0M740.1 371.4h0M740.1 372.2h0M745.1 374.4h0M747.1 373.2h0M753.4 375.7h0M756.4 374h0M757.1 369.5h0M757.7 368.6h0M758.8 370h0M759.3 371.3h0M760.4 373.4h0M760.8 371h0M761 371.3h0M761.5 369.8h0M761.8 369.6h0M762.6 370.4h0M762.7 375h0M763 372h0M763.7 368.2h0M763.7 372.7h0M763.8 368.4h0M763.9 369.4h0M764 371.1h0M764.1 368.1h0M764.2 371.9h0M764.5 370.6h0M765.1 370.5h0M765.4 373.2h0M765.5 373.6h0M768 371.9h0M768.1 373.3h0M768.1 375.8h0M768.3 373.1h0M770 370.6h0M770.9 374.2h0M772.4 369.3h0M772.7 370.1h0M772.7 373.2h0M772.9 375h0M773 375.4h0M773 372.7h0M773.1 370h0M774.2 371.7h0M774.3 374.4h0M774.6 374.4h0M774.6 371.3h0M774.8 375.2h0M775.1 368h0M775.6 371.1h0M775.9 373.9h0M777.2 372.1h0M777.3 369.6h0M777.6 375.6h0M777.7 371h0M778.1 375.2h0M778.4 371.6h0M778.5 371.2h0M779.3 373.4h0M779.6 370h0M780 371h0M780.1 368.1h0M780.2 375.9h0M781.6 368.4h0M783.9 373.1h0M784.4 373.4h0M784.7 375.1h0M785 368.5h0M787.3 372.3h0M787.7 368.1h0M791 374.5h0M796.5 375.9h0M799.3 375.5h0M805.5 368.5h0M806.4 370.4h0M807.6 368.4h0M808.1 369.2h0M808.7 368.6h0M809.2 374.1h0M809.4 372.4h0M809.4 370.4h0M810 370.6h0M810.1 374h0M810.7 374.2h0M811.3 374.9h0M811.7 371.1h0M812 372.9h0M812 371.4h0M812.7 373.4h0M813 375.3h0M813.1 369.3h0M813.9 368.3h0M814.1 375.4h0M814.1 374.5h0M814.7 372.7h0M815 370.9h0M815.2 370.3h0M815.5 375.9h0M817.2 374.1h0M817.3 373.7h0M817.4 372.9h0M817.8 369.8h0M818.4 375.6h0M818.4 369.9h0M819.4 373.6h0M819.7 372.1h0M820.7 368.1h0M821.1 368.2h0M822.1 371.3h0M823.2 373.7h0M824.4 373.4h0M824.6 375.9h0M826.6 372.9h0M827.6 370.7h0M832.4 368.5h0M833.3 372.7h0M834.2 371.1h0M835.9 374.6h0M836.5 375.2h0M837.3 369.3h0M838.3 372.1h0M849 374.2h0M851.1 371.6h0M852.4 375.9h0M915.2 375.9h0M916.2 374.5h0M917.8 374.1h0M920.6 374.8h0M922.1 375.8h0M922.7 373.1h0M923.8 369.5h0M925.5 373.5h0M928 371.4h0M930.6 375.5h0M960.6 373.8h0M964 373.3h0M964.8 375.4h0M967.7 370.6h0M363.8 381.3h0M394.2 382.2h0M408.8 378.7h0M413.7 376.5h0M416.8 376.3h0M418.6 382.8h0M430.7 377.8h0M431 381h0M431.1 377.9h0M432.5 376.6h0M433 383.1h0M435.2 379.6h0M436.1 382.7h0M437 382.4h0M438.9 382.3h0M439.6 377h0M440.8 378.4h0M456.4 379.6h0M458.4 376.5h0M458.4 383.6h0M459 383h0M462 380.2h0M462.3 377.2h0M470 379.5h0M470.4 381.7h0M472.7 382.1h0M475.5 377.8h0M475.8 380.6h0M475.9 377.9h0M477.2 382.9h0M477.3 379.1h0M479.3 381.5h0M496.4 379h0M499.3 379.6h0M503.8 380.4h0M511.2 383.8h0M522.9 377.2h0M523.9 378.1h0M524.2 376.5h0M524.9 379.7h0M527.7 379h0M529.6 381.9h0M535 379.7h0M535.1 376.9h0M537.9 381.6h0M542.3 377.6h0M545.2 379.1h0M546.6 382.6h0M550.3 378.1h0M550.7 382.7h0M553.4 380.3h0M559.6 380.8h0M561 383.6h0M575.2 376.8h0M577.8 383.3h0M578.3 378.9h0M579.5 380.6h0M580 382.1h0M580.2 382.3h0M580.4 380.3h0M581 378.4h0M581.6 381.3h0M583.3 382.3h0M585.4 382h0M590.2 378.5h0M599.3 383.4h0M603.8 378h0M603.9 377.2h0M604.7 381.9h0M604.8 380.3h0M606.1 382.4h0M606.8 378.5h0M607 382.2h0M607.1 383.8h0M607.2 382.2h0M607.5 382.8h0M608.2 382h0M609.4 381h0M609.6 382.3h0M610 382.2h0M610.3 380.3h0M610.5 383.4h0M610.8 383.2h0M610.9 383.6h0M611.6 383h0M612.2 382.5h0M613.2 379.5h0M613.7 383h0M616.9 382.5h0M630.3 379.3h0M652.7 376h0M653.5 376.9h0M653.8 378.4h0M654.4 377.8h0M655.6 379.1h0M657.7 381.3h0M658.6 379.4h0M664.9 376.5h0M665.8 380.4h0M666.8 376.7h0M676 378.2h0M685.6 376.4h0M686.4 380h0M693.3 379.3h0M695.3 377.4h0M696.7 380.9h0M699.7 376.7h0M701.1 377.4h0M705.4 379.8h0M708.3 378.1h0M708.7 380.4h0M711.1 379h0M713.6 378.6h0M716.5 378.2h0M719.1 376.3h0M719.9 381h0M721.6 378.7h0M721.9 381.2h0M722.2 383h0M723.8 377.5h0M723.9 378.9h0M725.6 382.1h0M726.3 381.4h0M727.2 383.6h0M728.9 383.4h0M729 379.3h0M729.7 376.1h0M731.8 381.7h0M750 376.8h0M756.2 376.9h0M757.8 377.9h0M758.3 376.7h0M758.5 376.3h0M762.2 376.2h0M769.6 378.9h0M770.7 380.2h0M771 383.7h0M772.4 381.2h0M773.1 378.5h0M773.8 377h0M774.6 380.8h0M775 377.2h0M775.6 380.9h0M776 377.1h0M777.3 382.6h0M777.8 378.6h0M777.9 378.7h0M777.9 379.5h0M778.9 377.3h0M779.1 379.2h0M779.4 377h0M779.5 377.7h0M780.7 376.5h0M780.8 381.7h0M781.6 380.2h0M781.8 380.6h0M782.1 377.8h0M782.5 378h0M782.9 383.2h0M784.3 377h0M784.7 380.4h0M784.8 381h0M785.9 380.6h0M788.9 382.8h0M798.4 376.8h0M801.3 376.3h0M806 380.1h0M809.9 376.1h0M815.5 377.1h0M816.4 379h0M817 379.4h0M817 378.1h0M819.3 378.3h0M820 376.7h0M824.3 378.3h0M824.9 376.8h0M826.8 381.3h0M827 379.8h0M827.6 380.3h0M828.2 376.9h0M828.8 376.7h0M829.7 382.3h0M831.5 381.2h0M836.5 376.1h0M839.5 376.3h0M841.7 380.4h0M842.8 377.2h0M843.1 382h0M843.5 381.9h0M853.1 376.6h0M853.5 380.4h0M854.3 381.8h0M856 383.4h0M856 378h0M863.5 381.6h0M868.4 380.7h0M871.6 377.3h0M873.1 378.1h0M873.6 380.3h0M876.1 379.5h0M878.1 382.1h0M914.2 378.2h0M915.4 381.1h0M917.8 383.6h0M918.6 380.6h0M918.7 377.6h0M919.9 380.4h0M920.1 377.2h0M921.6 380h0M922.3 383.8h0M922.8 377.1h0M924.3 381.3h0M925.1 383.5h0M925.2 381.2h0M926 378.5h0M926.8 377.6h0M929.8 378.7h0M932.1 379.7h0M932.8 380.6h0M934.6 378.9h0M936.4 380.9h0M937.1 378.2h0M938 383.2h0M939.9 379.7h0M957.4 380.8h0M367.6 387.3h0M368.4 391.4h0M368.6 388h0M369.6 388.2h0M369.7 386.6h0M370.1 388.5h0M370.7 388.5h0M372.2 388.1h0M378.3 391.8h0M395.7 384.3h0M395.9 387.1h0M396 391.4h0M399.4 385.9h0M399.9 389.8h0M403 390.8h0M405.4 391.7h0M405.7 391.2h0M406.2 391h0M407.4 390.3h0M421.2 384.3h0M421.5 384.8h0M422 386h0M424.6 390.9h0M425.2 386.7h0M430.9 385.7h0M432.9 388.8h0M433.9 388.6h0M433.9 385.8h0M436.5 389.7h0M437.6 386.5h0M438.2 385.1h0M441.4 386.3h0M455.6 389.4h0M460.9 387.3h0M462.5 385.7h0M463.4 389.1h0M467.6 389.8h0M472.3 387.1h0M474.4 386.1h0M478.8 390.9h0M481.1 387.3h0M484 388h0M487.6 389.4h0M490.8 390.2h0M498.5 389.8h0M500.3 384.9h0M503.3 387.5h0M503.3 391.7h0M511.9 387.6h0M512 390.8h0M525.9 385.3h0M550.4 389.5h0M552.9 384.1h0M553.3 385.4h0M554.2 390.1h0M555.7 387.4h0M558.3 388.3h0M561.1 385.2h0M563.8 387.9h0M566.4 390.9h0M567.8 391.7h0M572.2 391.7h0M574.2 387.7h0M577.1 391.3h0M577.1 386.1h0M583 384.9h0M586 384.8h0M586.3 384.3h0M586.9 384.1h0M587.7 386.6h0M588.7 388.1h0M601.3 385.8h0M601.3 384.8h0M601.9 389.5h0M602 386.1h0M603.4 387h0M603.6 386.5h0M604.2 387.8h0M604.7 385.8h0M605.4 388.7h0M605.8 386.6h0M606.3 385.9h0M606.3 385.3h0M607 389.5h0M608.5 386.3h0M608.5 386.3h0M608.6 389.3h0M608.7 390.2h0M608.7 384.4h0M609.1 387.1h0M609.3 384.3h0M609.7 387.6h0M609.8 386.9h0M609.8 387.9h0M610 386h0M610 389.5h0M610.2 389.4h0M610.3 387h0M610.7 391h0M610.9 386.7h0M611.5 389h0M611.5 391.5h0M611.6 386.9h0M611.8 386.6h0M612 386.4h0M612.1 388.2h0M612.2 390.2h0M613.1 385.6h0M613.4 388h0M613.6 385.4h0M613.8 385.4h0M613.9 389.8h0M614.9 391.1h0M615.3 385.7h0M615.8 387.2h0M615.9 391.6h0M616.2 388.1h0M616.8 390.4h0M616.9 387.1h0M617.2 386.6h0M617.4 391h0M617.6 389.6h0M617.9 390h0M618 385.9h0M618.4 389.3h0M620.2 391.3h0M620.9 387.9h0M621.8 390.2h0M622.6 386.9h0M623 391.1h0M624.4 384.1h0M625.3 390.7h0M625.4 387.6h0M627.7 386.1h0M631.3 387.5h0M631.4 388.8h0M633.5 390.3h0M635.4 389.2h0M666.6 388.4h0M667.3 391.7h0M668.5 384.7h0M669 387h0M669.3 391.4h0M669.7 384.2h0M670 389.2h0M672 385.5h0M672.6 389h0M675.7 391.5h0M676 389.1h0M676.2 389.5h0M676.7 390.8h0M677.2 391h0M678.4 386.9h0M678.6 390.9h0M681.3 390.9h0M682.3 391.9h0M685.3 390.2h0M687.7 390.3h0M689.8 388h0M696.8 390.8h0M697.2 390.2h0M721.6 387.3h0M722.2 387.7h0M723 390.6h0M724.9 387.3h0M726.9 389.2h0M728.6 390h0M729.6 387.6h0M730.2 388.5h0M730.6 389.8h0M732.6 391.6h0M733.2 384.8h0M734.2 389.3h0M735.4 390h0M735.9 391.3h0M742.1 391.6h0M743.3 390.1h0M746.2 391.4h0M771.5 388.3h0M773.4 390.9h0M777.4 387h0M778.3 389.4h0M783.1 391.4h0M783.6 384.3h0M784.5 388.1h0M788.2 390.5h0M788.7 386.8h0M789 390.1h0M791.8 384.8h0M792.6 385.5h0M792.8 390.5h0M793.4 386.6h0M793.6 387.7h0M796.4 389.1h0M796.4 390.5h0M796.7 388h0M799.3 391.2h0M825.7 386.1h0M826.1 388.3h0M826.4 388h0M827.1 390h0M829.3 390.6h0M830.8 388.1h0M832.2 390h0M832.7 391.4h0M833.4 388.8h0M834.8 385.5h0M837.9 388.4h0M838.4 391h0M838.9 390.2h0M840.4 389.2h0M841.3 389.3h0M845.8 386.3h0M848.3 389.1h0M859.5 391.1h0M861.9 387.8h0M864.1 391h0M864.3 387.6h0M865.2 384.7h0M865.9 384.3h0M866.5 387.5h0M869.9 385.5h0M871 385.9h0M871.7 384.6h0M875.4 391.4h0M875.8 385.1h0M880.3 387.7h0M925.1 384.2h0M925.5 386.8h0M928.8 386.9h0M930 385h0M931.2 391.3h0M931.2 386.8h0M931.5 385.5h0M935 386.9h0M936.7 388.2h0M938.1 389.9h0M938.4 387h0M939 388.5h0M942.6 387.5h0M945.8 391.6h0M946.8 389.8h0M949.1 390.6h0M951.4 391.2h0M956.3 390.6h0M956.9 385h0M958.1 385h0M959.4 386.6h0M961.1 389.5h0M961.3 386.5h0M963.5 384.3h0M966.2 389.6h0M967 390.9h0M968 388h0M968.2 391.5h0M972.2 391.3h0M363.8 393.1h0M366.4 394.3h0M371.9 392.1h0M372.1 393.8h0M373.7 393.2h0M375.4 397.4h0M375.5 394.2h0M375.7 392.3h0M376.3 397.7h0M378.2 395.1h0M378.8 396.6h0M392.7 395.4h0M395.7 395.5h0M398.1 395.9h0M399.3 394.3h0M399.4 399.8h0M399.8 392.3h0M399.9 395.9h0M400.2 397.5h0M400.2 395.1h0M400.3 394.8h0M400.8 399.7h0M401.5 399.2h0M402.2 393.1h0M402.3 398h0M402.7 397.5h0M402.7 397.4h0M403.1 399.4h0M403.5 394.1h0M403.6 400h0M404.5 395.7h0M405 392.3h0M406.3 393.9h0M406.9 396.1h0M406.9 398.3h0M407.5 399.4h0M407.5 395.2h0M408.2 398.3h0M408.4 399.9h0M409.3 396.4h0M409.8 395.7h0M410 395.8h0M410.2 394.5h0M413.3 399.9h0M415.6 398.1h0M416.3 398.2h0M419 398.8h0M428.8 392h0M430.4 394.4h0M430.6 395.7h0M431.2 392.5h0M432.6 395.2h0M433 396.9h0M436.3 393h0M456.3 400h0M458.5 398.7h0M459.5 396.2h0M477 392.1h0M479.3 395.4h0M481 397.1h0M484.2 396.6h0M487.8 399.7h0M504.3 397.7h0M506 393h0M506.8 393.6h0M507.9 397.8h0M510.5 394.6h0M510.8 395.1h0M512.8 393.5h0M512.9 394.6h0M514.4 396.6h0M516.4 399.3h0M517.4 398.7h0M521.4 400h0M551.5 393.5h0M551.7 394.8h0M555.8 399.5h0M556.4 397.2h0M556.5 399.1h0M559.4 398.7h0M575.7 395.1h0M578.2 396.6h0M580.9 392.2h0M585.8 399.5h0M590.9 396.9h0M591.4 397.7h0M602.5 393.2h0M608.3 393.9h0M610.8 394.9h0M611.6 392.3h0M613.3 393.3h0M621.6 393.5h0M622.9 392.4h0M624.1 396.2h0M624.4 394h0M624.8 394.5h0M627.2 395.1h0M627.6 395.7h0M627.8 396.6h0M632.2 399h0M634.3 397.1h0M637.8 396.1h0M639.1 393.8h0M639.3 399h0M639.9 397.3h0M640.9 394.4h0M642.3 397.4h0M642.6 399.7h0M643 393.5h0M644 398h0M645.9 397.2h0M647.6 399h0M648.1 399.4h0M657.9 397h0M658.7 397.5h0M660.6 395.3h0M671.6 393.6h0M671.7 394.1h0M673.8 397.6h0M676 398.1h0M676.9 395h0M678 398.2h0M680.2 393.7h0M680.9 398.4h0M681.9 392.7h0M683 397.4h0M683.2 393.3h0M683.6 393.5h0M683.8 399.2h0M684.4 396.3h0M685.5 395.3h0M686.6 396.5h0M687.2 393.2h0M687.7 394.1h0M688.3 392.4h0M689 398.9h0M689 399.6h0M689.2 392.5h0M690.2 392.6h0M690.8 397.4h0M691 398.1h0M691.6 395.6h0M692.2 395h0M692.3 394.5h0M693.2 398.6h0M694.9 394h0M696.3 394.4h0M697.1 395h0M697.1 397.1h0M697.2 392h0M697.4 397.5h0M701.5 398.9h0M703 398.5h0M706.1 399.6h0M723.7 394.3h0M725.5 395.6h0M725.9 397.3h0M727.6 393.2h0M730.8 399.1h0M730.9 394.7h0M731.8 393h0M732.1 396.7h0M735.7 393.7h0M736.5 392.2h0M736.8 399.1h0M739.1 392.7h0M739.1 395.8h0M739.3 394.1h0M741.9 397.4h0M742 392.9h0M742 397.7h0M743.1 397.8h0M743.3 399.7h0M743.7 392.7h0M744.6 398.3h0M744.8 393h0M745 392.3h0M745.1 396.8h0M745.7 396.1h0M746 396.8h0M746.5 393.5h0M746.9 399h0M747 394.2h0M747.1 397.8h0M748.3 392.3h0M749.1 399.3h0M749.5 398.3h0M749.6 396.6h0M749.7 397.4h0M749.7 394h0M750 394.1h0M750.3 398.7h0M750.5 398.6h0M751.6 394.4h0M751.6 397.3h0M752.2 398.2h0M752.6 397.6h0M753.7 398.7h0M754.7 395.1h0M772.8 394.3h0M775.7 398.4h0M776 392.2h0M776.4 395.4h0M777.7 392.1h0M781.9 395.9h0M784.8 395.7h0M785 399.7h0M785.5 399.9h0M789.6 394.6h0M790.9 394h0M791.4 394.9h0M795.9 397.5h0M796 395.4h0M797.9 396.3h0M800.1 396.8h0M800.2 399.9h0M801.1 392.5h0M801.1 393.1h0M802.5 393h0M802.9 399.3h0M803.8 398.1h0M804 396.5h0M804.4 394.5h0M806.2 399h0M806.3 395.9h0M809.1 399.6h0M809.2 398.8h0M809.2 398.8h0M815.3 399.9h0M830.2 394.7h0M831.7 393.2h0M832.4 392.6h0M833.8 395.1h0M833.9 392h0M835.5 393h0M836.1 399.8h0M836.3 395.3h0M836.7 394.6h0M836.8 397.5h0M837.4 394.2h0M837.8 393.8h0M837.8 397.8h0M837.9 392.6h0M838.1 398.7h0M838.5 398.6h0M839.3 397.1h0M839.7 399.3h0M840.5 396.4h0M840.6 399.8h0M840.6 396.4h0M840.7 392.6h0M840.8 394.6h0M841.6 393.1h0M841.8 395.2h0M842.1 395.6h0M842.9 399.8h0M843.1 393.5h0M843.4 392.2h0M844.1 398.6h0M844.1 395.1h0M844.2 399.3h0M845.9 392.1h0M846 394h0M846.4 393.2h0M846.6 397.6h0M848.8 396h0M852.6 396.1h0M853.4 392.7h0M854.8 399.9h0M855.8 392.6h0M856.4 394.6h0M856.7 397.7h0M857.3 398h0M859.3 395.6h0M860.2 396.2h0M863.9 392.1h0M865.5 396h0M867.1 394.4h0M867.6 398.7h0M872.4 393.9h0M895.9 397.6h0M898.8 399.3h0M902.4 399.9h0M902.6 399.7h0M908.5 398.2h0M918.4 398.4h0M934.6 394h0M938.8 396.5h0M938.9 398h0M940.5 396.6h0M942.7 398.4h0M943 395.1h0M944 395.8h0M944.4 393.6h0M944.6 396.7h0M945.5 396.3h0M948.1 399.9h0M962.8 394.2h0M963 396.7h0M966 396.9h0M966.4 395.1h0M969.2 393.3h0M971.1 399.7h0M972.7 393.7h0M373.2 402.5h0M373.5 404.7h0M373.7 401.8h0M375.3 407.7h0M376.5 405.1h0M377.3 402.8h0M381.3 403.7h0M395.6 401h0M398.8 401.4h0M400.1 400.4h0M401.8 404.7h0M402.4 406.7h0M403.1 404h0M403.7 400.4h0M404.8 402.3h0M406 403.5h0M406.9 402.7h0M408.8 406.7h0M409.4 402.6h0M411.1 404h0M411.4 400.4h0M411.4 403.9h0M411.7 400.9h0M412.9 403.1h0M413.1 402.7h0M413.5 407.2h0M414.7 402h0M414.9 407.2h0M415.3 401.4h0M415.9 404.6h0M418.6 407.4h0M420.6 402.6h0M421.5 401.5h0M423.4 402.5h0M451.8 406.6h0M455 406.1h0M455.4 403.9h0M456 406.1h0M460.5 402.2h0M460.7 402.3h0M460.8 401.7h0M461.5 406.1h0M463.4 405.2h0M463.9 405.4h0M465.9 406.9h0M466.2 406.8h0M490.2 401.4h0M492.4 405.8h0M494.8 405.9h0M495.2 407.2h0M499.7 403.2h0M501.1 406.8h0M511.9 403.5h0M515.9 405.7h0M519.2 404.1h0M524.6 403.3h0M524.8 405.8h0M555 401.4h0M555 403h0M557.2 402.7h0M557.9 402.2h0M557.9 405.5h0M558.9 403.9h0M560.5 407h0M562.5 407.5h0M562.8 403.5h0M563.7 403.1h0M569.8 403h0M572.5 403.8h0M576.9 406.4h0M581.5 407.7h0M584.1 401.3h0M586.4 403.4h0M588.1 402.1h0M590 406.5h0M595.5 400.4h0M596.9 405.2h0M597.1 400.4h0M597.3 404.7h0M601.3 407.3h0M605.5 407.1h0M610.4 406h0M621.9 401.8h0M629.7 401.8h0M630.9 401.4h0M631.2 401.4h0M631.7 404.4h0M633.9 405.4h0M635 403.3h0M635.9 405.4h0M636.3 400.2h0M639 402.3h0M639.9 407.6h0M639.9 401.1h0M640 403.5h0M641.2 408h0M641.7 403.1h0M641.8 404.7h0M645.2 400.9h0M645.4 402.8h0M646.2 407.4h0M649.7 404.1h0M650.1 402.4h0M652.2 401.8h0M653.4 406.7h0M654.7 402.4h0M662.1 402.7h0M663 400.4h0M664.1 405.7h0M665.8 407.2h0M667.7 406.6h0M680.4 401.8h0M686.1 402.5h0M687.1 404.4h0M687.9 407.6h0M688.1 401.7h0M688.3 403.7h0M688.7 407.6h0M689.3 407.5h0M689.9 405.5h0M690 406.8h0M690.8 402.7h0M691 406.3h0M691.6 402.7h0M693.6 405.3h0M695.9 407.8h0M696.7 401.2h0M697.2 403h0M697.2 407.7h0M699.1 401.9h0M699.5 406.5h0M700.1 403.3h0M700.4 400.1h0M700.8 407.9h0M701.1 402.4h0M701.3 403.2h0M701.7 401h0M702.1 401h0M702.5 403.8h0M703.3 401.4h0M703.4 403.3h0M703.6 404.3h0M703.6 402.8h0M705.8 401.8h0M709 404.8h0M709.5 405.1h0M713.8 405.3h0M715.2 404.9h0M718.7 407.4h0M718.8 405.2h0M720.4 405.7h0M721.1 401.5h0M722.4 405.4h0M723.2 406.8h0M724.3 404.2h0M725.6 406.8h0M725.6 400.3h0M726.8 407h0M727.1 403.5h0M728.2 402.7h0M728.6 404.7h0M729.3 400.7h0M730.9 407.2h0M736.5 402.2h0M742.1 407.6h0M744.3 401.3h0M745.3 403.1h0M748.8 402.4h0M748.8 405.4h0M749.6 401h0M749.7 402.3h0M749.9 400.2h0M750.1 400.1h0M750.3 401.1h0M751.6 402.3h0M751.8 405.6h0M752 404.5h0M752.4 401h0M752.5 403.6h0M752.8 403.1h0M753.8 402.1h0M753.9 406.4h0M754.6 407.7h0M755.6 401h0M756.2 401.2h0M756.6 403.5h0M756.6 404.3h0M756.7 406.1h0M756.8 407.4h0M757.5 400.3h0M758.1 402.8h0M759.5 405.3h0M759.9 404.3h0M760.7 401.1h0M762 404h0M766.3 404.8h0M772.8 401.4h0M775.6 403.8h0M777.2 406.6h0M777.2 402.2h0M781.9 403.9h0M786.5 402.7h0M788 403.5h0M788.6 404.5h0M789 405.7h0M792.8 407.1h0M802.1 402.4h0M804.4 402.3h0M804.4 400.6h0M804.6 404.2h0M805.4 400h0M805.8 401.1h0M805.9 400h0M806.1 404.4h0M806.5 400.7h0M807.3 400.6h0M807.3 402.2h0M807.3 403.1h0M807.8 402.9h0M808 406.3h0M808.7 406h0M808.8 402.8h0M808.9 403.5h0M809.3 401.7h0M809.8 404.8h0M810 401.8h0M810.2 403.1h0M810.9 403.2h0M810.9 404.1h0M811.6 407h0M811.7 404.5h0M811.7 405.4h0M811.7 401h0M811.9 402.1h0M812.1 403.3h0M812.9 407.4h0M813.3 403.8h0M813.4 407h0M813.4 405.7h0M814.7 405h0M819.3 400.1h0M823.2 401.5h0M834.9 400.5h0M837.4 402.9h0M837.8 407.3h0M838.7 407.2h0M839.9 405.4h0M842.5 406.2h0M842.8 400.6h0M843.2 405.4h0M843.4 407.4h0M844.6 405.8h0M845.5 402h0M845.8 403.4h0M847.9 403.2h0M850.3 407.5h0M850.7 400.2h0M854.1 401.9h0M857.8 401.6h0M860.4 401.7h0M861.4 402h0M862.5 400.8h0M863.6 404.7h0M865.9 400.1h0M866.3 403.3h0M866.6 403.1h0M869 400.8h0M869.9 404.7h0M870.4 407.4h0M882.1 401.3h0M888.2 406.4h0M900.4 402.5h0M901.2 405.2h0M902.1 402.5h0M902.1 406.7h0M902.6 401.4h0M903.1 401h0M903.2 405.5h0M903.7 405.1h0M904.6 402.3h0M905.1 405.7h0M906.6 403.5h0M906.7 400.4h0M906.8 405.9h0M906.9 402.5h0M907 400.3h0M907.5 407h0M908.3 406.8h0M908.5 406h0M909.1 404.1h0M909.2 406.4h0M909.4 402.5h0M910.4 407.9h0M911 400.8h0M911.6 403.5h0M912.9 401h0M917.4 401.2h0M918.1 404.8h0M920 407.6h0M920.4 405.5h0M921.6 400.9h0M922.1 403.8h0M922.9 401.5h0M926 401.8h0M940.3 401.1h0M945.2 400.2h0M946.8 401.6h0M948 403h0M948.8 400.4h0M950.1 402.7h0M950.5 402.3h0M950.6 404.6h0M952.2 405.3h0M952.7 402.9h0M953.3 407h0M953.4 406.2h0M953.5 402.5h0M956 405.8h0M957.7 404.3h0M958 407.7h0M966.6 401.6h0M968.9 402.5h0M971 404.7h0M972 407.5h0M368.8 409.1h0M370.3 411.4h0M371 410.3h0M373 410.8h0M375.5 415.1h0M376.2 414h0M377.8 412.6h0M378.2 409.8h0M379.2 415.9h0M404.4 409.8h0M406.3 413h0M411 408.2h0M420.9 408.6h0M422.9 414.3h0M424.4 408.9h0M425.7 410h0M426.7 409.8h0M428.1 410.3h0M428.8 410.4h0M453.1 409.1h0M457.7 408.7h0M458.3 411.5h0M459.2 409.8h0M465.2 412.8h0M466.1 410.2h0M468.5 411.4h0M469.3 412.3h0M469.8 415.5h0M473.1 414.1h0M494.4 415.5h0M496.5 415.3h0M517 408.6h0M519.1 412.7h0M520.3 408.4h0M520.6 416h0M522 410.9h0M524.2 409.2h0M525.3 409.6h0M528.5 413.4h0M528.8 413.3h0M529 413.5h0M531.8 409.6h0M537 408.3h0M538.8 409.7h0M543.5 410.4h0M547.7 411.8h0M553.2 412.1h0M556.1 411.9h0M574 413.9h0M576.5 409h0M577.5 411.1h0M583.4 412.4h0M585.8 415.5h0M593.9 409.3h0M602.5 413h0M603.6 414.7h0M604.3 414.8h0M606.6 414.6h0M606.8 409.1h0M607 414.2h0M607.5 415.6h0M607.8 410.9h0M608.1 412.2h0M608.6 410.3h0M608.9 415.6h0M609.2 411.3h0M609.7 408.3h0M609.8 411.6h0M610.7 411.6h0M610.9 412.8h0M610.9 413.9h0M612.4 415h0M612.7 408.7h0M614.4 412.6h0M615.5 410.6h0M617.8 414.1h0M636.8 411.2h0M636.9 408.6h0M641.2 411.9h0M641.7 415.2h0M642.3 414.6h0M642.4 411.2h0M643.3 410.6h0M644.2 414.7h0M647.2 408.9h0M648.4 408.8h0M649.9 409h0M651.3 408.8h0M652 412.2h0M653.6 409.3h0M653.8 411.3h0M656.1 411h0M657.7 414.9h0M657.9 411.7h0M658.8 414.2h0M661.4 415.4h0M662.7 414.3h0M662.7 415.2h0M664.2 411.5h0M666 410.8h0M666.5 412.9h0M688.3 409.8h0M690.6 409.5h0M690.7 410.4h0M693 412.2h0M693.9 414.6h0M695.8 414.1h0M696 412.6h0M696.7 414.5h0M698 410h0M700.4 413.7h0M701.1 409.5h0M701.7 411h0M702.4 415.5h0M703.3 410.7h0M704 411.4h0M705.7 414.7h0M705.9 414.9h0M712.4 412.2h0M713.2 409.2h0M714.7 408h0M714.7 411.7h0M716.7 413.5h0M717.1 415.4h0M717.9 408.3h0M719.2 408.9h0M719.9 411.5h0M720.7 413.8h0M724.9 409.3h0M731.3 409.2h0M735.5 413h0M735.5 410.5h0M738.5 415.2h0M739.3 411.1h0M743 415.6h0M743.1 410.3h0M746.5 412.6h0M752 414.1h0M752.5 410.9h0M754.8 408.3h0M757.3 412.3h0M757.4 411.3h0M759.1 409.9h0M759.1 409.5h0M761.2 413.1h0M763.8 409.3h0M770.3 408.2h0M773 415.4h0M773.1 410h0M773.2 413.3h0M780 410.6h0M782.9 413h0M783.3 413.9h0M785 414.4h0M786.9 409.9h0M788.9 411.7h0M791.2 409.3h0M793.6 415h0M794.5 412.3h0M795.2 409.3h0M795.8 411.2h0M797.4 415.6h0M797.7 411.5h0M798.1 409.9h0M798.9 414.8h0M800.7 415.5h0M801.6 410.5h0M802.8 415.2h0M807.5 409h0M808 411.2h0M808.6 408h0M810.8 411.7h0M811.9 415.5h0M813.1 409.3h0M815.2 413h0M815.6 414.4h0M815.7 408.7h0M816.6 413.7h0M817.7 415.6h0M819.2 412.4h0M819.3 414.1h0M821.4 413.7h0M823.4 412.6h0M825.7 412.3h0M829 414h0M838.7 414.4h0M839.1 410.3h0M840.1 410.6h0M842.2 408.9h0M845 412.6h0M845.2 408.5h0M846 413.1h0M846.7 412.3h0M848.6 413.1h0M849.4 413.8h0M853.3 409.4h0M865.7 409.6h0M867.8 411.2h0M890.5 408.4h0M893.9 411.4h0M896.3 413h0M899.5 415.4h0M903.4 408.8h0M905.6 408.1h0M905.8 409.6h0M906 408.7h0M906.8 413.6h0M908.2 410.4h0M908.9 411.5h0M909 415.2h0M909.3 411.2h0M909.4 415.7h0M911.3 410h0M911.6 411.1h0M911.9 414.5h0M913.1 412h0M913.9 415h0M914.3 411.8h0M916.2 414.6h0M916.5 409.6h0M918.9 414.7h0M923.5 410.3h0M925.1 411h0M925.5 415.7h0M925.6 410.9h0M927 415.1h0M927.8 408.4h0M929.3 413h0M929.3 412h0M931.7 415.6h0M934.6 415.6h0M942.2 414.1h0M948.9 411.2h0M953 413.3h0M954.4 408.9h0M955.3 408.8h0M956.1 408.9h0M961.1 410.9h0M968.5 413.1h0M968.8 415.7h0M974.2 411h0M984.7 413h0M985.3 412.9h0M988.6 415.2h0M380.7 418.4h0M382 421.3h0M387.5 421.8h0M408.7 417.4h0M411.5 420.5h0M411.5 420.7h0M415 420.2h0M415.8 417.7h0M417.4 423.8h0M419.7 421.4h0M422.3 423.9h0M427.5 421h0M456.6 421.7h0M459.2 417.6h0M462.6 423.4h0M464 417.9h0M468.1 416.7h0M471.7 418.5h0M473.7 420.6h0M474.1 417.5h0M474.4 419.5h0M476.3 418.4h0M476.7 418.8h0M477.4 421.6h0M477.6 421h0M481.6 422.5h0M482.5 422.9h0M487.5 422.5h0M492.1 417.8h0M493.2 419.5h0M493.4 418.3h0M493.9 418.1h0M493.9 421.4h0M495.3 418.3h0M495.5 417.5h0M495.8 422h0M496.1 421.8h0M496.6 421h0M497 423.2h0M497.9 420.5h0M498.1 417.5h0M498.3 418h0M498.5 421.2h0M501.3 423.9h0M502.8 422h0M503.1 423.2h0M504 419.3h0M504.9 422.3h0M506 417.4h0M509 419.7h0M510.4 423.2h0M522.3 418.6h0M523.8 421h0M526.4 423.1h0M530.4 418.2h0M533.7 416.1h0M536.3 418.2h0M538.5 420h0M542.9 421.4h0M568.7 417.1h0M571.4 420.5h0M575 418.6h0M575.9 416.2h0M576.2 423.3h0M576.5 423.4h0M578.6 419.4h0M579.2 422.3h0M579.2 420.2h0M581.7 421.8h0M583.9 423.2h0M589 418.5h0M593.2 417.8h0M596.9 419.6h0M611 417.9h0M611.4 418.9h0M612.2 416.5h0M612.3 420.9h0M619.9 417.8h0M621.6 419.1h0M621.8 422.1h0M622.9 424h0M624.8 423.5h0M627 420.7h0M640.3 420.5h0M646 416.8h0M655.3 417.1h0M660.2 422.5h0M660.7 422.1h0M662.5 418.2h0M663.6 419.1h0M665.6 418.6h0M665.7 420.3h0M665.8 423.1h0M668.2 420.2h0M668.2 422.3h0M669.1 421.7h0M669.4 421.3h0M693.7 417.3h0M695.7 421.4h0M698.5 421.9h0M698.7 418.9h0M702.7 416.1h0M704.7 420.1h0M706.7 417.4h0M706.8 419.5h0M707.1 422.7h0M707.1 421.6h0M709.4 421.7h0M711.8 420.7h0M717.2 418h0M717.8 417.8h0M721.3 420.5h0M722.5 420.4h0M724.4 422.2h0M724.9 421.5h0M726.8 422h0M730.5 423.4h0M740.5 421h0M746.9 421.1h0M754.6 422.3h0M755.1 417.3h0M756.5 422.9h0M757.8 419.7h0M758.9 416h0M760.7 419.8h0M765.7 419.6h0M766.6 423.8h0M766.7 421.3h0M766.9 416.8h0M768.5 420.9h0M768.9 423.6h0M772 423.2h0M776.1 417h0M777.1 417.4h0M788.1 418.6h0M788.8 421.6h0M795.6 420.7h0M796.1 420.6h0M798.5 422.9h0M804.9 419.7h0M811.3 423.8h0M811.3 421.9h0M812.9 423.9h0M813.6 417.9h0M814 423.7h0M818.2 422.6h0M818.5 422.8h0M819.4 420.7h0M820 418.3h0M820.1 419.6h0M820.1 416.3h0M820.4 419.1h0M821.3 423.5h0M822.8 418.7h0M822.9 423.9h0M823.2 423.1h0M823.4 419.2h0M825.4 422h0M844.2 417h0M845.6 417.2h0M845.8 419.1h0M847.2 420.6h0M848.7 423.6h0M848.8 420.9h0M851 417.4h0M851.8 423.3h0M852.1 423.6h0M852.2 417.6h0M852.8 422.9h0M854.2 421.1h0M857 418.5h0M893.2 423.1h0M895 420.8h0M902.8 418.8h0M909.1 420.4h0M909.3 420.2h0M910.2 422.7h0M910.4 418.7h0M911.4 420.1h0M915.1 422.9h0M921.7 421.7h0M923.4 416.6h0M926.2 418.7h0M926.4 417.9h0M926.5 420.3h0M926.8 416.6h0M926.8 421h0M927.9 417.9h0M928.4 423.9h0M928.6 418.3h0M929.1 417.7h0M929.2 416.6h0M929.3 419.7h0M929.6 418.5h0M930.1 423.3h0M930.4 422.9h0M931.6 420.2h0M931.6 422h0M932.5 421.2h0M933.1 416h0M933.8 417.2h0M933.8 419h0M934.5 423h0M934.8 417.6h0M934.8 423.2h0M934.9 418.9h0M937.7 418.5h0M939.2 422.3h0M939.5 416.7h0M939.5 423.4h0M942.5 420.8h0M947.5 418.2h0M950.9 417.8h0M955 417h0M958.9 417.2h0M959.9 416.4h0M962.7 422.8h0M963.3 420.7h0M966.6 422.3h0M966.6 417.3h0M970.8 418.7h0M972.6 420.7h0M987.4 416.7h0M995.3 419.3h0M997 421.6h0M997.5 423h0M390 424.8h0M391.6 429.2h0M391.9 426.9h0M396.8 430.8h0M396.9 426.4h0M398.8 430.3h0M400.5 426h0M401.2 424.3h0M401.2 426h0M404.2 429.3h0M405.4 427.5h0M406.2 430.6h0M406.7 429.3h0M409.2 430.7h0M411.6 425.2h0M413 429.3h0M415.6 430.8h0M419.4 425.9h0M422.3 426.3h0M423.7 426.6h0M426.4 429.6h0M427.4 428.8h0M429.2 424.1h0M432 431.9h0M432 430.1h0M433.5 426.4h0M435.3 431.7h0M457.6 430.4h0M459.8 424.5h0M461.2 431h0M461.5 428.4h0M461.8 431.9h0M464.9 424.6h0M465.4 431.2h0M465.7 425.7h0M465.7 431.1h0M466.5 427.4h0M467.1 427.6h0M468.5 429.5h0M469.4 428.6h0M470.9 431h0M473.6 425.3h0M482.5 428.4h0M484.3 425.1h0M489.1 425.8h0M493.1 429h0M496.1 425h0M504 424.6h0M516 425.2h0M517.3 431.4h0M517.9 426.9h0M519.3 430.1h0M530.5 426.5h0M535.6 424.1h0M536.7 427.2h0M538.1 431.4h0M538.5 431.7h0M562.2 427.1h0M563.7 425.6h0M566.2 429.6h0M577.3 429h0M577.5 425.7h0M580.7 430.3h0M581.9 431.8h0M583.3 431.4h0M586.3 428.5h0M589.8 430.1h0M593.1 431.7h0M599.5 429.8h0M608.6 429.2h0M608.6 427.8h0M612.6 426.8h0M618 424.2h0M621.2 424.9h0M622.9 427.5h0M623.3 426.9h0M625.1 424.8h0M625.1 430.1h0M626 427.8h0M626.4 431.6h0M628 425.1h0M628.3 428.1h0M629.9 427.6h0M631.1 430.7h0M632 425.4h0M633.1 427.7h0M637.8 431.7h0M637.9 428.6h0M640.6 430.8h0M657.9 427.4h0M658.4 429.7h0M659.6 424.8h0M660.4 429.1h0M662.9 427.8h0M663.4 425.3h0M663.5 424.1h0M663.9 429.5h0M664.1 430.6h0M664.6 426.2h0M664.7 429.5h0M665.3 428.9h0M667.9 430.9h0M668 430.5h0M668.1 424.7h0M668.7 431h0M668.8 426.9h0M668.9 428.8h0M670.2 425h0M670.4 429.7h0M670.8 425.4h0M671.1 427.9h0M671.6 424.1h0M672.9 428.1h0M676.3 428.5h0M687.1 429.6h0M688.7 424.4h0M691.7 431.2h0M692.9 426.6h0M693.2 427.6h0M693.4 430.5h0M694.9 431.9h0M696.6 430.8h0M698.4 424.7h0M698.4 431.5h0M701.8 426.9h0M701.9 431.1h0M702.9 431.8h0M706.7 426.4h0M707.2 429.7h0M709.2 424.2h0M712 428.6h0M714.7 431.3h0M716.2 427.4h0M717.7 427.5h0M722.1 424.3h0M725.4 430.9h0M731.7 425.9h0M733.9 426.3h0M734.6 426.6h0M735.7 429.2h0M736.1 431h0M747.5 425.8h0M749.6 429.3h0M750.2 430.9h0M752.5 424.9h0M754.6 428.5h0M755 425.1h0M756.1 424.1h0M758 426.7h0M758.8 425.3h0M758.8 431.9h0M759 430h0M759.9 430.2h0M761.3 427h0M762.9 429.6h0M765 425h0M771 426.8h0M773.7 430.2h0M781.5 427.1h0M783.5 429.2h0M786 424.9h0M788.2 429.1h0M789.8 424.2h0M790.5 425.8h0M792.7 424.1h0M793.1 425.9h0M793.2 425.5h0M800.1 425.4h0M808.7 424.5h0M812.2 425.5h0M816.4 427.7h0M816.6 427h0M817 429.3h0M817.2 429.1h0M817.5 428.6h0M822.5 429.8h0M823 427.2h0M823.8 426.3h0M824.1 427.4h0M825.1 428.3h0M825.7 425.4h0M825.8 428.2h0M826.4 431.7h0M827.2 429.3h0M828.2 431.9h0M836.6 428.2h0M849.1 427.7h0M850.8 426.1h0M850.8 424.8h0M852.8 427.4h0M853.7 431.4h0M854.3 425.1h0M854.5 427.2h0M854.6 428.8h0M854.7 426.5h0M855.5 428.7h0M855.8 424.1h0M856.8 429h0M857.9 427.3h0M858.5 430.8h0M859.5 426.1h0M859.6 428.9h0M864 431.4h0M864.4 426.2h0M867.7 429.2h0M868.8 430.9h0M869.2 431.1h0M870.6 429.6h0M877.9 424.7h0M879.5 430.1h0M881.6 428.3h0M883 431.1h0M886 430.8h0M887.4 428.2h0M887.6 430.9h0M887.7 431.9h0M891.1 430.9h0M898.6 428.7h0M900.5 427.4h0M903.1 430.8h0M909.8 424.9h0M912.7 425.5h0M918.4 427.3h0M925.9 430.2h0M929.8 424.7h0M931.5 425.2h0M932.6 424.6h0M935.3 428.4h0M937.6 427.7h0M937.9 424.2h0M939.3 429.4h0M940.5 428.9h0M943 426.7h0M943.4 427.1h0M944.7 428.8h0M946.3 425.8h0M949.1 430.1h0M950.6 426.9h0M958.4 426.5h0M961 428.3h0M964.4 425.2h0M965.8 428.3h0M965.9 425h0M968.7 424.8h0M970.2 431.1h0M971.1 430.7h0M972 424h0M973.7 429.1h0M973.8 430.6h0M975 431.8h0M984.9 424.9h0M985.6 427.2h0M987.1 427h0M988.4 427.5h0M990.5 429.2h0M993.1 427.5h0M995.6 431h0M995.7 431.4h0M995.8 431.2h0M998 430.2h0M1002.8 427.5h0M394.9 432.6h0M399.1 433.9h0M409.2 434.6h0M411 436.7h0M411.2 432.9h0M414.7 432.2h0M416.2 439.2h0M419.5 434.6h0M421.2 436.6h0M431 435.8h0M431.1 440h0M455.3 432.6h0M456.7 434.5h0M457.9 439.1h0M459.8 438.4h0M461 436.2h0M461.1 437.9h0M461.4 433.3h0M462.2 436.4h0M463.5 437.1h0M463.6 438.6h0M465.9 438.9h0M466.6 432.6h0M466.9 432.8h0M472.9 435.3h0M491.7 437.3h0M495.7 439.3h0M504.8 437.2h0M523.8 432.9h0M526.6 434.4h0M527.9 437.3h0M531.6 432.1h0M533.4 436h0M535.6 437.6h0M536 439.7h0M538.6 439.4h0M539.3 435.7h0M542.2 434h0M542.3 438.7h0M543.1 432.6h0M543.6 439h0M544.3 436.6h0M545.5 438.5h0M545.7 435.7h0M548.7 440h0M563.9 432.8h0M567.3 435h0M572.1 437.4h0M572.4 434.6h0M574 432.1h0M575.3 435h0M577.2 436.5h0M577.5 439.4h0M579.6 433.2h0M581.6 437.6h0M582.3 436.6h0M582.7 432.2h0M584.5 434h0M584.6 437.2h0M584.9 434.5h0M586.1 439.5h0M587.3 436.5h0M588.1 436.4h0M593.2 432.6h0M596.1 434.6h0M598.1 434.3h0M599.6 435.9h0M600.5 432h0M605 433.5h0M605.9 437.1h0M613.5 432.8h0M618.2 434.6h0M618.4 438h0M619.4 432.5h0M623.2 433.5h0M627.8 435.2h0M628.2 436.3h0M629 435.3h0M630 439.6h0M630.6 433.6h0M631.5 432.2h0M631.6 439.7h0M631.6 439.7h0M631.7 436.5h0M633 437.6h0M633 432.8h0M634 435.4h0M634.4 437.6h0M634.7 438.5h0M635.8 435.1h0M636.9 438.7h0M638.5 438.5h0M638.6 437.3h0M638.7 439.4h0M639.6 434.2h0M639.9 438.3h0M641.6 433.9h0M642 436.4h0M642.6 439.8h0M643.4 436.4h0M645.1 438h0M648.1 438.9h0M648.9 437.3h0M648.9 439.8h0M659.5 438.3h0M659.6 434.5h0M662.3 435.4h0M662.3 435.1h0M663.1 434.6h0M664 436.9h0M664.5 438.8h0M666.3 432.9h0M666.6 433.8h0M667.5 435.2h0M667.8 436.4h0M667.8 438.7h0M669.7 433.1h0M670.2 437.1h0M670.3 437.9h0M670.4 436.3h0M672.3 433.5h0M673.4 432.2h0M674.3 435h0M674.9 433h0M676.7 439.4h0M679 434.7h0M679.5 437.1h0M680.8 436.5h0M684.8 436.9h0M701.1 432.2h0M701.4 435.9h0M705 439.1h0M707.6 435.7h0M708.8 436.2h0M709.6 433.6h0M711.7 435.9h0M712.7 437.1h0M713.2 439.8h0M716.4 434.1h0M731.2 437h0M731.5 432.3h0M734.6 435h0M735.9 435.7h0M738.2 432.5h0M739.4 433.9h0M755.8 434.8h0M756.1 437.7h0M760 433.4h0M762.2 434.5h0M762.6 434.2h0M762.9 432.6h0M765 433.8h0M765.4 439.3h0M765.5 438.3h0M767.8 434.5h0M768.9 435.6h0M770.9 439.4h0M776.4 432.2h0M778.1 435.7h0M797 432.2h0M817.1 435.1h0M817.7 433.4h0M818.5 438.1h0M819.2 438.4h0M819.2 433.5h0M823.6 433.7h0M827.4 433h0M829.9 434.3h0M830.9 434.4h0M837.4 432.2h0M838.4 435.6h0M856.7 432.9h0M857.9 438.1h0M860.3 432.7h0M863 439h0M863.5 434.6h0M866.8 434.3h0M871.1 436.2h0M871.9 434.7h0M872.5 437.4h0M873.1 437.2h0M874 432.7h0M875 432.6h0M877.4 433.3h0M877.6 435.1h0M877.8 438h0M879.8 433.4h0M881.6 433.8h0M882.6 437.5h0M886.2 433.1h0M887.4 434.9h0M892.7 435.2h0M895.4 434.4h0M898.2 435.3h0M898.3 436.8h0M900.4 438.9h0M900.8 432.3h0M901.5 438h0M901.8 434h0M902.8 432.2h0M903.4 438.6h0M903.6 436.2h0M906 432.8h0M907 435.2h0M919.6 434.6h0M922.2 434.5h0M922.5 437.3h0M926.2 436h0M927.5 439.4h0M927.6 433.8h0M928.1 437.4h0M929.9 438.5h0M933.6 437.7h0M963.1 437.8h0M964.7 435.9h0M964.8 438.2h0M965.3 434.9h0M966.7 435h0M969.6 438.5h0M970 432.2h0M970.1 439.1h0M971.5 439.7h0M972 439.6h0M972.6 433.5h0M972.7 432.8h0M975.4 436.7h0M975.9 438.8h0M976.7 436.1h0M977.3 438.6h0M978 434.9h0M979.3 439.2h0M979.7 439.5h0M979.8 435h0M983 437.2h0M984.4 439.5h0M991.6 435.2h0M996.4 435.9h0M997.6 435.3h0M998 435h0M1000.2 436.4h0M1002.4 437.1h0M414.7 445.8h0M417.3 448h0M419.4 441.2h0M420.7 446.3h0M424.1 445.7h0M431.7 440.6h0M433.1 443.1h0M435.3 445.7h0M437.4 447.6h0M439.7 445.5h0M442.8 444.4h0M446.8 444h0M447.5 447.3h0M451 447.7h0M461.2 441.5h0M463.6 441.8h0M469 445.8h0M470.7 446.5h0M473.1 446.8h0M474 447.7h0M478.9 440.6h0M479.2 444.3h0M493.4 443.5h0M495.8 441.1h0M498.9 440.8h0M502.2 442.7h0M503 444.2h0M504.8 446.7h0M505.3 444.6h0M506.6 443.2h0M509 444.5h0M509.7 446.3h0M522.5 445.2h0M531.1 441h0M531.2 440.2h0M533.5 445.4h0M533.6 442.6h0M535.2 447.6h0M538 446.1h0M539.6 448h0M541.5 446.3h0M545.5 442.2h0M550 441.9h0M550.1 440.8h0M554.7 443.6h0M555 443.4h0M558 445.6h0M558.8 443.9h0M559.2 444h0M560.6 447.5h0M560.8 446.1h0M562.8 444.1h0M564.9 445.1h0M566.5 440h0M569.5 441h0M577.1 443.5h0M579.6 445.6h0M579.6 442.3h0M580.5 441.9h0M581.6 440.9h0M582.3 445.9h0M583.2 444.8h0M583.8 443.2h0M584.2 440.2h0M584.3 441.4h0M584.9 440.7h0M586.3 444.4h0M586.9 445.5h0M586.9 441.4h0M589.6 441.6h0M589.7 444h0M590.1 441.3h0M590.7 446.4h0M590.7 442.7h0M590.9 442.9h0M591.8 442.9h0M591.9 443.3h0M592.2 446.2h0M594.8 445.4h0M605.4 440.5h0M607.5 441.5h0M608.2 445.6h0M633.1 447.6h0M633.7 440.1h0M636 443.8h0M637.2 441.1h0M637.8 441h0M638.2 444.7h0M639.2 441.4h0M639.7 443.5h0M646.5 441.1h0M647.6 442.6h0M648.7 442.4h0M651.9 443.3h0M653 440.6h0M661 441.7h0M665.5 447.8h0M667.2 440h0M669.3 442h0M670.5 440.3h0M672.2 446.3h0M673.1 440.1h0M674 442.7h0M674.5 444.9h0M674.9 444h0M676.1 447.9h0M688.3 440.9h0M690 440.9h0M697.5 442.2h0M706.3 442.3h0M708 446.5h0M708.3 441.4h0M708.8 445.7h0M709.5 444.7h0M711.7 446h0M711.9 443.5h0M712.3 440.7h0M712.7 444h0M713.9 446.6h0M714.5 447.1h0M715.6 443.4h0M726 440.6h0M728.5 448h0M734.3 440h0M738.9 443h0M761.6 440.8h0M762.4 442.1h0M765.5 447.2h0M767.3 440.3h0M769.2 443.3h0M775.2 442.4h0M776.3 443.9h0M779.3 446h0M786.9 447.7h0M790.9 447.9h0M791.8 445.4h0M794.1 446.9h0M798.1 447h0M816.7 441h0M818.8 444.7h0M820.9 441.2h0M822.6 444.9h0M825.4 443.1h0M828.9 444.9h0M843.9 446.2h0M846.5 440.1h0M849.8 444.9h0M851.2 445.9h0M859.5 442.1h0M861.6 445.4h0M865.3 441.9h0M875.1 447.5h0M876.1 441h0M880.5 444.1h0M896.2 440.4h0M899.3 443.4h0M906.2 440h0M908.7 444.6h0M911.3 440.3h0M913.2 444h0M913.5 447.6h0M915.3 446.1h0M930.4 440.9h0M934 441.8h0M937.9 445.8h0M939.7 442.5h0M939.7 447.7h0M940.5 442.5h0M943.8 446.6h0M944.8 443.9h0M946.8 443.8h0M946.9 444.7h0M954.7 447.8h0M963.4 440.8h0M967.2 442.9h0M973.2 443h0M974.7 445.8h0M975.1 440.8h0M976.5 441h0M978.1 445.2h0M980.6 444.9h0M983.6 444.5h0M985 444.8h0M985.1 441.7h0M985.9 440.5h0M989.4 446h0M1000.5 440.5h0M1004.2 442.7h0M1005.4 443.3h0M1006.9 440.6h0M1007.4 445.6h0M1013.2 443.4h0M1014 445.2h0M1017.8 446.3h0M418.4 451.7h0M419 448.9h0M421.3 451.9h0M422.5 448.9h0M427.7 450.4h0M429.4 454.9h0M430.3 449.6h0M433.2 451.9h0M439.3 451.8h0M440.4 452.9h0M440.5 451.8h0M441.2 451.4h0M442.1 448.7h0M447.1 448.2h0M464.2 449h0M464.3 451.8h0M465.2 454.2h0M465.7 451.9h0M466.3 449.8h0M466.8 448.6h0M467.2 454h0M467.3 450.3h0M468.6 455h0M468.8 455.8h0M469.6 453.2h0M470.9 454.1h0M471.8 449.9h0M473.1 450.9h0M473.8 455.1h0M474.7 452.5h0M476 451h0M477.4 455.8h0M481.1 448.5h0M485.5 450.1h0M486.2 454.2h0M497.3 448.1h0M497.9 451.3h0M502.3 454.3h0M503.7 450.7h0M504.8 453.1h0M505 455.1h0M512.3 448.5h0M515.2 452.3h0M528.3 449.8h0M532 452.7h0M535.8 454.4h0M541.4 450.6h0M542.2 453.2h0M543.5 452.5h0M544.3 451.4h0M558.4 448.5h0M562.1 449.7h0M563.4 449.4h0M563.5 451.6h0M564.7 449.1h0M565.3 448.9h0M566.4 450.2h0M566.7 449.8h0M567.1 450.2h0M569.9 450.3h0M570.6 452.3h0M571.9 454.4h0M574.4 451.7h0M583.2 448.4h0M584.3 448h0M585.2 451.1h0M585.6 453.8h0M586.5 449.6h0M588.5 455.5h0M593.8 449h0M600.6 450.4h0M605 451.9h0M607.5 455.7h0M608.2 454.2h0M609.7 452h0M609.8 449.8h0M609.9 448.8h0M611.9 454.8h0M616.3 449.8h0M619.4 448.8h0M620 452.6h0M626 454.5h0M652.6 448.6h0M653.5 453.3h0M657.9 452.2h0M657.9 450.3h0M660.4 454.4h0M660.7 450.6h0M661.3 454.6h0M667.4 455.2h0M669.6 453h0M672.4 451.8h0M674.8 453.2h0M675 455.4h0M676.2 451.6h0M676.3 452.9h0M678.4 450.6h0M678.8 452.3h0M678.9 450.4h0M679.7 452.2h0M680.9 451h0M680.9 454.5h0M682.2 452.4h0M683.7 454.1h0M683.7 448.6h0M684.4 454.4h0M685.5 450.5h0M688.7 454.5h0M706.3 454.2h0M708.6 455.1h0M709.5 450.8h0M715.1 449h0M716.1 448.4h0M719.6 450.5h0M722.6 452.3h0M723.5 448.3h0M724.6 455.8h0M726.4 453.7h0M730.4 454.7h0M730.6 450.9h0M731.6 449.7h0M732.4 448.8h0M733 455.7h0M733.7 451.3h0M737.6 451h0M742 453.1h0M744.6 453.4h0M747.1 455.9h0M753.5 450.8h0M755.3 449.2h0M758.3 448h0M758.8 453.8h0M758.9 451.1h0M761.7 450.7h0M763.2 450.3h0M763.6 454.2h0M769.9 450.5h0M770 455.2h0M778.6 452.5h0M778.7 453.7h0M779.1 448.7h0M780.1 449.9h0M781.9 452.9h0M784.7 448.5h0M788.3 449.2h0M789.6 452h0M790.3 455.7h0M791.4 448.7h0M794.2 449.8h0M795.6 450.8h0M800.8 452.6h0M808.9 451.6h0M809.5 450.5h0M811.3 454.3h0M811.4 451.8h0M823.7 448.7h0M827.9 452.1h0M830.3 454.7h0M831.3 455.2h0M833.2 450.4h0M836.3 455h0M838.5 456h0M849.6 449.4h0M854.4 451h0M854.6 449.4h0M855.6 455.7h0M857.7 455.3h0M858.7 452.2h0M860.6 453.5h0M865.8 453.6h0M869.1 455.5h0M874.1 450.3h0M875.3 453.3h0M877.7 451h0M879.1 453.9h0M880.4 450.3h0M881.2 455.7h0M882.8 451.2h0M914.7 455.1h0M917.9 449.2h0M924.4 455.4h0M927.1 449.8h0M928.6 455.9h0M931 454.5h0M931.1 452.1h0M931.2 449.7h0M936.5 449.3h0M937.4 454.5h0M937.5 455.7h0M945.1 449.8h0M947.4 450.7h0M949.9 448h0M950.6 449.6h0M952 450.1h0M953.8 453.7h0M954.2 454.2h0M956.8 450.1h0M959.4 450.6h0M966.8 448.2h0M968.9 451.1h0M970 453.6h0M972.2 451.9h0M980.4 448.2h0M983.8 449.6h0M988 451.7h0M993.5 449.6h0M1011.5 452.1h0M1011.8 454.7h0M1015.6 452.7h0M1016.1 452.8h0M1016.9 455h0M1017.8 454.5h0M1018 448.9h0M1020.9 451h0M1022.4 451.4h0M438.2 456.5h0M440.1 459.4h0M440.5 456.4h0M461.8 461.1h0M463.5 462.3h0M464.2 461.4h0M464.4 457.4h0M466.8 456.5h0M468.1 459.3h0M468.4 456.7h0M468.8 457.8h0M469.5 459.3h0M470 463.5h0M470.1 456.7h0M471.1 456.4h0M471.8 456.6h0M471.8 463h0M471.9 457.7h0M474.1 460.6h0M474.6 457.1h0M476 459h0M476.7 458h0M476.7 456.6h0M482.9 458.8h0M484.4 457.3h0M487.3 456.1h0M490.7 456.9h0M491.2 462.9h0M493 456.6h0M493.5 460.6h0M494.1 457.8h0M494.7 461.9h0M497 459.5h0M497.3 457h0M497.9 463.9h0M505.6 458.2h0M507.1 459.5h0M508.1 456.5h0M511.2 459.6h0M512.8 457.8h0M516.1 456.5h0M516.6 459.9h0M531.2 459h0M532.5 462.7h0M536.3 460.4h0M537.2 458.4h0M538.9 457.3h0M540.4 462.3h0M541.6 463.2h0M548.1 456.2h0M551 458.2h0M556.2 461.4h0M563.1 458.5h0M568.1 459.9h0M570.1 463h0M571.2 460.2h0M571.9 461.7h0M575.1 462.9h0M575.3 462.6h0M575.4 456.8h0M576.4 458.5h0M576.5 463.8h0M577.7 460.3h0M578.2 463.7h0M579 463.1h0M582.3 457.1h0M584.7 458.6h0M588.1 460.3h0M590 459.8h0M591 463h0M592.5 459.9h0M594.6 462.4h0M603.4 459.8h0M605.7 457.3h0M608.2 461.6h0M609.1 456.6h0M611.4 458.6h0M612.6 458.7h0M613.1 459.4h0M619.3 461.3h0M628.7 458.5h0M633.7 463.2h0M646.3 463.5h0M658.4 458.5h0M659.3 460.4h0M661.8 459.5h0M664.6 456.9h0M667.6 456.9h0M670.6 460.9h0M671.2 458.4h0M671.4 459.1h0M673.5 462.9h0M676.1 460.5h0M677.8 462.7h0M679.2 456.2h0M681.4 460.3h0M681.6 460h0M686.3 461.9h0M689.9 462.7h0M691.5 464h0M698.7 461.5h0M701.2 462.6h0M701.6 463.4h0M708.4 459.4h0M710.1 463.9h0M714.1 460.7h0M716.5 461.4h0M720.9 462.2h0M721.2 460.7h0M724.5 457.6h0M726.7 460.1h0M728.1 462.2h0M729.2 458.4h0M731.2 462.9h0M732 463.5h0M734.1 459h0M737.1 462h0M737.5 456.7h0M741.2 457.3h0M743.3 456.6h0M746 459.9h0M760.8 458h0M765.3 457.7h0M780.9 457.9h0M783.5 456.1h0M784.1 461h0M785.2 462.5h0M785.3 457.2h0M785.4 460.8h0M789.6 462.8h0M790.5 459.9h0M791.3 464h0M792.5 459.1h0M793.6 456.1h0M793.8 456h0M794.6 461.4h0M795 458.9h0M795.8 458.7h0M797.2 461.6h0M797.4 457.9h0M798.3 460h0M799.5 463.5h0M813.1 459.1h0M814.2 462.1h0M816.8 458.9h0M822.1 458.6h0M822.8 463.1h0M831 458.5h0M831.1 458.2h0M833 457.2h0M834.8 460.2h0M835.5 457.3h0M835.5 460.6h0M839.2 459.2h0M839.6 462.3h0M840.7 463.9h0M842 459.5h0M843 462.4h0M854.8 458.2h0M855.2 461.7h0M857.8 459.7h0M862.3 457.5h0M867.1 460.7h0M877.9 457.4h0M887.7 457.6h0M889.9 463.1h0M895.8 461.5h0M918.3 456.8h0M922.4 458.8h0M923.8 460.7h0M924.8 459.8h0M925 460.4h0M927.2 463.6h0M932.1 460.1h0M936.6 460.1h0M936.7 456.9h0M936.9 458.9h0M940.1 463.7h0M940.7 463.3h0M940.7 457.6h0M941.2 459h0M943.4 463h0M943.6 462.6h0M949.7 463.9h0M950.3 456.6h0M952.8 457.5h0M956.7 457.7h0M957.7 459.6h0M960.2 460.8h0M960.3 456.4h0M972.2 456.6h0M985.7 457.8h0M985.9 457.7h0M986.7 462.2h0M988.8 461h0M989.5 461.8h0M991.9 462.3h0M992.3 460.4h0M993.4 459.7h0M993.6 461h0M994.3 461.9h0M994.4 462.8h0M995.1 461.7h0M998.4 459.7h0M998.5 463.8h0M998.7 461.8h0M1015.6 456.2h0M1017.1 460.2h0M1021.1 456.7h0M1021.2 458.1h0M1023.2 460.6h0M1024.7 463.3h0M1025.7 459.2h0M1027.6 457.7h0M1028.2 462.9h0M1038.1 462.8h0M1041.3 459.7h0M1041.8 462.7h0M1044.4 460.6h0M1048.1 462.4h0M437.1 465.6h0M439.9 464.3h0M441.7 469.5h0M441.7 467.2h0M442.5 469.5h0M443.5 467.5h0M444.8 465.2h0M446.8 469.7h0M446.9 470.7h0M448.8 469.8h0M467.7 465.9h0M471.5 465.2h0M473.8 465.8h0M475.1 467.8h0M478.2 470.5h0M489.6 466.4h0M490.8 466.1h0M491.2 468.9h0M492.6 468.9h0M493.8 470.3h0M495.2 468.7h0M496.5 470.9h0M511.6 471.8h0M534.1 472h0M534.8 471h0M535.5 466.2h0M537.1 467.9h0M538.1 468.9h0M538.8 465.8h0M540 468.1h0M541.2 470.7h0M541.8 468.7h0M543.3 468.6h0M546.6 469.3h0M559.7 466.4h0M573 465.9h0M574.6 468.3h0M577.4 470.6h0M578.1 468.4h0M579.6 471.1h0M580.6 469.3h0M581.4 465.5h0M584.5 471.6h0M585.6 465h0M587.2 466.8h0M588.8 468.5h0M593.5 464.9h0M595.9 465.2h0M597.5 466.8h0M601.4 469.5h0M603.4 469.1h0M611.3 464.1h0M611.9 468h0M612.5 466.8h0M613.9 470.1h0M615.8 469.4h0M618.4 471.4h0M625.1 469.7h0M626 464h0M627.3 467.1h0M631.1 465.3h0M631.9 471.8h0M633.4 467.9h0M634.9 471.1h0M635 464.1h0M635.3 464h0M636.8 467h0M638.3 470.5h0M640.7 468.9h0M644.2 468.3h0M644.8 470.8h0M650.1 467.9h0M650.8 466.2h0M652.9 468.7h0M676.5 464.8h0M678.3 466.1h0M682.2 465.1h0M683.5 467.8h0M685 470.9h0M690.4 465.9h0M690.5 471h0M690.8 469h0M694.5 465.7h0M694.6 469.4h0M696.3 470.9h0M698.3 464.5h0M699.6 464.6h0M700.9 467.3h0M703.4 466.2h0M703.5 469.9h0M704.4 465.8h0M704.6 466.9h0M706.2 464.3h0M708.5 465.5h0M708.8 469.7h0M709 467.4h0M709.2 466.4h0M710 469h0M710.2 469.7h0M724.7 465.8h0M727.5 466h0M728 465.6h0M728.2 469.1h0M730.7 469.8h0M731.7 464.3h0M732.3 464.6h0M733.2 470.6h0M734.3 464.4h0M736.5 468.6h0M737.8 465.6h0M738.2 471.2h0M743.1 467.6h0M743.8 470.8h0M748.5 470.3h0M755.8 470.6h0M756.6 470.6h0M786.6 465.6h0M787.8 464.4h0M790.6 466.7h0M796.3 467.6h0M798.5 467.8h0M798.6 471.5h0M799.4 469.1h0M803.1 471.7h0M809.3 471.6h0M818 464.8h0M834.8 467h0M837.3 468.5h0M840.4 471.4h0M842.4 466.4h0M843.1 467h0M850.6 469.9h0M892.1 464.9h0M893.7 466.9h0M898.3 468.3h0M899.2 464.4h0M900.1 470.6h0M900.8 465.8h0M929.8 467.4h0M945.7 470.6h0M947.2 468.7h0M949.1 470.7h0M949.5 468.6h0M961 469.2h0M965.6 466.8h0M966.5 470.9h0M974.7 471.7h0M982.9 468.2h0M983.3 465.5h0M988.2 466.8h0M988.6 470.1h0M990.4 470.7h0M990.6 465.4h0M991.1 464.9h0M992.3 467.3h0M992.5 464.6h0M993.4 471.8h0M995.7 465.8h0M997.5 469.9h0M997.6 465h0M998.4 469.3h0M1000.1 466h0M1001.2 468.7h0M1003.5 464.2h0M1005.1 467.8h0M1005.5 468.3h0M1011.5 465.7h0M1014.2 468.7h0M1018.6 472h0M1019.1 464.7h0M1020.8 468h0M1027.2 464.1h0M1027.7 466.5h0M1029.9 465.4h0M1032.4 471.4h0M1032.8 472h0M1047.2 469.2h0M1049.9 470.4h0M1050.2 466h0M441.2 473.5h0M445 472.2h0M448.1 478.6h0M448.6 475.1h0M450.6 475.1h0M450.7 473.1h0M454 477.7h0M467.7 476.7h0M470.7 477.5h0M472.8 478.5h0M475.1 478h0M475.3 478.3h0M478.5 478.3h0M480.3 478.5h0M486 477h0M489.3 475.3h0M489.9 475.9h0M495.9 472.3h0M497.1 473.1h0M498.5 474.8h0M509.6 478.5h0M512.6 479h0M514 475h0M517.7 475h0M521.1 478.7h0M532.2 474.4h0M533.3 475.4h0M537.4 474.5h0M538 476.1h0M539.7 477.4h0M540.1 474.2h0M541.5 473.1h0M544.3 472.6h0M544.8 474.1h0M546 477.4h0M546.3 476.3h0M546.6 478.4h0M564.6 477.4h0M567.9 478h0M574.5 477.7h0M575.7 474.6h0M576.3 473.7h0M578.1 479.1h0M586.9 476.3h0M619.3 473.2h0M619.9 474.6h0M622.7 474h0M623.1 478.6h0M624 475h0M626.1 472.7h0M627.9 478.4h0M628.4 474.4h0M628.6 475.7h0M631.1 478.4h0M632.1 478.1h0M633.7 473.3h0M634.7 479.5h0M636.7 476.5h0M637.7 475.3h0M638 472.5h0M639.3 473.7h0M641.2 473.1h0M643.5 478.8h0M661.8 474h0M664.5 478h0M668.5 479.4h0M686.4 472.7h0M700.1 472.7h0M705.8 473.7h0M706 475.6h0M710.6 472.1h0M710.7 473.2h0M716.4 472.3h0M719.5 478.7h0M731 473.9h0M733.5 477.2h0M734.5 478.6h0M736.4 475.1h0M738.1 472.5h0M738.7 478.5h0M740.2 476.6h0M740.8 474.7h0M741.4 475.5h0M743.9 476.4h0M746.6 474.1h0M750.3 472.2h0M750.5 476.7h0M751.3 476.8h0M753.1 476.2h0M755.3 473.5h0M755.6 478.2h0M759.5 477.4h0M759.8 475.1h0M760.2 476.2h0M763.3 474h0M763.7 474.5h0M763.7 478.7h0M765 478.8h0M767.3 476.5h0M773.2 479h0M778.2 476h0M780.7 479.9h0M789.1 478.7h0M790.3 474.5h0M791.1 479.8h0M792 476.4h0M802.6 476.7h0M805 476.7h0M812.2 475.3h0M812.8 475.2h0M814.1 479.1h0M815.6 473.3h0M815.7 478.5h0M819.2 479.5h0M838.2 472h0M840.1 474.3h0M842.6 474h0M855.7 473.3h0M860.8 478.1h0M863.1 477h0M867.5 477.4h0M869.2 479.5h0M950.3 472.2h0M963.2 476.5h0M963.2 474.3h0M965 475.3h0M965.3 479.6h0M966.2 474.6h0M966.9 478.5h0M967.1 478.3h0M967.8 477.2h0M968.4 478h0M970.2 475h0M971.4 479h0M971.8 479.3h0M972 476.2h0M975.1 473.3h0M979.4 474.5h0M985.5 478.5h0M986.4 472.8h0M1005.1 475.6h0M1009.7 479.8h0M1012.8 478.1h0M1019.1 473.4h0M1024.9 475h0M1026.4 476.3h0M1027.7 475.8h0M1029.7 477.5h0M1033.3 473.5h0M1034.8 478.2h0M1035.6 473.5h0M1037.7 477.3h0M1037.7 476.1h0M1038.6 475.3h0M1040.7 479.6h0M477.5 480.7h0M506.8 482.3h0M511.8 482.5h0M511.8 482.2h0M513.8 486.5h0M515.1 481.1h0M515.3 485.4h0M516.3 483.6h0M516.4 488h0M531.6 488h0M541.3 484.4h0M542.2 481.2h0M546.7 481.2h0M550.4 480.3h0M552.3 485.5h0M567.4 482.7h0M568 481.2h0M569.5 485.4h0M569.9 480.1h0M571.6 488h0M571.7 481.1h0M572.2 487.6h0M572.9 480.5h0M572.9 481.4h0M572.9 482.9h0M573.1 484h0M573.1 485.7h0M574 482.5h0M574.6 483.1h0M574.6 487.8h0M575.4 483h0M575.6 487.4h0M576.5 487.7h0M576.7 480.5h0M576.7 485.3h0M576.9 483.1h0M578.8 484.7h0M579.1 487.6h0M580 485.8h0M580.3 485.3h0M581 486.4h0M583.2 483.9h0M584.3 486.3h0M586.1 487.4h0M588.6 487.5h0M598.5 480.2h0M602.4 483.2h0M603.3 484.4h0M604 482.5h0M604.3 484.1h0M605 482.1h0M605.7 486.9h0M607 485.3h0M609.4 481.1h0M623.6 481.3h0M624.2 484.9h0M636.5 483.2h0M637.5 486.1h0M640.8 483.2h0M642.8 480.8h0M643.1 484.4h0M644.1 486.8h0M645.4 485.3h0M649 485h0M671.8 482.3h0M715.5 483.4h0M718.7 484.3h0M720.4 488h0M722.1 480.2h0M725.2 481.5h0M727.7 484.8h0M738.8 482.7h0M740.9 485.3h0M741 482.7h0M741.5 484.3h0M745 480.6h0M749.8 480.4h0M751.7 481h0M755.1 480.5h0M755.3 481.4h0M756.9 485.5h0M759 480.4h0M760.2 481.2h0M760.6 484h0M765.1 480.8h0M766 485.9h0M770.2 481.9h0M774.6 487h0M776.1 480.4h0M777.7 485.1h0M780.7 482.5h0M796.4 486.5h0M807.7 481.8h0M809.1 482.9h0M811.9 487.1h0M812.9 481.3h0M818.2 487h0M818.4 483.5h0M818.4 487.7h0M820.1 485.8h0M825.6 484.6h0M827.4 484.2h0M838.2 483.3h0M842.6 486.2h0M843.4 486.4h0M863.2 480.7h0M864.8 480.9h0M865.7 483.9h0M867.3 483.4h0M868.3 487.2h0M869.8 484.8h0M879.5 485.8h0M881.6 486.4h0M912.7 484.9h0M916.4 487.7h0M960.4 483.4h0M965.4 486.1h0M973 484.6h0M979.5 486.8h0M981.9 482h0M984.7 485.9h0M985.7 481.1h0M985.9 480.2h0M987.5 484.5h0M991.8 487.8h0M1005.6 480.7h0M1011.3 485.2h0M1013.6 487.4h0M1014.4 482.6h0M1018.9 480.4h0M1036.9 484.1h0M1039.7 486.3h0M1041.2 483.2h0M1044.9 486.1h0M471.4 490.9h0M473.1 492.3h0M475.6 492.9h0M483.4 491.1h0M486.9 493.9h0M490.7 494.6h0M494 495.2h0M495.6 493.7h0M496.9 492.6h0M498 493.6h0M499.4 495.2h0M499.7 488.8h0M503.1 492.4h0M506.4 495.2h0M516.4 492.9h0M518.9 491.8h0M521 488.2h0M529.6 492.2h0M531.7 493.6h0M533.9 492.6h0M534.9 496h0M536.1 489.5h0M539.1 494.5h0M552.2 489.1h0M555.9 494h0M556 489.1h0M558.3 495.1h0M559.3 490.8h0M564.5 493.3h0M569.9 488.6h0M571.5 490.9h0M573.1 491.4h0M575 493.7h0M575.7 490.5h0M575.9 490h0M577.4 489.7h0M577.5 489.7h0M578 488.7h0M579.2 490.6h0M579.3 494.9h0M579.6 488.4h0M581.4 489.9h0M581.5 491.1h0M583.2 488.6h0M583.3 490.2h0M583.7 492.4h0M584.5 494.4h0M584.8 492.2h0M584.8 493.2h0M585.2 491h0M585.6 488.2h0M586.8 495.1h0M586.8 491.7h0M587.5 493.3h0M588.1 494.3h0M588.6 495.7h0M590.5 492.2h0M594.7 492.6h0M594.7 491.3h0M594.9 492.3h0M595 495.9h0M596 495h0M596.2 495.7h0M600.2 489.3h0M603 491.1h0M609.2 488.8h0M618 491.5h0M619.5 493.3h0M624 494.5h0M627.7 488.2h0M641.6 489.8h0M643 488.1h0M644.1 491.9h0M644.6 488.5h0M657.9 492.7h0M665.7 488.5h0M666.1 495.6h0M666.4 492.1h0M689.9 495.2h0M694.1 493.1h0M713.9 488.2h0M718.7 489.4h0M718.7 494.1h0M718.9 491.5h0M718.9 493.7h0M721 490.3h0M722.6 494.9h0M722.8 495.4h0M723.5 494.1h0M723.5 491.5h0M724 489.3h0M725.3 491.8h0M728.3 494.8h0M731.5 493.2h0M732.5 495.4h0M745.4 493.5h0M746.3 492.1h0M747.9 495.9h0M749.2 495.8h0M766.1 494.4h0M766.4 489.9h0M766.9 493h0M768.9 492h0M776.2 488h0M795.8 488.9h0M796.2 492.7h0M799.3 495.4h0M803.8 490.3h0M804.2 492.7h0M805.7 489.7h0M806.1 493.2h0M808.8 488.9h0M823.3 492h0M826.7 494.4h0M827.5 488.8h0M828.4 488.4h0M834.9 488.4h0M835.5 495.8h0M836.4 495.6h0M837.9 490.8h0M840 494h0M841.6 494.5h0M843.8 494.4h0M847.3 488.3h0M857 492.9h0M872.3 490h0M892 490h0M906.9 489.6h0M911.9 493.7h0M912 495h0M919.8 489.2h0M922.7 491.4h0M970.2 490h0M970.4 489h0M971.4 488.8h0M972.3 493.7h0M976.9 493.5h0M980.2 493.9h0M980.5 495.8h0M981.1 493.1h0M981.3 493.6h0M981.5 493.2h0M983.6 490.7h0M985.2 492.8h0M986 495.5h0M990.3 494.9h0M991.3 494.2h0M994.1 488.4h0M997.1 491.7h0M1000.8 495.6h0M1000.9 492.2h0M1003 495.2h0M1008.9 492h0M1011.7 488.1h0M1014 494h0M1017.1 488.1h0M1020.7 493.7h0M1023.7 494.7h0M1027.8 488.9h0M1028.8 491.8h0M1030.2 490.9h0M1030.9 493.4h0M1032.3 491.1h0M484.8 500.5h0M484.9 499.2h0M485 499.9h0M487.5 501h0M488.6 501.3h0M489.9 501.6h0M490.4 499.5h0M493.7 502.6h0M495.3 501.6h0M495.8 501.7h0M497.2 502.5h0M498.4 498.8h0M498.7 496.6h0M498.8 503.1h0M500.9 501.5h0M501.6 496.4h0M501.7 503.1h0M503.3 500.3h0M505 501.3h0M512.6 498.2h0M524.9 502.9h0M532.2 496.5h0M533.2 497.5h0M536.3 499.5h0M537.4 497.1h0M538.4 503.4h0M538.7 496.7h0M540.2 502.2h0M540.5 497.3h0M540.7 496.5h0M542.2 497h0M542.6 498.4h0M542.8 496.3h0M545.1 499.9h0M545.9 502.5h0M546.2 502.7h0M548.8 503.7h0M549 496.7h0M549.3 503.5h0M551 499.8h0M551.5 503.2h0M551.8 500.2h0M552.6 498.3h0M556.1 502.1h0M562.9 497h0M566.7 499.3h0M576.8 497h0M581.1 500.3h0M588.1 501.3h0M588.7 498.7h0M590.2 497.3h0M591.8 503.6h0M591.8 498.5h0M592.9 501.5h0M595.7 498.4h0M595.9 500.7h0M598 496.7h0M599 499.9h0M599.9 498.9h0M600.7 497.7h0M621.4 498.1h0M624.6 503.1h0M624.8 500.7h0M629.2 502.8h0M659.9 498.8h0M692.6 497.5h0M694.2 499.5h0M695.6 500.8h0M698.8 503.9h0M719.3 498h0M721.5 496.9h0M722.5 498.4h0M723.2 498.2h0M724.6 496.7h0M726.2 498.2h0M727.1 500.6h0M728.2 501.2h0M728.3 498.1h0M732.2 503.9h0M734.7 497.6h0M737.5 496.5h0M740.8 500.6h0M740.9 498.6h0M743.1 498.2h0M745.5 501.8h0M747.7 503.6h0M747.9 498h0M751.4 498.4h0M751.4 499.9h0M752.8 502.4h0M753.1 499.4h0M755.2 499.4h0M756.8 503h0M759.1 499.2h0M766.9 496.4h0M770.7 496.5h0M770.9 497.6h0M771.6 498h0M772.9 502.1h0M776.6 501.9h0M781.2 503h0M782.1 498h0M799.5 497.6h0M804.7 497.6h0M805.3 497.3h0M808.7 500.7h0M822 499.9h0M824 502h0M826.2 503.6h0M829.7 496.3h0M832.9 502h0M833.9 502.1h0M834 496.8h0M836 503.3h0M836.7 498.1h0M838 501.1h0M840.2 501.4h0M841.3 500.7h0M841.3 498h0M841.5 501.5h0M843.2 503h0M843.5 503.2h0M843.8 503.6h0M844 496.2h0M849.1 497.9h0M850.5 501.2h0M863 500.9h0M879.4 499.6h0M893.8 502.7h0M896.9 502.5h0M917.6 497.3h0M924.8 501.3h0M942.8 497.7h0M948.6 496.8h0M950.1 496.2h0M954.3 500.9h0M956.6 503h0M967.3 499.8h0M967.9 501.2h0M968.1 499.1h0M968.3 500.9h0M972.2 501.1h0M974.5 502.7h0M978.3 499.6h0M981.3 500h0M982.6 496.6h0M982.6 496.6h0M983.5 496.3h0M984 503.1h0M984.4 499.6h0M984.8 496.4h0M988.4 496.5h0M989.9 498.3h0M991.6 497.8h0M992.5 497.3h0M997.5 497h0M1004.4 498h0M1008.9 499.1h0M1012.2 503.9h0M1015.7 501.2h0M1017.2 496.1h0M1017.7 503.6h0M1019.2 503.4h0M1020.5 498.6h0M1023.8 502.1h0M1027.2 498.5h0M501.9 504.6h0M502.1 506.8h0M502.5 504.5h0M507.6 506h0M508.1 509.8h0M510.5 506.6h0M514.7 508.5h0M523 506.9h0M524.2 510.7h0M527.7 506.1h0M529.9 505.3h0M540.1 505.5h0M542.1 510.6h0M544.2 505.7h0M549.2 508.4h0M549.7 508.8h0M551.5 509.1h0M551.6 506.6h0M554 505.2h0M556.1 511.6h0M556.9 506.9h0M557.1 506h0M557.3 505.2h0M559 508.8h0M560 511.1h0M560.2 509.3h0M581.7 505.6h0M589 507.9h0M595 508.4h0M595.5 510.9h0M596.1 509.2h0M598.4 505.3h0M600.3 506h0M602.2 510.7h0M605.2 510.3h0M618 505.1h0M622 510.2h0M623.7 511.2h0M628.3 504.4h0M629.2 507.4h0M631.2 506.2h0M633.9 507.6h0M634.9 504.3h0M638.3 504.5h0M642.3 506.3h0M644.4 508.7h0M665 508.5h0M669.3 511.6h0M722 508.5h0M738 505.5h0M739.9 508.5h0M742 508.8h0M743.8 510.5h0M744.7 509.4h0M744.8 504.8h0M745 505.2h0M747 507.3h0M747.6 507.2h0M747.6 511.3h0M747.8 508.1h0M749 507h0M749.4 508.5h0M750.5 506.7h0M756.2 506.4h0M756.4 505.8h0M757.2 509.7h0M758 505.1h0M759.2 508.5h0M761.6 508.3h0M762 510.5h0M776.1 504.9h0M777.1 511.7h0M779.6 506.4h0M786.4 507.1h0M792.1 511.3h0M795.1 511.9h0M809.9 504.8h0M810.4 509.3h0M811.1 505.8h0M812.1 506.4h0M814 508.2h0M816.4 510.1h0M820.2 507.4h0M821.4 508.3h0M827.3 506.1h0M828.5 504.1h0M830.1 505.9h0M831.8 507.1h0M833.6 506.7h0M835.3 509.3h0M836.1 511.4h0M846.1 504.5h0M848.1 505.1h0M848.9 510h0M866.2 504.4h0M869 506.4h0M873 507.6h0M873.6 511.3h0M875.1 506.5h0M880.1 508.7h0M923.5 506.3h0M924.8 508h0M928.9 505.3h0M964.6 505.2h0M965.4 507.4h0M968.1 508h0M968.9 510.8h0M970.8 511.2h0M971.9 509.5h0M973.2 505.1h0M975 510.4h0M976.1 511.2h0M976.4 505.9h0M976.6 507.7h0M976.8 504.9h0M978.8 506.5h0M980.4 511.6h0M980.4 507.3h0M981.1 508.8h0M983.1 507.5h0M983.9 504.6h0M986.3 511.7h0M986.4 506h0M989.4 509.2h0M990.1 504.4h0M990.3 510.9h0M990.8 509.9h0M993.4 506.3h0M994.4 507.1h0M995.8 511.4h0M997.3 510.8h0M1007.8 509h0M1009.6 511.3h0M1020.8 505.1h0M1022.1 504.7h0M1023.3 508h0M1026.7 504.4h0M511.5 512.2h0M516.3 516.8h0M518.5 514.9h0M520.2 518.8h0M520.8 518.2h0M521.2 514.9h0M521.7 513.7h0M523.7 517h0M524.4 518.6h0M525.5 516.3h0M525.6 512.3h0M527 515.7h0M528.6 518.7h0M529.5 516.5h0M530.1 518.4h0M530.6 517.7h0M532.2 518.3h0M543.5 512.6h0M544.9 517.2h0M557 512.2h0M557.4 514.4h0M559 514.8h0M559.4 516.4h0M559.5 514.6h0M561.2 517.9h0M561.3 516h0M561.5 512.5h0M561.5 518h0M562 514.2h0M562.6 515.4h0M563.9 517.5h0M570 516.7h0M572.6 518.7h0M577.5 513.5h0M591.9 512.5h0M592.9 518.6h0M593.4 514.9h0M594.5 515.2h0M594.9 519h0M597.5 512.6h0M598 512.8h0M599.2 512.5h0M599.8 514h0M600.5 517.8h0M602.8 514.5h0M604.1 513.5h0M604.9 515.9h0M606 512.2h0M617.7 512.7h0M622.2 513.6h0M624.1 516.2h0M626 518.4h0M628 519h0M628.2 512.9h0M628.8 515.6h0M629.4 516.1h0M632.9 516.5h0M636 518.1h0M637.9 519.4h0M641.6 519.7h0M670.1 515.9h0M695.2 519.5h0M715.9 519.6h0M717.4 512.3h0M718.8 517.4h0M719.4 518.3h0M720.2 517.1h0M721.6 514.9h0M723.6 517h0M724 518.6h0M724.3 518.4h0M726.9 519.2h0M728.1 514.7h0M729.6 518.3h0M751.3 513.1h0M762.8 512.8h0M762.9 519.7h0M764.8 513.1h0M767.3 512.9h0M768.3 514.6h0M769 518h0M769.7 516.9h0M774.6 519.9h0M775 513.1h0M786.5 516.8h0M787.9 513.1h0M789.1 513.2h0M790.9 517.6h0M792.9 515.8h0M792.9 513.3h0M794.7 519.8h0M796 516.8h0M796.1 516.2h0M799.7 515.9h0M813.8 512.8h0M825.2 512.2h0M829 514h0M829.8 516.8h0M837.4 512.9h0M850.3 513.1h0M851.6 513.6h0M852.8 516h0M855.4 519.4h0M855.6 513.8h0M860 520h0M860.1 515.8h0M874.9 513.6h0M887.8 516.3h0M890.9 518.8h0M917.2 516.4h0M972.6 517.4h0M976.6 517h0M978.5 513.4h0M979.2 516.3h0M980.8 512.1h0M982.5 518.1h0M983.5 514.1h0M985.8 515.1h0M990.7 513.1h0M992.6 515h0M994.2 520h0M995.4 514.9h0M996.6 515h0M1000.4 516.2h0M1001 517.9h0M1012.6 514.1h0M1014.5 516.7h0M1015.2 515.4h0M1023.4 519.7h0M522.6 520.1h0M525.4 520.7h0M525.7 522h0M527.9 526.7h0M529.5 524.3h0M529.5 527.9h0M529.7 521.9h0M530.1 526.3h0M531.9 521.7h0M533.1 523h0M533.7 521.5h0M533.8 524.6h0M534.1 523.6h0M534.5 527.9h0M534.6 520.4h0M540 525.9h0M543 521.1h0M544.9 526.6h0M555.5 522.1h0M556.9 524.2h0M561.6 522.8h0M562.7 524.2h0M563.3 526.4h0M564.7 520.7h0M565 522h0M565.9 525.8h0M566 525.5h0M566.2 524.4h0M566.3 520.4h0M566.6 528h0M567.3 520.7h0M567.8 527.4h0M569.3 525h0M578.8 525h0M581 527.6h0M596.9 522.1h0M597.6 523.2h0M600.2 526.7h0M600.4 523.1h0M615.8 526.1h0M618.5 527.8h0M634 522.4h0M639.2 526.2h0M640.7 524.4h0M641.2 520.9h0M645.4 523.2h0M646 525.9h0M650 524h0M670.6 520.4h0M674.7 521.1h0M692 520.9h0M698.2 525.4h0M699.4 522.9h0M701.4 527.5h0M702 527h0M707 524.5h0M718.8 522.8h0M719.5 524.1h0M721.1 523.2h0M726.6 522.6h0M729.4 524.6h0M729.7 523h0M751.6 523.2h0M766.7 520.5h0M768.2 527.8h0M770.3 521.9h0M770.6 525.3h0M776 527h0M777.5 523.3h0M778.8 521.9h0M779.1 520.6h0M779.5 526.5h0M780.9 522.8h0M781.5 526.7h0M791.5 527.5h0M791.6 520.7h0M794.4 524.3h0M794.7 527.4h0M795.6 521.3h0M796.3 527.6h0M797.5 527.6h0M798.2 524.3h0M800.6 525.1h0M802.2 526.5h0M834.6 520.6h0M857.9 521.5h0M861 527.3h0M874 527.9h0M893.7 520.9h0M918.5 520.7h0M923.1 522.1h0M925.1 525.8h0M941 521.1h0M944.8 526.8h0M944.8 525.3h0M964.4 527.9h0M964.7 526.1h0M965.1 526.8h0M975.7 521h0M996.2 520.3h0M996.6 525h0M997.2 524.5h0M997.5 520.4h0M998 527.7h0M1000.2 521.1h0M1000.4 523.8h0M1003 526h0M1003.8 521.5h0M1007.5 526.4h0M1020 526.9h0M1021.4 522.4h0M1021.8 523.7h0M1022.4 526.6h0M1022.9 524.4h0M1028.3 522.9h0M1028.8 527.8h0M544.9 535.7h0M545 532.8h0M557.3 532.3h0M561.6 534.7h0M562.7 529.2h0M563.2 534.2h0M564.2 532.6h0M566.1 532.2h0M566.7 534.9h0M567 534.4h0M567.4 535.1h0M568.6 528.4h0M568.7 534.3h0M568.7 529.5h0M570.2 533.5h0M570.4 529.4h0M570.4 530.1h0M572 528.9h0M572.4 532.6h0M572.9 534.2h0M574.9 535h0M575.8 534.6h0M577.6 534.2h0M578.2 528.4h0M581.8 531.8h0M583 534.6h0M585.3 533.5h0M590.6 534.4h0M601.3 531.4h0M605.2 534.7h0M619 535.4h0M621.6 529.3h0M622.4 533.5h0M623.9 532.9h0M643 529.8h0M644.8 528.8h0M646.3 528.3h0M693.4 533.5h0M704.6 528.5h0M704.6 529.3h0M727.1 535.3h0M730 531.1h0M757.4 531.7h0M758.6 531.9h0M760.1 534.6h0M760.7 530.4h0M761.5 533.9h0M761.9 535h0M763.2 535.3h0M764.5 535.3h0M765.8 533.8h0M768.8 529.2h0M772.6 530.6h0M772.9 532.9h0M775.7 535.8h0M777.9 534.7h0M786.4 529.1h0M803.3 528.4h0M804 528h0M805.3 531.5h0M807.4 530.4h0M808.5 532.7h0M811.9 529h0M814.5 530.5h0M818.7 533.4h0M855.6 528.2h0M859.4 531.4h0M862.6 531.2h0M863.9 534.6h0M867.2 533.8h0M868.1 535.2h0M869 533h0M875.7 531.9h0M876 530.2h0M878.2 531.2h0M880.3 534.3h0M922.5 530h0M924.1 531.3h0M929.1 534.5h0M948.3 531.3h0M959.3 532.6h0M960.4 532.2h0M960.7 534h0M962.9 528.6h0M963.7 535.3h0M965.4 531.4h0M966.4 531h0M967 533h0M967.4 532.1h0M967.6 529.3h0M967.7 535.1h0M967.8 529.3h0M972.1 531.1h0M995.2 534.3h0M999.3 530h0M1000 534.7h0M1000.8 531.1h0M1003.1 528.6h0M1006.7 530.6h0M1022.5 528.4h0M1030.5 534.7h0M1031.1 528.4h0M1034.1 531.7h0M531.1 538.3h0M536.3 541.8h0M538.9 539.9h0M563.4 537.8h0M564.2 537.3h0M567.5 539.1h0M568 539.2h0M568.6 537.2h0M570.6 542.7h0M571.7 538.5h0M571.9 537.3h0M582.6 536.9h0M590.4 539.4h0M594.1 537.2h0M594.6 539.5h0M596.8 536.5h0M596.8 541h0M597.6 537.9h0M598.2 537.5h0M600.3 539.2h0M600.6 538h0M601.7 542.5h0M602.4 541.4h0M602.9 543.9h0M602.9 541h0M603 543.9h0M605.3 542.8h0M605.4 543.4h0M607.1 536.8h0M609.9 543.3h0M612.1 543h0M620.5 538.2h0M623.3 540.9h0M624 536.4h0M626.6 537.7h0M628.6 538.9h0M630.5 539.5h0M631.9 544h0M644.7 543.2h0M647.1 543.2h0M648.4 543.2h0M667.8 537.8h0M669.3 543.9h0M710.1 539.8h0M715.5 543.1h0M716.2 543.6h0M721.1 537.9h0M723.7 540.9h0M723.8 542.3h0M730.2 538h0M733 538.3h0M733.3 536.8h0M737.7 537.9h0M741.8 538.8h0M755.9 537.8h0M756.8 538.4h0M758 539.9h0M764 537.5h0M764.3 539.7h0M766.2 539h0M779.9 537.7h0M781.7 541.7h0M782.5 536.8h0M784.5 540.5h0M786.2 542.2h0M787.2 543.7h0M810.5 540.9h0M810.9 536.2h0M811.1 536.9h0M812.7 540.4h0M813.2 542.3h0M813.5 542.9h0M814.8 536.2h0M816.2 537.6h0M816.2 543.4h0M817.3 537.3h0M818.3 538h0M818.9 536.2h0M819.5 542.8h0M820.2 539h0M820.9 537.6h0M821.7 541.9h0M822.5 542.4h0M823.1 536.3h0M824.1 538.7h0M824.6 540.5h0M824.8 538.1h0M825.7 541.1h0M826.7 543.5h0M827 543.8h0M830.3 543.1h0M834.9 543.6h0M846.9 537.3h0M866 537.6h0M868.9 537.2h0M872.3 537.4h0M881.1 539.2h0M881.3 539.3h0M883 543.4h0M920.1 542.5h0M964.5 536.3h0M965.9 538h0M967 538.2h0M968.2 542.9h0M968.9 541.8h0M972.6 541.9h0M977.4 537h0M980.6 538.2h0M993.8 536h0M994.1 538.2h0M997.1 537.6h0M998 539.8h0M999.9 540.8h0M1011.8 541.3h0M1025 537.3h0M1035.3 536.1h0M1035.3 537.1h0M544.1 546.2h0M554.8 549.8h0M570.3 544.7h0M573 548.2h0M573.3 550.8h0M574.1 544h0M606.9 545.9h0M607.6 546.5h0M608 548.4h0M610.2 551.9h0M612.1 550.4h0M612.4 546.4h0M613.3 545h0M613.9 551h0M616.2 548.2h0M617.4 550h0M618.2 547.7h0M620.2 550.2h0M626.6 546h0M629.8 548.5h0M635.6 546.6h0M635.8 547h0M636.7 547.9h0M637.5 548.2h0M638.6 545.8h0M639.8 544.4h0M640.6 551.1h0M641.5 546h0M643 548.6h0M644.2 548.6h0M646.3 548.1h0M650.2 547.7h0M652.8 549.5h0M681.7 547.5h0M700.4 549.4h0M714.2 546.6h0M717.2 547.6h0M720.2 551.4h0M728.4 547.4h0M730.8 549.5h0M736.2 547h0M737 546.4h0M739.6 549.9h0M756.5 547.8h0M760.7 551.4h0M768.4 544.9h0M770.4 549h0M773.1 551.6h0M787.4 546h0M788.5 546.1h0M790 547h0M794.8 548.8h0M800.4 548.1h0M800.6 549.7h0M816 546.1h0M816.2 547h0M816.6 549h0M818 546.9h0M824.5 545.8h0M829 547.5h0M829.6 548.1h0M833.1 545.5h0M838.4 544.8h0M838.9 547.3h0M841.4 550.6h0M841.7 549.5h0M861.6 551.6h0M873 544.2h0M876.9 548.4h0M901.5 551h0M907.7 551.1h0M930.5 545.2h0M948.3 547.2h0M969.5 547.8h0M970.9 544.1h0M971.7 544.5h0M972 544.9h0M972.6 550.6h0M974.6 551h0M977.4 550.3h0M978.3 550.2h0M568 557.8h0M576.9 556.1h0M579.4 557h0M582.2 559h0M592.3 554.2h0M594.3 557.7h0M614.4 552.1h0M615.7 552.1h0M619 556.5h0M632.8 552.6h0M634.9 555.6h0M643.6 554.3h0M649.7 556.7h0M650.9 557.1h0M650.9 553.2h0M690.1 556h0M770.3 556.4h0M772.6 552.2h0M774.4 557.2h0M791.7 556.8h0M794.2 554.6h0M794.9 552.2h0M795.9 555.5h0M795.9 557.1h0M796.8 557.7h0M797.7 553.1h0M798.1 554.8h0M798.1 553.4h0M798.5 556.4h0M799 557.8h0M799.4 553.5h0M800.1 559.7h0M800.1 557.2h0M801.1 558.9h0M802.2 554h0M802.6 559.6h0M803 554h0M821.4 552.2h0M825.8 554.1h0M829 554.7h0M835.8 554h0M837.3 553.6h0M838.5 557h0M840.4 558.8h0M840.5 553.3h0M841.4 556.4h0M841.6 557.8h0M841.7 558.4h0M842 552.8h0M844.8 556h0M844.9 557.3h0M845 559.6h0M845.3 555.8h0M847.3 556.9h0M864.4 557.6h0M865.9 559.3h0M887.1 554.7h0M889.6 559.8h0M896.7 559.5h0M902 554.8h0M907.8 552.2h0M961.6 558.8h0M971 552h0M972.8 556h0M975.7 556.8h0M976.7 558h0M976.7 552.3h0M977.8 559.8h0M581.5 563h0M585 562.1h0M585.6 566.3h0M587.7 564.3h0M588.3 564.5h0M634 563.2h0M636.4 565.6h0M639.8 567.6h0M656.2 564.4h0M657.7 565.9h0M767.8 567.1h0M772.1 560.4h0M773.5 564.8h0M796.6 560.4h0M798.1 563.5h0M798.4 566.4h0M800.5 566.5h0M801.6 565.5h0M802.3 562.2h0M828.3 563.2h0M838.5 562.4h0M843 561.3h0M843.3 562.1h0M845.1 567.6h0M845.5 563.3h0M845.9 564.6h0M846.3 567.2h0M863.3 564.5h0M867.1 567.4h0M869 560.6h0M872.6 562.1h0M879.1 566.8h0M904.1 563.7h0M906.3 566.3h0M921.6 563.5h0M941.2 563.6h0M942.3 566.9h0M943.3 567.4h0M949.1 565.2h0M952.3 567.9h0M968.7 566.1h0M973.6 567.8h0M588.2 571.4h0M592 572.1h0M599.6 575.8h0M600.4 571h0M604.3 573.6h0M640.4 572.2h0M641.6 574.2h0M642.1 569.8h0M644 572.7h0M646.1 569.7h0M647.3 570.1h0M648 572.9h0M649.5 575.3h0M649.6 575.5h0M770 570.7h0M771.8 574.7h0M797.2 571.4h0M799.1 573.9h0M800.7 575.8h0M802.8 570.9h0M804.7 572.1h0M807 574.7h0M814.1 574.6h0M819.2 574.3h0M819.3 571.8h0M838.4 568.7h0M839.7 569.8h0M842.5 570.6h0M843.5 570.6h0M843.8 572.7h0M847.1 570.9h0M851.1 569.3h0M852.5 571h0M859.9 568.8h0M861.2 568.1h0M862.7 571.9h0M864.7 571.6h0M865.6 574.7h0M868.6 576h0M870.5 570.5h0M875.5 573.3h0M881.5 570.9h0M884.9 573.8h0M904.5 574.3h0M919.9 571.9h0M921.4 575.9h0M924.3 569.7h0M937.8 569h0M940.2 568.9h0M943.9 573.4h0M945 572.5h0M945.7 569.9h0M947.6 571.5h0M947.7 572.7h0M949.6 570.3h0M949.6 574.2h0M951.7 570.2h0M952 574.7h0M954.5 570.4h0M956 571.2h0M962.8 572.9h0M963 569.8h0M965 571.6h0M966.8 575.8h0M974.1 570h0M974.4 568.6h0M976.9 574.1h0M977.4 575.6h0M600.6 576.2h0M601.9 579.8h0M603.9 577.4h0M607.2 581.5h0M607.4 577.8h0M607.7 577.7h0M610.2 578.3h0M614 579.1h0M618.3 580.4h0M623.7 582h0M630.4 582.1h0M804.3 578.1h0M813.5 577.4h0M815.8 580.8h0M815.9 583.5h0M816.5 576.3h0M816.6 577.5h0M817.1 576.3h0M818.4 580.4h0M819.5 581.2h0M819.5 579.8h0M820 578h0M820.5 580.1h0M821.9 577.5h0M822.2 576.7h0M822.5 576.8h0M822.6 581.5h0M822.8 580.3h0M824.1 579.8h0M826.1 581.6h0M849.3 579.8h0M851.1 576.4h0M852.3 576.6h0M875.1 576.8h0M879 577.3h0M879 577.7h0M880.7 579.1h0M883.7 577.1h0M884.6 579h0M886.3 581.6h0M898.9 578.4h0M903.3 578.9h0M905 582.4h0M908.1 576.3h0M910.2 578h0M910.4 582.3h0M912.9 582.2h0M917.2 576.7h0M923.1 582.1h0M923.9 576.9h0M924.2 583h0M925.8 581.5h0M961.4 578.2h0M964.1 579.1h0M973.9 579.7h0M975.8 583h0M976.5 578.5h0M977.8 577.2h0M979.2 580.7h0M980.3 578.1h0M980.6 580h0M981.2 580.1h0M984.6 584h0M622.1 587.4h0M627.2 590.9h0M863.5 586.6h0M867.9 590.3h0M881 589.8h0M885.4 586.9h0M888.2 585.2h0M889.2 590.6h0M891.1 591.1h0M892 584.6h0M894.2 587.9h0M921.4 590.4h0M945.8 585.8h0M979.4 590.8h0M980.1 589.9h0M980.8 591.9h0M984.3 586.7h0M988.3 590h0M615.4 599.5h0M880.3 593.7h0M883.1 597.3h0M887.3 593.7h0M888.2 596.6h0M894.2 597.3h0M894.6 594.3h0M895.5 597.7h0M897.6 597.1h0M899.4 595.3h0M901.4 596.4h0M901.8 599.5h0M923.5 599.2h0M927 593.2h0M929.2 594.9h0M931 598h0M946 593.7h0M946.5 596.7h0M948.9 592.7h0M948.9 597.5h0M951.5 594.7h0M954.5 598.7h0M954.8 595.7h0M957.7 598.8h0M983.4 595.6h0M984 597.8h0M984.9 595.2h0M985.5 599.2h0M986.7 598.1h0M613.9 606.3h0M615.6 601.5h0M919 605.9h0M933.6 604.4h0M944.8 601.7h0M953.2 600.5h0M953.9 606.1h0M954.2 602h0M954.3 604.4h0M957.8 602.9h0M958.8 602.4h0M959.3 604.8h0M960.4 604.5h0M961.6 601.2h0M961.8 604h0M962 600.6h0M962.3 606.9h0M967.1 606.2h0M969.9 604.6h0M976.5 603h0M977 601h0M978 603.8h0M982.1 607.1h0M983.1 607.9h0M985.8 607.8h0M987.8 602.7h0M988.1 601.8h0M989.4 601.1h0M990.4 601.8h0M992.5 604.8h0M607.8 614.4h0M922.7 609.3h0M925.1 613.7h0M935.8 612.4h0M939.1 615.8h0M957.4 608.9h0M961.6 608.1h0M962.9 611.1h0M964.3 615.9h0M964.8 614h0M968.8 613.8h0M973.7 613.2h0M977.5 611h0M980.8 613.3h0M985.2 608.3h0M605.6 616.5h0M928 617.1h0M938.3 622.2h0M939.2 623h0M621.1 624.2h0M940.3 625.1h0M940.8 624.5h0M943.5 625.2h0M945.3 628.4h0" fill="none" stroke="#680e4d" stroke-width="4.7" stroke-linecap="round"/></svg>
<!--MAP-END-->
  <div id="vscroll" class="abs"><div id="vthumb" class="abs"></div></div>
  <div id="rdock" class="abs">
    <div class="vtab" style="top:2.500px;height:65px"><span style="top:22px">Catalog</span></div>
    <div class="vtab" style="top:74px;height:63px"><span style="top:21.500px">Search</span></div>
    <div class="vtab" style="top:152px;height:115px"><span style="top:23px">Create Features</span></div>
  </div>
  <div class="abs" id="hstrip" style="left:229px;top:686px;width:1111px;height:17px;background:#f0f0f0"></div>
  <div class="abs" style="left:320px;top:689px;width:984px;height:12px;background:#cdcdcd"></div>
  <div class="abs" style="left:232px;top:688px;width:12px;height:13px;background:#dfe6ee;border:1px solid #9ab"></div>
  <div class="abs" style="left:250px;top:690px;width:9px;height:10px;border:1px solid #aaa"></div>
  <div class="abs" style="left:271px;top:690px;width:9px;height:9px;border-radius:5px;border:1.500px solid #8a8a8a"></div>
  <div class="abs" style="left:289px;top:691px;width:3px;height:8px;background:#7a8aa8;box-shadow:5px 0 0 #7a8aa8"></div>
  <div class="abs" id="statusbar" style="left:0;top:703px;width:1360px;height:21px;background:#f0f0f0"></div>
  <div class="abs" style="left:1110px;top:708px;font-size:11px;color:#333;white-space:nowrap;letter-spacing:-0.2px">453740.068  3693475.376 Meters</div>
<!--UI-START-->
<svg id="uisvg" class="abs" style="left:0;top:-21px" width="1360" height="750" viewBox="0 0 1360 750" font-family="Liberation Sans, sans-serif">
<defs><linearGradient id="ovg" x1="0" y1="0" x2="0" y2="1"><stop offset="0" stop-color="#f0f0f0"/><stop offset="1" stop-color="#bdbdbd"/></linearGradient><linearGradient id="glob" x1="0" y1="0" x2="1" y2="1"><stop offset="0" stop-color="#5aa0e6"/><stop offset="1" stop-color="#143c8c"/></linearGradient><radialGradient id="info" cx="0.4" cy="0.3" r="0.8"><stop offset="0" stop-color="#6aa8f0"/><stop offset="1" stop-color="#1a4fb0"/></radialGradient></defs>
<circle cx="10" cy="33" r="6.8" fill="#1f6e86"/><circle cx="9" cy="31.5" r="3.6" fill="#7fd0c0"/><path d="M12 36l5 3.5" stroke="#4a4a3a" stroke-width="3"/>
<path d="M1269 33.5h9" stroke="#333" stroke-width="2.2"/>
<rect x="1296" y="28.5" width="7" height="7" fill="#f0f0f0" stroke="#333" stroke-width="1.6"/><path d="M1298.5 28v-2h7v7h-2" fill="none" stroke="#333" stroke-width="1.4"/>
<rect x="1315" y="22" width="43" height="19" fill="#c3c6c6"/><path d="M1332 27.5l9 8M1341 27.5l-9 8" stroke="#f4f4f4" stroke-width="1.8"/>
<path d="M6.5 73.5v17" stroke="#b5b5b5" stroke-width="1.2" stroke-dasharray="1.2 2.4"/>
<path d="M20.8 83.0l5.5 5.5" stroke="#a0303a" stroke-width="2.4" stroke-linecap="round"/>
<circle cx="17.8" cy="80.0" r="5" fill="#eef3f8" stroke="#6a6a6a" stroke-width="1.5"/>
<path d="M15.3 80.0h5" stroke="#111" stroke-width="2"/>
<path d="M17.8 77.5v5" stroke="#111" stroke-width="2"/>
<path d="M42.2 83.0l5.5 5.5" stroke="#a0303a" stroke-width="2.4" stroke-linecap="round"/>
<circle cx="39.2" cy="80.0" r="5" fill="#eef3f8" stroke="#6a6a6a" stroke-width="1.5"/>
<path d="M36.7 80.0h5" stroke="#111" stroke-width="2"/>
<rect x="53.5" y="71" width="22" height="21" fill="#e3f0fb" stroke="#86b9ec" stroke-width="1.2"/>
<path d="M60 88c-2 -3 -3.5 -5 -3.5 -7c1.2 -0.8 2.2 0 3 1.2v-6.5c0.8 -1 1.8 -1 2.4 0c0.6 -1.6 2 -1.6 2.6 0c0.8 -1.2 2 -1 2.5 0.4c0.8 -0.6 1.8 -0.3 2 0.8v6.5c0 2 -1 3.5 -1.6 4.6z" fill="#fff" stroke="#6e7680" stroke-width="1.1"/>
<circle cx="86.8" cy="81.5" r="7.3" fill="url(#glob)"/><path d="M83 77c2 -1 4 -0.5 5 1c1 2 -1 3 -2 5c-1 2 0 4 -1.5 4.5c-2 -1 -3 -4 -3 -6.5c0 -1.5 0.5 -3 1.5 -4z" fill="#5fb04a"/><path d="M89.5 83c1.5 -0.5 3 0 3.5 1c-0.5 2 -1.5 3 -3 3.8z" fill="#7cc060"/>
<path d="M100 73.5v16" stroke="#d0d0d0" stroke-width="1"/>
<path d="M112.60000000000001 80.10000000000001l-4.4 0l4.4 -4.4zM107.80000000000001 75.30000000000001l2.6 2.6" fill="#111" stroke="#111" stroke-width="1.3"/>
<path d="M112.60000000000001 82.89999999999999l-4.4 0l4.4 4.4zM107.80000000000001 87.69999999999999l2.6 -2.6" fill="#111" stroke="#111" stroke-width="1.3"/>
<path d="M115.39999999999999 80.10000000000001l4.4 0l-4.4 -4.4zM120.19999999999999 75.30000000000001l-2.6 2.6" fill="#111" stroke="#111" stroke-width="1.3"/>
<path d="M115.39999999999999 82.89999999999999l4.4 0l-4.4 4.4zM120.19999999999999 87.69999999999999l-2.6 -2.6" fill="#111" stroke="#111" stroke-width="1.3"/>
<path d="M129.4 74.89999999999999l4.4 0l-4.4 4.4zM134.0 79.5l-2.4 -2.4" fill="#111" stroke="#111" stroke-width="1.3"/>
<path d="M129.4 88.10000000000001l4.4 0l-4.4 -4.4zM134.0 83.5l-2.4 2.4" fill="#111" stroke="#111" stroke-width="1.3"/>
<path d="M142.6 74.89999999999999l-4.4 0l4.4 4.4zM138.0 79.5l2.4 -2.4" fill="#111" stroke="#111" stroke-width="1.3"/>
<path d="M142.6 88.10000000000001l-4.4 0l4.4 -4.4zM138.0 83.5l2.4 2.4" fill="#111" stroke="#111" stroke-width="1.3"/>
<path d="M149.5 73.5v16" stroke="#d0d0d0" stroke-width="1"/>
<path d="M157.5 81.5l7.5 -6.5v3.7h7.5v5.6h-7.5v3.7z" fill="#2a63c6" stroke="#1d4fa8" stroke-width="0.8"/>
<path d="M193 81.5l-7 -6v3.5h-7v5h7v3.5z" fill="#c6c6c6"/>
<path d="M199.5 73.5v16" stroke="#d0d0d0" stroke-width="1"/>
<rect x="206" y="74" width="13" height="11" fill="#5ab0c8" stroke="#4a6a80" stroke-width="1"/><rect x="212.5" y="76" width="6" height="7" fill="#e8f4f8"/><rect x="207.5" y="78" width="4" height="5" fill="#2d7a98"/><path d="M210 85v4l2 -1.5l1.5 3l1.5 -0.8l-1.5 -3h2.5z" fill="#223" />
<path d="M227.4 81.5h5.2l-2.6 2.6z" fill="#222"/>
<rect x="241" y="75" width="12" height="12" fill="#f0f0f0" stroke="#cfcfcf" stroke-width="1.2"/><rect x="244" y="78" width="6" height="6" fill="none" stroke="#d4d4d4"/>
<path d="M260.5 73.5v16" stroke="#d0d0d0" stroke-width="1"/>
<path d="M270.4 74.0l0 14l3.3 -3.2l2.6 5.6l2.6 -1.2l-2.6 -5.4h4.6z" fill="#111"/>
<path d="M289.8 73.5v16" stroke="#d0d0d0" stroke-width="1"/>
<circle cx="302" cy="81.5" r="7.6" fill="url(#info)" stroke="#2a5cb8" stroke-width="0.8"/><path d="M302 80v5.5" stroke="#fff" stroke-width="2.2"/><circle cx="302" cy="77.5" r="1.3" fill="#fff"/>
<path d="M329 74l-6 8h3l-4 7l8 -9h-3.4z" fill="#dcdcdc"/>
<path d="M340 75h14v10h-8l-3.5 3.5v-3.5h-2.5z" fill="#f4f8fc" stroke="#6a86a8" stroke-width="1.2"/><path d="M343 78h5v4h-5z" fill="#3a78c8"/><path d="M349.500 78.500h3M349.500 81.500h3" stroke="#8aa0b8"/>
<path d="M360 73.5v16" stroke="#d0d0d0" stroke-width="1"/>
<rect x="367" y="83" width="16" height="5" fill="#e0b070" stroke="#9a6a30" stroke-width="0.8"/><path d="M369 83v-2.500M372 83v-2M375 83v-2.500M378 83v-2M381 83v-2.500" stroke="#6a4a20" stroke-width="0.9"/><path d="M367.500 76.500h15" stroke="#2a4a8a" stroke-width="1.2" stroke-dasharray="3 2"/><path d="M367 76.500l3.500 -2.500v5zM383 76.500l-3.500 -2.500v5z" fill="#1a3a7a"/>
<path d="M388 73.5v16" stroke="#d0d0d0" stroke-width="1"/>
<path d="M396.500 75h3.500l1 3h2l1 -3h3.500l2 13h-5.500l-0.500 -4h-3l-0.500 4h-5.500z" fill="#1a1a1a"/>
<path d="M419 84h12v4.500h-12z" fill="#dce8f4" stroke="#3a78c0" stroke-width="1.2"/><path d="M421 84v-5h6M427 76.500l4 2.500l-4 2.500z" fill="none" stroke="#2a68b8" stroke-width="1.5"/><path d="M427 76l4.500 3l-4.500 3z" fill="#2a68b8"/>
<circle cx="447" cy="77.500" r="3.200" fill="#cfe2f6" stroke="#2a68b8" stroke-width="1.500"/><path d="M447 81v3" stroke="#2a68b8" stroke-width="1.4"/><text x="441.300" y="90" font-size="6.500" font-weight="bold" fill="#1d3f86">XY</text>
<path d="M459.5 73.5v16" stroke="#d0d0d0" stroke-width="1"/>
<rect x="467.500" y="75" width="13.500" height="12" fill="#f0f0f0" stroke="#d0d0d0" stroke-width="1.2"/><path d="M467.500 78h13.500" stroke="#d0d0d0"/>
<path d="M488 73.5v16" stroke="#d0d0d0" stroke-width="1"/>
<rect x="495" y="74.500" width="14" height="11.500" fill="#f4f6f8" stroke="#5a5f70" stroke-width="1.2"/><rect x="495" y="74.500" width="14" height="3" fill="#4a5a9a"/><circle cx="502.500" cy="81.500" r="2.400" fill="#dde8f0" stroke="#333" stroke-width="1"/><path d="M504.500 83.500l3.500 3.500" stroke="#a03038" stroke-width="1.600"/>
<rect x="516.0" y="77" width="9" height="17" fill="url(#ovg)"/>
<path d="M518.0 84.5h5" stroke="#333" stroke-width="1.2"/>
<path d="M518.0 87.5h5.0l-2.5 2.5z" fill="#333"/>
<path d="M6.5 98.8v17" stroke="#b5b5b5" stroke-width="1.2" stroke-dasharray="1.2 2.4"/>
<path d="M14 98.500h8l4 4v12.500h-12z" fill="#fff" stroke="#8a8a8a" stroke-width="1.200"/><path d="M22 98.500v4h4" fill="none" stroke="#8a8a8a" stroke-width="1"/>
<path d="M34.500 103h5l1.500 2h8v10h-14.500z" fill="#e9c743" stroke="#a88a1c" stroke-width="1"/><path d="M34.500 115l3 -7h14l-3 7z" fill="#f6dd6a" stroke="#a88a1c" stroke-width="1"/><path d="M45 98.500l4.500 3.500l-1.800 0.600l0 2.500h-3l0 -2.500l-1.800 -0.600z" fill="#2a62c0" transform="rotate(35 46 101)"/>
<rect x="57" y="99.500" width="14.500" height="14.500" rx="1" fill="#4e3c10" stroke="#2e2408" stroke-width="1"/><rect x="60" y="100.500" width="8.500" height="5" fill="#c9a63c"/><rect x="60.500" y="108.500" width="7.500" height="5" fill="#d8c8a0"/><rect x="62" y="109.500" width="2.500" height="3.500" fill="#4e3c10"/>
<path d="M81 104v-5h9.500l1.500 1.500v3.500" fill="#fff" stroke="#555" stroke-width="1.100"/><rect x="78" y="104" width="17" height="7.500" rx="1.500" fill="#d8dadc" stroke="#3a3a3a" stroke-width="1.200"/><rect x="81" y="109" width="11" height="5" fill="#f8f8f8" stroke="#3a3a3a" stroke-width="1"/><path d="M78.500 108h16" stroke="#222" stroke-width="1.200"/>
<path d="M100 98.8v16" stroke="#d0d0d0" stroke-width="1"/>
<path d="M111 99.500l4 9M116 99.500l-4.500 9M110.500 108.500l-1.500 4.500M116 108.500l2 4.500" stroke="#cfcfcf" stroke-width="1.400" fill="none"/><circle cx="109.500" cy="113" r="1.800" fill="none" stroke="#cfcfcf"/><circle cx="118" cy="113" r="1.800" fill="none" stroke="#cfcfcf"/>
<rect x="129.500" y="99.500" width="9" height="11" fill="#f2f2f2" stroke="#cdcdcd" stroke-width="1.100"/><rect x="133" y="103" width="9" height="11" fill="#f2f2f2" stroke="#cdcdcd" stroke-width="1.100"/><path d="M135 106h5M135 108.500h5M135 111h5" stroke="#d8d8d8"/>
<rect x="151.500" y="100.500" width="12" height="13" rx="1" fill="#e4e4e4" stroke="#c8c8c8" stroke-width="1.100"/><rect x="155" y="99" width="5" height="3" fill="#cfcfcf"/><rect x="155.500" y="104.500" width="9" height="10" fill="#f4f4f4" stroke="#cdcdcd"/>
<path d="M175 101.500l10 10.500M185 101.500l-10 10.500" stroke="#9e9e9e" stroke-width="2"/>
<path d="M194 98.8v16" stroke="#d0d0d0" stroke-width="1"/>
<path d="M204 105.500c3 -4.500 9 -4 9.500 1.500c0.200 2.500 -1 4.500 -2.500 6" fill="none" stroke="#2656b8" stroke-width="2.400"/><path d="M201.500 101l0.500 7.500l6.500 -2.500z" fill="#2656b8"/>
<path d="M234 105.500c-3 -4.500 -9 -4 -9.500 1.500" fill="none" stroke="#cfcfcf" stroke-width="2.200"/><path d="M236.500 101l-0.500 7.500l-6.500 -2.500z" fill="#cfcfcf"/>
<path d="M244 98.8v16" stroke="#d0d0d0" stroke-width="1"/>
<path d="M249.500 109l8.500 -6l8.500 6l-8.500 6z" fill="#f0cf3c" stroke="#9a7a10" stroke-width="1"/><path d="M258 98.500v10M253 103.500h10" stroke="#111" stroke-width="2.600"/>
<path d="M271.29999999999995 106.8h5.2l-2.6 2.6z" fill="#222"/>
<rect x="286.500" y="98" width="146" height="18.500" fill="#fff" stroke="#b4b4b4" stroke-width="1.200"/>
<text x="289.500" y="111" font-size="11.800" fill="#3a3a3a" letter-spacing="-0.35">1:1,598,161</text>
<path d="M420.500 105.500l4 4l4 -4" fill="none" stroke="#444" stroke-width="1.500"/>
<rect x="439.500" y="97" width="22.500" height="21.500" fill="#e3f0fb" stroke="#86b9ec" stroke-width="1.200"/>
<path d="M444 107l8 -5M452 102l5 -3" stroke="#555" stroke-width="1.300"/><path d="M449 108l8.500 -9l1.800 1.600l-8.500 9.200l-2.600 0.800z" fill="#e8c070" stroke="#8a5a20" stroke-width="0.800"/><path d="M443 113.500h15" stroke="#111" stroke-width="2.200" stroke-dasharray="3 2.500"/>
<rect x="470.5" y="100.3" width="15" height="12.500" fill="#f4f8fc" stroke="#4a5870" stroke-width="1.200"/><rect x="470.5" y="100.3" width="15" height="3" fill="#3a5a9a"/>
<path d="M472 105.500h12M472 108.500h12M476 102.500v9.500" stroke="#7a9ac8" stroke-width="1"/>
<rect x="492.5" y="100.3" width="15" height="12.500" fill="#f4f8fc" stroke="#4a5870" stroke-width="1.200"/><rect x="492.5" y="100.3" width="15" height="3" fill="#3a5a9a"/>
<path d="M496 112.500v-6h3v-2.500h3.500v8.500z" fill="#d8b020" stroke="#8a6a10" stroke-width="0.800"/>
<rect x="514.5" y="100.3" width="15" height="12.500" fill="#f4f8fc" stroke="#4a5870" stroke-width="1.200"/><rect x="514.5" y="100.3" width="15" height="3" fill="#3a5a9a"/>
<circle cx="525" cy="111.500" r="3.300" fill="#58b070" stroke="#2a6aa8" stroke-width="1.400"/>
<rect x="537.3" y="100.3" width="15" height="12.500" fill="#f0e4e0" stroke="#4a5870" stroke-width="1.200"/><rect x="537.3" y="100.3" width="15" height="3" fill="#3a5a9a"/>
<path d="M539 106l5 -2.500l7 1.500v6l-6 2.500l-6 -2z" fill="#c8382c" stroke="#7a1a14" stroke-width="0.900"/>
<rect x="558.5" y="100.3" width="15" height="12.500" fill="#fdfdfd" stroke="#4a5870" stroke-width="1.200"/><rect x="558.5" y="100.3" width="15" height="3" fill="#3a4a78"/>
<path d="M561 106.500l2 1.500l-2 1.500" fill="none" stroke="#223" stroke-width="1"/>
<path d="M579 98.8v16" stroke="#d0d0d0" stroke-width="1"/>
<rect x="588" y="99" width="4.500" height="4.500" fill="#3a8ae0" stroke="#1a4a98" stroke-width="0.800"/><rect x="588" y="110" width="4.500" height="4.500" fill="#3a8ae0" stroke="#1a4a98" stroke-width="0.800"/><path d="M590.500 103.500v6.500M590.500 106.800h5" stroke="#444" stroke-width="1.100" fill="none"/><ellipse cx="598.500" cy="106.800" rx="3.400" ry="2.600" fill="#e8d040" stroke="#8a7a10" stroke-width="0.800"/><rect x="602.500" y="104.300" width="5" height="5" rx="1" fill="#58b848" stroke="#2a6a20" stroke-width="0.800"/>
<rect x="608.2" y="100" width="9" height="20" fill="url(#ovg)"/>
<path d="M610.2 110.5h5" stroke="#333" stroke-width="1.2"/>
<path d="M610.2 113.5h5.0l-2.5 2.5z" fill="#333"/>
<path d="M626 98.8v17" stroke="#b5b5b5" stroke-width="1.2" stroke-dasharray="1.2 2.4"/>
<text x="633" y="111.300" font-size="12.300" fill="#2c2c2c" letter-spacing="-0.2">Editor</text>
<path d="M667.1 106.8h4.8l-2.4 2.4z" fill="#222"/>
<path d="M677.7 98.8v16" stroke="#d0d0d0" stroke-width="1"/>
<path d="M686.6 102.8l9 4l-9 4z" fill="#c4c4c4"/>
<path d="M708.500 102l7 3l-7 3z" fill="#c8c8c8"/><path d="M716 112l2.500 -5l2.500 5z" fill="none" stroke="#c8c8c8"/>
<path d="M727 98.8v16" stroke="#d0d0d0" stroke-width="1"/>
<path d="M735 111.8l12 -10" stroke="#c4c4c4" stroke-width="1.4"/>
<path d="M757.500 112.500c1 -6 5 -9 11 -10" fill="none" stroke="#c4c4c4" stroke-width="1.300" stroke-dasharray="3 1.500"/>
<path d="M781.500 101.500h10l-2 10h-8zM786 111.500v3" fill="none" stroke="#c4c4c4" stroke-width="1.300"/>
<path d="M798.8 106.8h4l-2 2z" fill="#bdbdbd"/>
<path d="M812.7 106.8h12M818.7 100.8v12M814.7 102.8l8 8M822.7 102.8l-8 8" stroke="#c4c4c4" stroke-width="1"/>
<path d="M832 98.8v16" stroke="#d0d0d0" stroke-width="1"/>
<path d="M840.5 100.8h11v11h-11zM840.5 100.8l11 11" fill="none" stroke="#c4c4c4" stroke-width="1.2"/>
<path d="M862.500 113v-10.500l6 3v7.500M871.500 108v5" fill="none" stroke="#c4c4c4" stroke-width="1.300"/>
<path d="M885 103h12v7.500h-12zM891 99.500v15" fill="none" stroke="#c4c4c4" stroke-width="1.300"/>
<path d="M907 111.8l12 -10" stroke="#c4c4c4" stroke-width="1.4"/>
<path d="M928.8 110.8a5 5 0 1 1 6 1" fill="none" stroke="#c4c4c4" stroke-width="1.5"/>
<path d="M947 98.8v16" stroke="#d0d0d0" stroke-width="1"/>
<rect x="954" y="100" width="13.500" height="13" fill="#ececec" stroke="#cacaca" stroke-width="1.200"/><path d="M954 103.500h13.500M954 106.500h13.500M954 109.500h13.500" stroke="#d4d4d4"/>
<rect x="976.500" y="100" width="13.500" height="13" fill="#f0f0f0" stroke="#cacaca" stroke-width="1.200"/><path d="M979 111l3 -7l3 5l3 -6" fill="none" stroke="#c8c8c8" stroke-width="1.100"/>
<path d="M997 98.8v16" stroke="#d0d0d0" stroke-width="1"/>
<path d="M1005 100.500h12M1005 104.500h8M1005 108.500h8M1005 112.500h8M1005 100.500v12" stroke="#c8c8c8" stroke-width="1.200" fill="none"/><path d="M1012 112l6 -9" stroke="#c4c4c4" stroke-width="1.600"/>
<rect x="1025.5" y="100" width="9" height="20.5" fill="url(#ovg)"/>
<path d="M1027.5 111.0h5" stroke="#333" stroke-width="1.2"/>
<path d="M1027.5 114.0h5.0l-2.5 2.5z" fill="#333"/>
<path d="M1041.5 98.8v17" stroke="#b5b5b5" stroke-width="1.2" stroke-dasharray="1.2 2.4"/>
<rect x="1046.500" y="98.500" width="176" height="17.500" fill="#fff" stroke="#8e8e8e" stroke-width="1.500"/><path d="M1047 116.500h176v-18" fill="none" stroke="#d8d8d8" stroke-width="1"/>
<path d="M1048.500 106.500l6.500 -5l6.500 5l-6.500 5z" fill="#6fc06a" stroke="#3a5a3a" stroke-width="1"/><path d="M1052 106.500l3 -2.300l3 2.300l-3 2.300z" fill="#e8f4e0"/>
<text x="1067.500" y="111.300" font-size="11.800" fill="#333" letter-spacing="-0.12">DEM_Lorestan.tif</text>
<rect x="1207" y="100" width="14.500" height="15" fill="#f2f2f2" stroke="#c6c6c6" stroke-width="0.800"/>
<path d="M1211.3 106.3h6l-3 3z" fill="#111"/>
<rect x="1229.500" y="99.500" width="14" height="14.500" fill="#d4ead4"/><path d="M1232 113c2 -8 8 -12 10 -9c1 3 -5 5 -8 4M1237 106l3 8" fill="none" stroke="#8fae8f" stroke-width="1.500"/>
<path d="M1250.500 113.500v-13.500c6 0.500 12 5 13.500 13.500z" fill="#e4c21c" stroke="#b89a10" stroke-width="0.800"/>
<rect x="1271.5" y="98" width="9" height="22" fill="url(#ovg)"/>
<path d="M1273.5 110.5h5" stroke="#333" stroke-width="1.2"/>
<path d="M1273.5 113.5h5.0l-2.5 2.5z" fill="#333"/>
<path d="M6.5 124.6v17" stroke="#b5b5b5" stroke-width="1.2" stroke-dasharray="1.2 2.4"/>
<path d="M15 131l5.500 -4l6 3.500v7.500h-11.500z" fill="#ececec" stroke="#c6c6c6" stroke-width="1.200"/><rect x="17.500" y="132.500" width="8" height="5" fill="#f6f6f6" stroke="#c6c6c6"/>
<path d="M33.7 124.6v16" stroke="#d0d0d0" stroke-width="1"/>
<path d="M41 127h11M41 130h9M41 133h7M43 127v9l4 -2.500l3 3.500" fill="none" stroke="#bcbcbc" stroke-width="1.300"/>
<path d="M61.5 132.6h4l-2 2z" fill="#aaa"/>
<path d="M72.4 124.6v16" stroke="#d0d0d0" stroke-width="1"/>
<path d="M80.500 127v11M84 127v11M80.500 130h12M80.500 135h12M89 127l3 11" fill="none" stroke="#c2c2c2" stroke-width="1.200"/>
<path d="M102 127v11M102 127h11v5h-7v6M106 132h7v4h-4" fill="none" stroke="#c2c2c2" stroke-width="1.200"/>
<path d="M125 130l3 3l-3 3M131 132.500h2M136 126.500c-2 2 -2 10 0 12" fill="none" stroke="#d0d0d0" stroke-width="1.200"/>
<path d="M148 127v6l3 5M151 135h7M155 131v7" fill="none" stroke="#dcdcdc" stroke-width="1.200"/>
<path d="M165.7 124.6v16" stroke="#d0d0d0" stroke-width="1"/>
<rect x="174.500" y="126.500" width="12" height="12" fill="#f2f2f2" stroke="#bdbdbd" stroke-width="1.200"/><path d="M174.500 130.500h12M178.500 126.500v12" stroke="#bdbdbd"/>
<path d="M194.4 124.6v16" stroke="#d0d0d0" stroke-width="1"/>
<path d="M202.500 129l6 -2.500l6 2.500l-6 2.500zM202.500 132l6 2.500l6 -2.500M202.500 135l6 2.500l6 -2.500" fill="#ececec" stroke="#c0c0c0" stroke-width="1.100"/>
<rect x="224" y="126" width="9" height="6" fill="#e4e4e4" stroke="#c0c0c0"/><path d="M224 134.500h9M230 137.500l2.500 2.500l5 -7" fill="none" stroke="#b8b8b8" stroke-width="1.400"/>
<path d="M244 124.6v16" stroke="#d0d0d0" stroke-width="1"/>
<circle cx="258" cy="133.500" r="3" fill="none" stroke="#cdcdcd" stroke-width="1.400"/><path d="M258 136.500v3.500M260 129h6v6" fill="none" stroke="#cdcdcd" stroke-width="1.300"/>
<rect x="274" y="127" width="13" height="11.500" fill="#f0f0f0" stroke="#c8c8c8" stroke-width="1.200"/><path d="M274 130h13" stroke="#c8c8c8"/><circle cx="283" cy="135.500" r="3" fill="#f6f6f6" stroke="#c8c8c8"/>
<rect x="294.8" y="127" width="9" height="19" fill="url(#ovg)"/>
<path d="M296.8 136.5h5" stroke="#333" stroke-width="1.2"/>
<path d="M296.8 139.5h5.0l-2.5 2.5z" fill="#333"/>
<path d="M312 124.6v17" stroke="#b5b5b5" stroke-width="1.2" stroke-dasharray="1.2 2.4"/>
<rect x="320.0" y="126.1" width="13" height="13" rx="1.500" fill="#ededed" stroke="#cfcfcf" stroke-width="1.100"/>
<circle cx="326.0" cy="132.1" r="3.300" fill="none" stroke="#c4c4c4" stroke-width="1.200"/>
<rect x="341.8" y="126.1" width="13" height="13" rx="1.500" fill="#ededed" stroke="#cfcfcf" stroke-width="1.100"/>
<circle cx="347.8" cy="132.1" r="3.300" fill="none" stroke="#c4c4c4" stroke-width="1.200"/>
<rect x="363.0" y="126.1" width="13" height="13" rx="1.500" fill="#ededed" stroke="#cfcfcf" stroke-width="1.100"/>
<path d="M365.5 136.6v-6l2 -2.500h4l2 2.500v6" fill="none" stroke="#c4c4c4" stroke-width="1.300"/>
<rect x="385.5" y="126.1" width="13" height="13" rx="1.500" fill="#ededed" stroke="#cfcfcf" stroke-width="1.100"/>
<path d="M388 128.6l8 8M396 128.6l-8 8" stroke="#c8c8c8" stroke-width="1.200"/>
<rect x="407.3" y="126.1" width="13" height="13" rx="1.500" fill="#ededed" stroke="#cfcfcf" stroke-width="1.100"/>
<path d="M411.8 128.6h5v8h-5z" fill="none" stroke="#c8c8c8" stroke-width="1.100"/>
<path d="M426.7 124.6v16" stroke="#d0d0d0" stroke-width="1"/>
<rect x="435.1" y="126.1" width="13" height="13" fill="#f0f0f0" stroke="#c8c8c8" stroke-width="1.100"/><path d="M438.1 129.1h2.500v2.500h-2.500zM442.6 129.1h2.500v2.500h-2.500zM438.1 133.6h2.500v2.500h-2.500zM442.6 133.6h2.500v2.500h-2.500z" fill="#c4c4c4"/>
<rect x="456.9" y="126.1" width="13" height="13" fill="#f0f0f0" stroke="#c8c8c8" stroke-width="1.100"/><path d="M459.9 129.1h2.500v2.500h-2.500zM464.4 129.1h2.500v2.500h-2.500zM459.9 133.6h2.500v2.500h-2.500zM464.4 133.6h2.500v2.500h-2.500z" fill="#c4c4c4"/>
<path d="M476 124.6v16" stroke="#d0d0d0" stroke-width="1"/>
<path d="M487 126.1h7l3.500 3.500v9.500h-10.500z" fill="#ececec" stroke="#cccccc" stroke-width="1.100"/><path d="M489.5 133.6l2.500 -3l2.500 3z" fill="#c8c8c8"/>
<path d="M509 126.1h7l3.500 3.500v9.500h-10.500z" fill="#ececec" stroke="#cccccc" stroke-width="1.100"/><path d="M511.5 133.6l2.500 -3l2.500 3z" fill="#c8c8c8"/>
<rect x="523.500" y="123.500" width="59" height="17.500" fill="#fcfcfc" stroke="#e2e2e2" stroke-width="1"/>
<rect x="527.500" y="125.500" width="26.500" height="13" fill="#2f7fe0"/><path d="M533 132h12" stroke="#5a9cec" stroke-width="1.500"/>
<path d="M571.500 131l4 4l4 -4" fill="none" stroke="#bcbcbc" stroke-width="1.400"/>
<path d="M586.5 124.6v16" stroke="#d0d0d0" stroke-width="1"/>
<rect x="590.500" y="122.500" width="22" height="21.500" fill="#f0f1f2" stroke="#c4c8cc" stroke-width="1.200"/>
<path d="M596 126h8l3 3v11h-11z" fill="#f8f8f8" stroke="#cfcfcf" stroke-width="1.100"/><path d="M598.500 133h6M598.500 136h6" stroke="#d8d8d8"/>
<path d="M617.500 126.500h8l3 3v10h-11z" fill="#e8e8e8" stroke="#cccccc" stroke-width="1.100"/>
<path d="M638 132.500a6.500 6 0 0 1 13 0" fill="none" stroke="#2a4a7a" stroke-width="2.200"/><rect x="637.500" y="133.500" width="6" height="6" fill="#9aa8b8" stroke="#5a6a7a"/><rect x="646" y="133.500" width="6" height="6" fill="#9aa8b8" stroke="#5a6a7a"/>
<path d="M662 127h7l3 3v9h-10z" fill="#b8c0c4" stroke="#7a8488" stroke-width="1.100"/><rect x="659.500" y="135.500" width="12" height="4" fill="#7a94a8" stroke="#4a5a68"/><path d="M667 130v5" stroke="#3a8a4a" stroke-width="1.600"/>
<rect x="680.5" y="127" width="9" height="19.5" fill="url(#ovg)"/>
<path d="M682.5 137.0h5" stroke="#333" stroke-width="1.2"/>
<path d="M682.5 140.0h5.0l-2.5 2.5z" fill="#333"/>
<path d="M697.6 124.6v17" stroke="#b5b5b5" stroke-width="1.2" stroke-dasharray="1.2 2.4"/>
<text x="706" y="137" font-size="12.300" fill="#2c2c2c" letter-spacing="-0.2">Drawing</text>
<path d="M752.6 132.6h4.8l-2.4 2.4z" fill="#222"/>
<path d="M767.5 125.1l0 14l3.3 -3.2l2.6 5.6l2.6 -1.2l-2.6 -5.4h4.6z" fill="#111"/>
<path d="M798.500 136a6.200 6.200 0 1 0 -3 3.200" fill="none" stroke="#b4b4b4" stroke-width="1.300"/><circle cx="793" cy="133" r="1.200" fill="#999"/><path d="M797 139.500l-2.500 -0.300l1.500 -2z" fill="#b4b4b4"/>
<rect x="809.500" y="126" width="13" height="13.500" fill="#dedede"/><path d="M812 129h3v3h-3zM817 129h3v3h-3zM812 134h3v3h-3zM817 134h3v3h-3z" fill="#c2c2c2"/>
<path d="M828.6 124.6v16" stroke="#d0d0d0" stroke-width="1"/>
<rect x="837" y="126.500" width="12.500" height="12.500" fill="#fdfdfd" stroke="#4a4a4a" stroke-width="1.500"/>
<path d="M857.1 132.6h4.8l-2.4 2.4z" fill="#222"/>
<text x="869" y="139.500" font-family="Liberation Serif, serif" font-weight="bold" font-size="17.500" fill="#1c1c1c">A</text>
<path d="M889.6 132.6h4.8l-2.4 2.4z" fill="#222"/>
<path d="M902.500 137.500l3 -8l10 -2.500l-1 9z" fill="none" stroke="#c6c6c6" stroke-width="1.200" stroke-dasharray="2.500 1.500"/>
<path d="M922 124.6v16" stroke="#d0d0d0" stroke-width="1"/>
<rect x="926.500" y="124" width="169" height="18" fill="#fff" stroke="#cfcfcf" stroke-width="1.100"/>
<rect x="929.500" y="126" width="14" height="14" rx="1" fill="#cfe4f6" stroke="#9ec4e8"/><text x="932.500" y="137.500" font-family="Liberation Serif, serif" font-style="italic" font-weight="bold" font-size="12.500" fill="#2c5a5a">O</text>
<text x="947.500" y="137" font-size="11.300" fill="#3a3a3a" letter-spacing="-0.3">Arial</text>
<path d="M1084 131l4 4l4 -4" fill="none" stroke="#444" stroke-width="1.500"/>
<rect x="1097.500" y="124" width="44.500" height="18" fill="#fff" stroke="#cfcfcf" stroke-width="1.100"/>
<text x="1101" y="137" font-size="11.500" fill="#3a3a3a" letter-spacing="-0.3">10</text>
<path d="M1130 131l4 4l4 -4" fill="none" stroke="#444" stroke-width="1.500"/>
<text x="1148.500" y="139" font-family="Liberation Serif, serif" font-weight="bold" font-size="14.500" fill="#333">B</text>
<text x="1172" y="139" font-family="Liberation Serif, serif" font-weight="bold" font-style="italic" font-size="14.500" fill="#444">I</text>
<text x="1192.500" y="138.500" font-family="Liberation Serif, serif" font-weight="bold" font-size="13.500" fill="#555" text-decoration="underline">U</text><path d="M1192.500 140.500h10.500" stroke="#555" stroke-width="1"/>
<path d="M1210.6 124.6v16" stroke="#d0d0d0" stroke-width="1"/>
<text x="1219.500" y="137" font-family="Liberation Serif, serif" font-weight="bold" font-size="15" fill="#222">A</text><path d="M1217.500 140h17" stroke="#111" stroke-width="2.600"/>
<path d="M1242.6 132.1h4.8l-2.4 2.4z" fill="#222"/>
<path d="M1259 131l5 -4l6 5l-5 4.500z" fill="#f4f4f4" stroke="#666" stroke-width="1.200"/><path d="M1263 126c1 -2 3 -2 3.500 0" fill="none" stroke="#666"/><path d="M1257.500 141h14" stroke="#f2f6c8" stroke-width="2.600"/>
<path d="M1280.6 132.1h4.8l-2.4 2.4z" fill="#222"/>
<path d="M1299 137l7 -9c1.500 -1.500 4 0 3 2l-7 8.500l-4 1z" fill="#777" stroke="#444" stroke-width="0.800"/><path d="M1294.500 140.500h17" stroke="#111" stroke-width="2.600"/>
<path d="M1318.6 132.1h4.8l-2.4 2.4z" fill="#222"/>
<path d="M1352 124.500v20" stroke="#bdbdbd" stroke-dasharray="1.200 2"/>
<rect x="1352.0" y="127" width="9" height="19" fill="url(#ovg)"/>
<path d="M1354.0 136.5h5" stroke="#333" stroke-width="1.2"/>
<path d="M1354.0 139.5h5.0l-2.5 2.5z" fill="#333"/>
<path d="M194.500 155.500h6M195.500 155.500v5h4v-5M193.500 160.500h8M197.500 160.500v4" fill="none" stroke="#444" stroke-width="1.300"/><rect x="197.500" y="155.500" width="2" height="5" fill="#444"/>
<path d="M209.500 155l7.500 7.500M217 155l-7.500 7.500" stroke="#333" stroke-width="1.900"/>
<rect x="3.500" y="173.500" width="22" height="21.500" fill="#e3f0fb" stroke="#86b9ec" stroke-width="1.200"/>
<path d="M8 177l7 8M10 176l7 8" stroke="#e6c85a" stroke-width="2.600" stroke-linecap="round"/><path d="M13 185v6M13 185h5M13 190.500h5" fill="none" stroke="#c8b050" stroke-width="1.200"/><path d="M19 184.500h4M19 190.500h4" stroke="#5a7ab0" stroke-width="1.800"/>
<path d="M30.500 186l6 6l6 -6v-2h-12z" fill="#f0d45a" stroke="#c0a030" stroke-width="0.800"/><path d="M31.500 178c0 -3 10 -3 10 0v8c0 3 -10 3 -10 0z" fill="#7c8798" stroke="#4a5260" stroke-width="1"/><ellipse cx="36.500" cy="178" rx="5" ry="1.800" fill="#b9c2d0" stroke="#4a5260" stroke-width="0.800"/><rect x="34.500" y="181" width="4" height="4" fill="#e8ecf4"/>
<path d="M50 186.500l8.300 -5l8.300 5l-8.300 5z" fill="#e8dcb0" stroke="#b0a070" stroke-width="0.900"/><path d="M50 182.500l8.300 -5.500l8.300 5.500l-8.300 5z" fill="#f0d050" stroke="#c0a030" stroke-width="0.900"/>
<path d="M72 186l8.300 6.500l8.300 -6.500v-1.500h-16.600z" fill="#f0d45a" stroke="#c0a030" stroke-width="0.800"/><rect x="74.500" y="176" width="11.500" height="10" fill="#28a8c8" stroke="#3a4a5a" stroke-width="1"/><rect x="80.500" y="177.500" width="4.500" height="4" fill="#e8f4fa"/>
<path d="M94.200 176v17" stroke="#d4d4d4"/>
<rect x="102" y="177.500" width="12.500" height="14" fill="#e4e6e8" stroke="#b8bcc0" stroke-width="1"/><path d="M104 181.500h3M104 187.500h3" stroke="#556" stroke-width="1.800"/><path d="M108.500 181.500h5M108.500 187.500h5" stroke="#aab" stroke-width="1.200"/>
<rect x="8.5" y="205.5" width="9" height="9" rx="1" fill="#fafafa" stroke="#b4b4b4" stroke-width="1"/><path d="M10.5 210h5" stroke="#8a8a8a" stroke-width="1"/>
<path d="M23.500 206l3 -3.500h12l-3 3.500zM23.500 209.700l3 -3.500h12l-3 3.500zM23.500 213.400l3 -3.500h12l-3 3.500z" fill="#f2bd4e" stroke="#d89a28" stroke-width="0.700"/>
<rect x="27.2" y="223.3" width="9" height="9" rx="1" fill="#fafafa" stroke="#b4b4b4" stroke-width="1"/><path d="M29.2 227.8h5" stroke="#8a8a8a" stroke-width="1"/>
<rect x="44.5" y="221.2" width="11" height="11" fill="#fff" stroke="#3c3c3c" stroke-width="1.500"/><path d="M47 226.7l2.300 2.600l4 -5.200" fill="none" stroke="#111" stroke-width="1.900"/>
<rect x="27.2" y="258.8" width="9" height="9" rx="1" fill="#fafafa" stroke="#b4b4b4" stroke-width="1"/><path d="M29.2 263.3h5" stroke="#8a8a8a" stroke-width="1"/>
<rect x="44.5" y="256.7" width="11" height="11" fill="#fff" stroke="#3c3c3c" stroke-width="1.500"/><path d="M47 262.2l2.300 2.600l4 -5.200" fill="none" stroke="#111" stroke-width="1.900"/>
<rect x="27.2" y="294.5" width="9" height="9" rx="1" fill="#fafafa" stroke="#b4b4b4" stroke-width="1"/><path d="M29.2 299.0h5" stroke="#8a8a8a" stroke-width="1"/>
<rect x="44.5" y="292.4" width="11" height="11" fill="#fff" stroke="#3c3c3c" stroke-width="1.500"/><path d="M47 297.9l2.300 2.600l4 -5.200" fill="none" stroke="#111" stroke-width="1.900"/>
<rect x="27.2" y="330.3" width="9" height="9" rx="1" fill="#fafafa" stroke="#b4b4b4" stroke-width="1"/><path d="M29.2 334.8h5" stroke="#8a8a8a" stroke-width="1"/>
<rect x="44.5" y="328.2" width="11" height="11" fill="#fff" stroke="#3c3c3c" stroke-width="1.500"/><path d="M47 333.7l2.300 2.600l4 -5.200" fill="none" stroke="#111" stroke-width="1.900"/>
<rect x="27.2" y="366.0" width="9" height="9" rx="1" fill="#fafafa" stroke="#b4b4b4" stroke-width="1"/><path d="M29.2 370.5h5" stroke="#8a8a8a" stroke-width="1"/>
<rect x="44.5" y="363.9" width="11" height="11" fill="#fff" stroke="#3c3c3c" stroke-width="1.500"/><path d="M47 369.4l2.300 2.600l4 -5.200" fill="none" stroke="#111" stroke-width="1.900"/>
<path d="M64.500 241.300l2.700 2.700l-2.700 2.700l-2.700 -2.700z" fill="#5a0f4a"/>
<path d="M59.500 279.800h14" stroke="#b8436e" stroke-width="1.300"/>
<path d="M59.500 316h14" stroke="#8a5aa0" stroke-width="1.300"/>
<rect x="60" y="346.500" width="14.500" height="10.500" fill="#d6f3ee" stroke="#8fa3a8" stroke-width="1"/>
<path d="M1326 160.500l4 -4l4 4" fill="none" stroke="#555" stroke-width="1.700"/>
<rect x="1345.500" y="154" width="14" height="13" fill="#e8d870" stroke="#8a8a6a" stroke-width="0.800"/><rect x="1345.500" y="154" width="14" height="4" fill="#3a5a9a"/><path d="M1349 163l4 -3l5 2v4h-9z" fill="#d8b830"/>
<rect x="1345.500" y="225.500" width="14" height="12" fill="#eef2f6" stroke="#6a7a8a" stroke-width="0.800"/><rect x="1345.500" y="225.500" width="14" height="3.500" fill="#3a5a9a"/><circle cx="1353" cy="236" r="3.300" fill="#48a0c8" stroke="#2a5a8a" stroke-width="1.200"/>
<rect x="1345.500" y="304.500" width="12" height="12" fill="#f4f4f4" stroke="#8a8a8a" stroke-width="0.800"/><path d="M1345.500 308.500h12M1349.500 304.500v12" stroke="#c8a860" stroke-width="1"/><path d="M1352 312l7 -8" stroke="#8a6a3a" stroke-width="2"/>
<path d="M1162.500 665.500v14.500l3.500 -3.200l2.600 5.600l2.600 -1.200l-2.600 -5.400h4.600z" fill="#fff" stroke="#333" stroke-width="1.100" stroke-linejoin="round"/>
</svg>
<!--UI-END-->
</div>
<div id="ctrl">
  <div id="time">۰۰:۲۶ / ۰۴:۵۶</div>
</div>
<svg id="ctrlsvg" style="position:absolute;left:0;top:0" width="1360" height="750" viewBox="0 0 1360 750">
  <rect x="30" y="704" width="1300" height="2" fill="#8c8c8c"/>
  <rect x="30" y="704" width="263" height="2" fill="#e2e2e2"/>
  <rect x="30" y="704" width="115" height="2" fill="#e6164f"/>
  <rect x="32.500" y="721" width="6.800" height="21.500" rx="3" fill="#e6e6e6"/>
  <rect x="42.800" y="721" width="6.800" height="21.500" rx="3" fill="#e6e6e6"/>
  <g fill="none" stroke="#e6e6e6" stroke-width="2.100" stroke-linecap="round">
    <path d="M80.400 728.600a8 8 0 1 0 6.200 -3"/>
    <path d="M139.200 728.600a8 8 0 1 1 -6.200 -3"/>
  </g>
  <path d="M81.800 725.600l6 -4.200v8.400z" fill="#e6e6e6"/>
  <path d="M137.800 725.600l-6 -4.200v8.400z" fill="#e6e6e6"/>
  <text x="86.700" y="736.300" text-anchor="middle" font-family="DejaVu Sans, sans-serif" font-weight="bold" font-size="6.500" fill="#e6e6e6">۱۵</text>
  <text x="133" y="736.300" text-anchor="middle" font-family="DejaVu Sans, sans-serif" font-weight="bold" font-size="6.500" fill="#e6e6e6">۱۵</text>
  <path d="M168.500 728.500h4.500l6 -5.500v18.500l-6 -5.500h-4.500z" fill="#e6e6e6"/>
  <path d="M181.500 727.200a6 6 0 0 1 0 10M182.800 724a9.500 9.500 0 0 1 0 16.500" fill="none" stroke="#e6e6e6" stroke-width="2.100" stroke-linecap="round"/>
  <g transform="translate(1180.900 732)" fill="#ececec">
    <path d="M-1.7 -6.4 -1.5 -8.7 1.5 -8.7 1.7 -6.4 3.3 -5.7 5.1 -7.2 7.2 -5.1 5.7 -3.3 6.4 -1.7 8.7 -1.5 8.7 1.5 6.4 1.7 5.7 3.3 7.2 5.1 5.1 7.2 3.3 5.7 1.7 6.4 1.5 8.7 -1.5 8.7 -1.7 6.4 -3.3 5.7 -5.1 7.2 -7.2 5.1 -5.7 3.3 -6.4 1.7 -8.7 1.5 -8.7 -1.5 -6.4 -1.7 -5.7 -3.3 -7.2 -5.1 -5.1 -7.2 -3.3 -5.7Z" stroke="#ececec" stroke-width="1.2" stroke-linejoin="round"/>
    <circle cx="0" cy="0" r="3" fill="#454545"/>
  </g>
  <rect x="1217" y="726" width="20" height="12" rx="2" fill="none" stroke="#ececec" stroke-width="2"/>
  <rect x="1262" y="723" width="22" height="18" rx="2" fill="#ececec"/>
  <rect x="1273.200" y="733" width="8.300" height="6" fill="#454545"/>
  <path d="M1309.500 728.500h6v-6M1322.500 722.500v6h6M1309.500 735.500h6v6M1322.500 741.500v-6h6" fill="none" stroke="#ececec" stroke-width="2.600"/>
</svg>
</body>
</html>
